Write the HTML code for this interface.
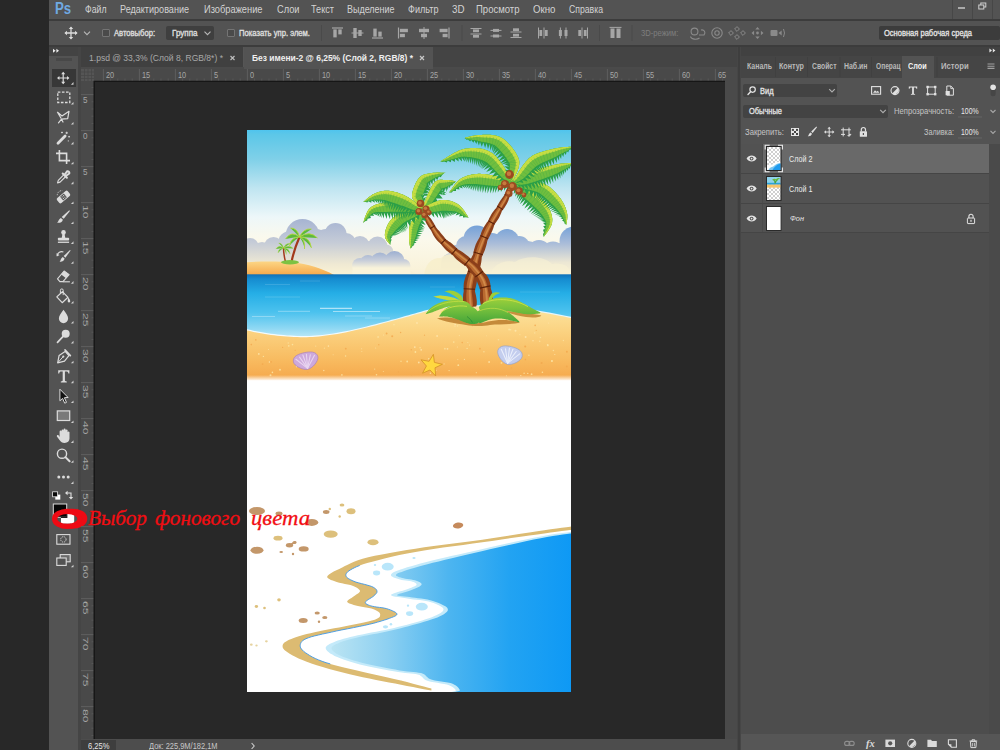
<!DOCTYPE html>
<html lang="ru"><head><meta charset="utf-8"><title>Photoshop</title>
<style>
html,body{margin:0;padding:0;background:#282828;}
body{width:1000px;height:750px;overflow:hidden;font-family:"Liberation Sans",sans-serif;}
#app{position:relative;width:1000px;height:750px;overflow:hidden;background:#282828;}
.b{position:absolute;}
.t{position:absolute;white-space:nowrap;transform-origin:0 50%;font-family:"Liberation Sans",sans-serif;}
svg{position:absolute;overflow:visible;}

</style></head>
<body>
<div id="app">
<!-- window background -->
<div class="b" style="left:49px;top:0;width:951px;height:750px;background:#535353"></div>
<!-- menu bar -->
<div class="b" style="left:49px;top:0;width:951px;height:19px;background:#535353"></div>
<div class="b" style="left:49px;top:19px;width:951px;height:2px;background:#3c3c3c"></div>
<!-- options bar -->
<div class="b" style="left:49px;top:21px;width:951px;height:24px;background:#535353"></div>
<div class="b" style="left:49px;top:45px;width:951px;height:2px;background:#3c3c3c"></div>
<!-- toolbar -->
<div class="b" style="left:49px;top:47px;width:30px;height:9px;background:#434343"></div>
<div class="b" style="left:49px;top:56px;width:29px;height:694px;background:#535353"></div>
<div class="b" style="left:56px;top:58px;width:16px;height:3px;background:#484848"></div>
<div class="b" style="left:78px;top:47px;width:3px;height:703px;background:#454545"></div>
<div class="b" style="left:52px;top:69px;width:24px;height:18px;background:#373737"></div>
<!-- doc tab bar -->
<div class="b" style="left:81px;top:47px;width:656px;height:22px;background:#444444"></div>
<div class="b" style="left:81px;top:47px;width:162px;height:20px;background:#404040"></div>
<div class="b" style="left:81px;top:67px;width:656px;height:2px;background:#4a4a4a"></div>
<div class="b" style="left:243px;top:47px;width:1.5px;height:20px;background:#565656"></div>
<div class="b" style="left:244px;top:47px;width:189px;height:22px;background:#535353"></div>
<!-- rulers -->
<div class="b" style="left:81px;top:69px;width:644px;height:12px;background:#494949"></div>
<div class="b" style="left:81px;top:69px;width:13px;height:670px;background:#494949"></div>
<!-- canvas -->
<div class="b" style="left:94px;top:81px;width:631px;height:658px;background:#282828"></div>
<!-- scroll track right -->
<div class="b" style="left:725px;top:69px;width:12px;height:681px;background:#4a4a4a"></div>
<!-- status bar -->
<div class="b" style="left:81px;top:739px;width:656px;height:11px;background:#4d4d4d"></div>
<div class="b" style="left:81px;top:740px;width:35px;height:10px;background:#3e3e3e"></div>
<!-- gutter -->
<div class="b" style="left:737px;top:47px;width:4px;height:703px;background:#464646"></div>
<div class="b" style="left:737.5px;top:47px;width:2px;height:703px;background:#3e3e3e"></div>
<!-- right panel -->
<div class="b" style="left:741px;top:47px;width:259px;height:9px;background:#414141"></div>
<div class="b" style="left:741px;top:56px;width:259px;height:22px;background:#454545"></div>
<div class="b" style="left:902px;top:56px;width:32px;height:22px;background:#535353"></div>
<div class="b" style="left:741px;top:78px;width:259px;height:66px;background:#535353"></div>
<div class="b" style="left:741px;top:144px;width:259px;height:590px;background:#4d4d4d"></div>
<div class="b" style="left:741px;top:734px;width:259px;height:16px;background:#565656"></div>
<!-- layers rows -->
<div class="b" style="left:741px;top:144px;width:248px;height:89px;background:#525252"></div>
<div class="b" style="left:763px;top:144px;width:226px;height:29px;background:#696969"></div>
<div class="b" style="left:741px;top:173px;width:248px;height:1px;background:#454545"></div>
<div class="b" style="left:741px;top:203px;width:248px;height:1px;background:#454545"></div>
<div class="b" style="left:741px;top:232px;width:248px;height:1px;background:#454545"></div>
<div class="b" style="left:989px;top:144px;width:11px;height:590px;background:#4a4a4a"></div>
<!-- dropdown boxes -->
<div class="b" style="left:166px;top:26px;width:48px;height:14px;background:#3f3f3f;border-radius:2px"></div>
<div class="b" style="left:879px;top:26px;width:121px;height:14px;background:#3c3c3c;border-radius:2px"></div>
<div class="b" style="left:743px;top:84px;width:94px;height:13px;background:#434343;border-radius:2px"></div>
<div class="b" style="left:743px;top:105px;width:145px;height:13px;background:#434343;border-radius:2px"></div>
<!-- checkboxes -->
<div class="b" style="left:102.3px;top:29px;width:6px;height:6px;border:1px solid #747474;border-radius:1px;box-sizing:content-box;background:#4a4a4a"></div>
<div class="b" style="left:227px;top:29px;width:6px;height:6px;border:1px solid #747474;border-radius:1px;box-sizing:content-box;background:#4a4a4a"></div>

<svg style="left:247px;top:130px;overflow:hidden" width="324" height="562" viewBox="247 130 324 562">
<defs>
<linearGradient id="sky" x1="0" y1="130" x2="0" y2="275" gradientUnits="userSpaceOnUse">
<stop offset="0" stop-color="#4fc4ee"/><stop offset="0.03" stop-color="#5cc7e8"/><stop offset="0.2" stop-color="#7fd0e8"/><stop offset="0.4" stop-color="#bfe5f1"/><stop offset="0.6" stop-color="#edf7f9"/><stop offset="0.75" stop-color="#fbf9ec"/><stop offset="1" stop-color="#f9f1d6"/></linearGradient>
<linearGradient id="cl1" x1="0" y1="219" x2="0" y2="272" gradientUnits="userSpaceOnUse">
<stop offset="0" stop-color="#a6b4d2"/><stop offset="0.45" stop-color="#c6ccd7"/><stop offset="0.85" stop-color="#efe9d3"/><stop offset="1" stop-color="#f8f0d4"/></linearGradient>
<linearGradient id="cl2" x1="0" y1="224" x2="0" y2="272" gradientUnits="userSpaceOnUse">
<stop offset="0" stop-color="#6f9fd8"/><stop offset="0.4" stop-color="#a9bcd9"/><stop offset="0.8" stop-color="#ece7d4"/><stop offset="1" stop-color="#f8f0d4"/></linearGradient>
<linearGradient id="cl3" x1="0" y1="250" x2="0" y2="268" gradientUnits="userSpaceOnUse">
<stop offset="0" stop-color="#97abd0"/><stop offset="0.6" stop-color="#c9cfda"/><stop offset="1" stop-color="#f9f3da"/></linearGradient>
<linearGradient id="sea" x1="0" y1="274" x2="0" y2="338" gradientUnits="userSpaceOnUse">
<stop offset="0" stop-color="#0f6fb8"/><stop offset="0.08" stop-color="#168cd0"/><stop offset="0.3" stop-color="#25aee6"/><stop offset="0.6" stop-color="#4cc2ee"/><stop offset="0.85" stop-color="#8fd8f3"/><stop offset="1" stop-color="#bfe9f8"/></linearGradient>
<linearGradient id="sand" x1="0" y1="305" x2="0" y2="378" gradientUnits="userSpaceOnUse">
<stop offset="0" stop-color="#fde6a2"/><stop offset="0.35" stop-color="#fbd382"/><stop offset="0.75" stop-color="#f8bb60"/><stop offset="1" stop-color="#f5a94d"/></linearGradient>
<linearGradient id="isl" x1="0" y1="261" x2="0" y2="275" gradientUnits="userSpaceOnUse">
<stop offset="0" stop-color="#fcd787"/><stop offset="1" stop-color="#f5a84a"/></linearGradient>
<linearGradient id="fade" x1="0" y1="375" x2="0" y2="381" gradientUnits="userSpaceOnUse">
<stop offset="0" stop-color="#fff" stop-opacity="0"/><stop offset="1" stop-color="#fff"/></linearGradient>
<linearGradient id="water" x1="326" y1="0" x2="571" y2="0" gradientUnits="userSpaceOnUse">
<stop offset="0" stop-color="#bfe6f3"/><stop offset="0.25" stop-color="#8dd0f1"/><stop offset="0.5" stop-color="#4db5f0"/><stop offset="0.75" stop-color="#22a3f2"/><stop offset="1" stop-color="#0e99f5"/></linearGradient>
<linearGradient id="trunk" x1="0" y1="0" x2="1" y2="0">
<stop offset="0" stop-color="#7a3514"/><stop offset="0.45" stop-color="#c77a3f"/><stop offset="1" stop-color="#8a3f18"/></linearGradient>
</defs>
<rect x="247" y="130" width="324" height="562" fill="#fff"/>
<rect x="247" y="130" width="324" height="146" fill="url(#sky)"/>
<g fill="url(#cl1)"><circle cx="250.0" cy="247.0" r="9.0"/><circle cx="262.0" cy="251.0" r="9.0"/><circle cx="273.5" cy="246.5" r="9.5"/><circle cx="284.0" cy="249.0" r="10.0"/><circle cx="302.5" cy="236.0" r="17.0"/><circle cx="290.0" cy="243.0" r="12.0"/><circle cx="316.0" cy="242.0" r="13.0"/><circle cx="326.0" cy="240.0" r="11.0"/><circle cx="335.5" cy="234.0" r="11.0"/><circle cx="346.0" cy="243.0" r="10.0"/><circle cx="360.0" cy="245.5" r="9.5"/><circle cx="369.0" cy="250.0" r="9.0"/><circle cx="377.5" cy="246.5" r="10.0"/><circle cx="386.0" cy="252.0" r="7.5"/><path d="M247,247 L286,240 L350,240 L386,247 L395,262 L420,276 L247,276Z"/></g>
<g fill="url(#cl3)"><circle cx="360.0" cy="266.0" r="8.0"/><circle cx="368.0" cy="263.0" r="8.0"/><circle cx="380.0" cy="262.0" r="9.5"/><circle cx="394.5" cy="261.0" r="10.0"/><circle cx="403.5" cy="266.0" r="7.0"/><path d="M353,267 L410,267 L411,276 L352,276Z"/></g>
<g fill="url(#cl2)"><circle cx="451.0" cy="263.0" r="10.0"/><circle cx="458.0" cy="254.0" r="9.5"/><circle cx="466.0" cy="246.0" r="10.0"/><circle cx="477.0" cy="239.0" r="13.5"/><circle cx="492.0" cy="245.0" r="12.0"/><circle cx="507.0" cy="241.0" r="12.0"/><circle cx="519.0" cy="247.0" r="11.0"/><circle cx="528.0" cy="251.0" r="10.0"/><circle cx="539.0" cy="252.0" r="12.0"/><circle cx="553.0" cy="254.0" r="12.5"/><circle cx="565.0" cy="250.0" r="9.0"/><circle cx="574.0" cy="241.0" r="14.5"/><path d="M441,263 L452,250 L571,244 L571,276 L441,276Z"/></g>
<path d="M424,276 C425,263 433,257 441,258 C447,253 457,253 463,259 C470,257 477,263 479,276Z" fill="#f7eecb" opacity="0.85"/>
<path d="M490,276 C492,264 505,259 515,262 C525,255 545,256 552,264 C562,262 571,266 571,276Z" fill="#f9f1d4" opacity="0.6"/>
<path d="M247,262.3 C262,261 280,261.3 292,262.3 C308,264 322,268.5 334,275 L247,275Z" fill="url(#isl)"/>
<path d="M291.5,262.0 Q294.0,249.5 299.5,237.0" stroke="#a3391c" stroke-width="2.2" fill="none" stroke-linecap="round"/><path d="M299.5,237.0 Q291.5,230.0 285.5,239.0 Q292.6,237.6 299.5,237.0" fill="#5dba3b"/><path d="M299.5,237.0 Q291.5,230.0 285.5,239.0" stroke="#b4d83e" stroke-width="0.9" fill="none"/><path d="M299.5,237.0 Q297.5,228.0 290.5,228.0 Q296.9,234.2 299.5,237.0" fill="#5dba3b"/><path d="M299.5,237.0 Q297.5,228.0 290.5,228.0" stroke="#b4d83e" stroke-width="0.9" fill="none"/><path d="M299.5,237.0 Q303.5,228.0 311.5,229.0 Q303.7,234.5 299.5,237.0" fill="#5dba3b"/><path d="M299.5,237.0 Q303.5,228.0 311.5,229.0" stroke="#b4d83e" stroke-width="0.9" fill="none"/><path d="M299.5,237.0 Q309.5,230.0 317.5,238.0 Q308.2,237.3 299.5,237.0" fill="#5dba3b"/><path d="M299.5,237.0 Q309.5,230.0 317.5,238.0" stroke="#b4d83e" stroke-width="0.9" fill="none"/><path d="M299.5,237.0 Q309.5,236.0 311.5,248.0 Q307.3,241.6 299.5,237.0" fill="#5dba3b"/><path d="M299.5,237.0 Q309.5,236.0 311.5,248.0" stroke="#b4d83e" stroke-width="0.9" fill="none"/><path d="M299.5,237.0 Q290.5,237.0 289.5,246.0 Q292.6,241.4 299.5,237.0" fill="#5dba3b"/><path d="M299.5,237.0 Q290.5,237.0 289.5,246.0" stroke="#b4d83e" stroke-width="0.9" fill="none"/><path d="M299.5,237.0 Q305.5,239.0 304.5,249.0 Q303.9,242.8 299.5,237.0" fill="#5dba3b"/><path d="M299.5,237.0 Q305.5,239.0 304.5,249.0" stroke="#b4d83e" stroke-width="0.9" fill="none"/>
<path d="M285.5,262.0 Q283.7,255.0 283.5,248.0" stroke="#a3391c" stroke-width="1.5" fill="none" stroke-linecap="round"/><path d="M283.5,248.0 Q279.1,244.2 275.8,249.1 Q279.7,248.3 283.5,248.0" fill="#5dba3b"/><path d="M283.5,248.0 Q279.1,244.2 275.8,249.1" stroke="#b4d83e" stroke-width="0.5" fill="none"/><path d="M283.5,248.0 Q282.4,243.1 278.6,243.1 Q282.1,246.5 283.5,248.0" fill="#5dba3b"/><path d="M283.5,248.0 Q282.4,243.1 278.6,243.1" stroke="#b4d83e" stroke-width="0.5" fill="none"/><path d="M283.5,248.0 Q285.7,243.1 290.1,243.6 Q285.8,246.6 283.5,248.0" fill="#5dba3b"/><path d="M283.5,248.0 Q285.7,243.1 290.1,243.6" stroke="#b4d83e" stroke-width="0.5" fill="none"/><path d="M283.5,248.0 Q289.0,244.2 293.4,248.6 Q288.3,248.2 283.5,248.0" fill="#5dba3b"/><path d="M283.5,248.0 Q289.0,244.2 293.4,248.6" stroke="#b4d83e" stroke-width="0.5" fill="none"/><path d="M283.5,248.0 Q289.0,247.4 290.1,254.1 Q287.8,250.6 283.5,248.0" fill="#5dba3b"/><path d="M283.5,248.0 Q289.0,247.4 290.1,254.1" stroke="#b4d83e" stroke-width="0.5" fill="none"/><path d="M283.5,248.0 Q278.6,248.0 278.0,252.9 Q279.7,250.4 283.5,248.0" fill="#5dba3b"/><path d="M283.5,248.0 Q278.6,248.0 278.0,252.9" stroke="#b4d83e" stroke-width="0.5" fill="none"/><path d="M283.5,248.0 Q286.8,249.1 286.2,254.6 Q285.9,251.2 283.5,248.0" fill="#5dba3b"/><path d="M283.5,248.0 Q286.8,249.1 286.2,254.6" stroke="#b4d83e" stroke-width="0.5" fill="none"/>
<ellipse cx="290" cy="262.3" rx="9" ry="2.2" fill="#7cc242"/>
<rect x="247" y="274.3" width="324" height="70" fill="url(#sea)"/>
<path d="M320,308.3 L352,308.3" stroke="#fff" stroke-opacity="0.80" stroke-width="0.9"/>
<path d="M333,311.5 L380,311.5" stroke="#fff" stroke-opacity="0.55" stroke-width="0.9"/>
<path d="M278,311.3 L310,311.3" stroke="#fff" stroke-opacity="0.40" stroke-width="0.9"/>
<path d="M252,316.5 L275,316.5" stroke="#fff" stroke-opacity="0.35" stroke-width="0.9"/>
<path d="M345,316.0 L372,316.0" stroke="#fff" stroke-opacity="0.30" stroke-width="0.9"/>
<path d="M365,318.0 L390,318.0" stroke="#fff" stroke-opacity="0.30" stroke-width="0.9"/>
<path d="M265,297.0 L300,297.0" stroke="#fff" stroke-opacity="0.18" stroke-width="0.9"/>
<path d="M300,281.0 L320,281.0" stroke="#fff" stroke-opacity="0.15" stroke-width="0.9"/>
<path d="M265,284.5 L290,284.5" stroke="#fff" stroke-opacity="0.15" stroke-width="0.9"/>
<path d="M430,287.0 L455,287.0" stroke="#fff" stroke-opacity="0.12" stroke-width="0.9"/>
<path d="M520,292.0 L560,292.0" stroke="#fff" stroke-opacity="0.12" stroke-width="0.9"/>
<path d="M247.0,330.5 L248.6,330.8 L250.8,331.3 L253.5,331.9 L256.4,332.5 L259.3,333.0 L262.2,333.5 L265.0,334.0 L268.0,334.5 L271.0,334.9 L274.1,335.3 L277.2,335.7 L280.4,336.0 L283.7,336.3 L287.1,336.6 L290.6,336.8 L294.0,337.0 L297.4,337.1 L300.6,337.2 L303.7,337.2 L306.6,337.2 L309.6,337.1 L312.5,336.9 L315.6,336.7 L318.9,336.4 L322.4,336.1 L326.0,335.6 L329.7,335.1 L333.5,334.6 L337.4,334.0 L341.3,333.3 L345.4,332.5 L349.6,331.6 L353.9,330.6 L358.2,329.6 L362.5,328.6 L366.7,327.6 L371.0,326.5 L375.4,325.4 L379.7,324.3 L383.9,323.1 L387.9,322.1 L391.7,321.0 L395.3,320.1 L398.8,319.1 L402.1,318.2 L405.3,317.3 L408.5,316.4 L411.7,315.5 L414.8,314.6 L417.9,313.7 L420.9,312.9 L423.9,312.0 L426.8,311.3 L429.7,310.6 L432.4,310.0 L435.1,309.5 L437.8,309.0 L440.7,308.5 L443.8,308.1 L447.4,307.8 L451.3,307.4 L455.4,307.1 L459.7,306.9 L464.2,306.7 L468.8,306.5 L473.5,306.5 L478.7,306.5 L484.1,306.5 L489.4,306.6 L494.5,306.8 L499.1,307.0 L503.2,307.2 L506.6,307.4 L509.8,307.7 L512.9,308.1 L516.0,308.5 L519.5,308.9 L523.4,309.5 L527.5,310.1 L531.7,310.7 L536.0,311.5 L540.4,312.2 L544.7,312.9 L549.3,313.8 L554.3,314.7 L559.4,315.7 L564.1,316.6 L568.1,317.4 L571.0,318.0 L571,381 L247,381Z" fill="#fff" transform="translate(0,-1.2)" opacity="0.85"/>
<path d="M247.0,330.5 L248.6,330.8 L250.8,331.3 L253.5,331.9 L256.4,332.5 L259.3,333.0 L262.2,333.5 L265.0,334.0 L268.0,334.5 L271.0,334.9 L274.1,335.3 L277.2,335.7 L280.4,336.0 L283.7,336.3 L287.1,336.6 L290.6,336.8 L294.0,337.0 L297.4,337.1 L300.6,337.2 L303.7,337.2 L306.6,337.2 L309.6,337.1 L312.5,336.9 L315.6,336.7 L318.9,336.4 L322.4,336.1 L326.0,335.6 L329.7,335.1 L333.5,334.6 L337.4,334.0 L341.3,333.3 L345.4,332.5 L349.6,331.6 L353.9,330.6 L358.2,329.6 L362.5,328.6 L366.7,327.6 L371.0,326.5 L375.4,325.4 L379.7,324.3 L383.9,323.1 L387.9,322.1 L391.7,321.0 L395.3,320.1 L398.8,319.1 L402.1,318.2 L405.3,317.3 L408.5,316.4 L411.7,315.5 L414.8,314.6 L417.9,313.7 L420.9,312.9 L423.9,312.0 L426.8,311.3 L429.7,310.6 L432.4,310.0 L435.1,309.5 L437.8,309.0 L440.7,308.5 L443.8,308.1 L447.4,307.8 L451.3,307.4 L455.4,307.1 L459.7,306.9 L464.2,306.7 L468.8,306.5 L473.5,306.5 L478.7,306.5 L484.1,306.5 L489.4,306.6 L494.5,306.8 L499.1,307.0 L503.2,307.2 L506.6,307.4 L509.8,307.7 L512.9,308.1 L516.0,308.5 L519.5,308.9 L523.4,309.5 L527.5,310.1 L531.7,310.7 L536.0,311.5 L540.4,312.2 L544.7,312.9 L549.3,313.8 L554.3,314.7 L559.4,315.7 L564.1,316.6 L568.1,317.4 L571.0,318.0 L571,381 L247,381Z" fill="url(#sand)"/>
<circle cx="457.6" cy="325.9" r="0.7" fill="#fde9a8" opacity="0.8"/>
<circle cx="268.5" cy="349.4" r="0.5" fill="#fde9a8" opacity="0.8"/>
<circle cx="383.4" cy="335.0" r="0.5" fill="#ffe9b0" opacity="0.8"/>
<circle cx="430.4" cy="373.2" r="0.8" fill="#fde9a8" opacity="0.8"/>
<circle cx="376.5" cy="374.7" r="0.8" fill="#fde9a8" opacity="0.8"/>
<circle cx="292.5" cy="344.6" r="0.8" fill="#fde9a8" opacity="0.8"/>
<circle cx="428.7" cy="358.8" r="0.8" fill="#fde9a8" opacity="0.8"/>
<circle cx="453.8" cy="342.1" r="0.8" fill="#fde9a8" opacity="0.8"/>
<circle cx="447.5" cy="348.8" r="0.9" fill="#ffe9b0" opacity="0.8"/>
<circle cx="398.5" cy="371.9" r="0.6" fill="#f3a84e" opacity="0.8"/>
<circle cx="503.4" cy="359.7" r="0.5" fill="#fce3a0" opacity="0.8"/>
<circle cx="345.8" cy="348.7" r="0.9" fill="#f3a84e" opacity="0.8"/>
<circle cx="341.9" cy="374.9" r="0.8" fill="#fde9a8" opacity="0.8"/>
<circle cx="547.7" cy="344.8" r="0.9" fill="#fde9a8" opacity="0.8"/>
<circle cx="432.8" cy="369.3" r="0.7" fill="#f3a84e" opacity="0.8"/>
<circle cx="361.7" cy="348.8" r="0.5" fill="#ffe9b0" opacity="0.8"/>
<circle cx="472.4" cy="325.5" r="0.8" fill="#f3a84e" opacity="0.8"/>
<circle cx="566.8" cy="366.4" r="0.9" fill="#f3a84e" opacity="0.8"/>
<circle cx="533.0" cy="340.7" r="0.7" fill="#ffe9b0" opacity="0.8"/>
<circle cx="444.9" cy="348.7" r="0.9" fill="#fce3a0" opacity="0.8"/>
<circle cx="374.7" cy="369.1" r="0.6" fill="#fde9a8" opacity="0.8"/>
<circle cx="378.1" cy="337.0" r="0.9" fill="#fce3a0" opacity="0.8"/>
<circle cx="525.6" cy="337.0" r="1.0" fill="#ffe9b0" opacity="0.8"/>
<circle cx="467.8" cy="342.5" r="0.6" fill="#fce3a0" opacity="0.8"/>
<circle cx="324.4" cy="348.2" r="0.6" fill="#fce3a0" opacity="0.8"/>
<circle cx="251.3" cy="344.6" r="0.8" fill="#f3a84e" opacity="0.8"/>
<circle cx="524.1" cy="373.3" r="0.7" fill="#fde9a8" opacity="0.8"/>
<circle cx="527.8" cy="373.4" r="0.7" fill="#ffe9b0" opacity="0.8"/>
<circle cx="375.7" cy="348.0" r="0.5" fill="#ffe9b0" opacity="0.8"/>
<circle cx="528.9" cy="355.2" r="0.8" fill="#fce3a0" opacity="0.8"/>
<circle cx="554.8" cy="354.5" r="0.6" fill="#ffe9b0" opacity="0.8"/>
<circle cx="520.8" cy="375.6" r="0.7" fill="#ffe9b0" opacity="0.8"/>
<circle cx="489.1" cy="362.0" r="0.9" fill="#ffe9b0" opacity="0.8"/>
<circle cx="553.4" cy="350.5" r="0.8" fill="#fce3a0" opacity="0.8"/>
<circle cx="541.6" cy="362.9" r="1.0" fill="#f3a84e" opacity="0.8"/>
<circle cx="525.4" cy="359.6" r="0.8" fill="#f3a84e" opacity="0.8"/>
<circle cx="539.7" cy="341.2" r="0.8" fill="#fce3a0" opacity="0.8"/>
<circle cx="498.5" cy="339.8" r="0.8" fill="#fce3a0" opacity="0.8"/>
<circle cx="501.5" cy="362.9" r="0.9" fill="#fce3a0" opacity="0.8"/>
<circle cx="511.0" cy="362.0" r="0.6" fill="#fce3a0" opacity="0.8"/>
<circle cx="407.2" cy="361.5" r="0.9" fill="#fde9a8" opacity="0.8"/>
<circle cx="400.6" cy="332.5" r="0.7" fill="#f3a84e" opacity="0.8"/>
<circle cx="548.9" cy="375.4" r="0.5" fill="#f3a84e" opacity="0.8"/>
<circle cx="282.6" cy="347.4" r="0.6" fill="#f3a84e" opacity="0.8"/>
<circle cx="449.1" cy="370.6" r="0.7" fill="#fde9a8" opacity="0.8"/>
<circle cx="458.3" cy="365.2" r="0.9" fill="#fde9a8" opacity="0.8"/>
<circle cx="288.2" cy="343.0" r="0.7" fill="#fce3a0" opacity="0.8"/>
<circle cx="306.9" cy="364.6" r="0.5" fill="#f3a84e" opacity="0.8"/>
<circle cx="551.8" cy="361.0" r="0.7" fill="#ffe9b0" opacity="0.8"/>
<circle cx="552.0" cy="361.1" r="1.0" fill="#fce3a0" opacity="0.8"/>
<circle cx="258.8" cy="353.9" r="0.9" fill="#ffe9b0" opacity="0.8"/>
<circle cx="296.6" cy="366.6" r="0.8" fill="#ffe9b0" opacity="0.8"/>
<circle cx="361.8" cy="351.6" r="0.5" fill="#fce3a0" opacity="0.8"/>
<circle cx="505.0" cy="361.2" r="0.8" fill="#fde9a8" opacity="0.8"/>
<circle cx="547.8" cy="345.4" r="0.9" fill="#fce3a0" opacity="0.8"/>
<circle cx="437.1" cy="336.0" r="0.9" fill="#ffe9b0" opacity="0.8"/>
<circle cx="269.4" cy="362.0" r="0.8" fill="#ffe9b0" opacity="0.8"/>
<circle cx="510.0" cy="349.9" r="0.8" fill="#fce3a0" opacity="0.8"/>
<circle cx="417.0" cy="323.0" r="0.9" fill="#ffe9b0" opacity="0.8"/>
<circle cx="444.1" cy="363.9" r="0.6" fill="#fce3a0" opacity="0.8"/>
<circle cx="401.0" cy="361.2" r="0.7" fill="#fde9a8" opacity="0.8"/>
<circle cx="415.4" cy="352.0" r="0.9" fill="#fde9a8" opacity="0.8"/>
<circle cx="535.2" cy="325.4" r="0.8" fill="#f3a84e" opacity="0.8"/>
<circle cx="411.3" cy="349.7" r="0.7" fill="#f3a84e" opacity="0.8"/>
<circle cx="420.1" cy="347.8" r="0.8" fill="#fce3a0" opacity="0.8"/>
<circle cx="529.6" cy="372.9" r="1.0" fill="#f3a84e" opacity="0.8"/>
<circle cx="534.8" cy="332.9" r="0.6" fill="#ffe9b0" opacity="0.8"/>
<circle cx="288.8" cy="345.9" r="0.8" fill="#fde9a8" opacity="0.8"/>
<circle cx="386.6" cy="333.5" r="0.9" fill="#f3a84e" opacity="0.8"/>
<circle cx="536.2" cy="330.3" r="0.6" fill="#f3a84e" opacity="0.8"/>
<circle cx="531.6" cy="374.2" r="0.9" fill="#fce3a0" opacity="0.8"/>
<circle cx="280.0" cy="369.8" r="1.0" fill="#fce3a0" opacity="0.8"/>
<circle cx="515.5" cy="330.7" r="1.0" fill="#ffe9b0" opacity="0.8"/>
<circle cx="378.8" cy="344.7" r="0.7" fill="#f3a84e" opacity="0.8"/>
<circle cx="480.4" cy="323.1" r="0.7" fill="#ffe9b0" opacity="0.8"/>
<circle cx="255.8" cy="339.9" r="0.8" fill="#f3a84e" opacity="0.8"/>
<circle cx="270.5" cy="375.2" r="1.0" fill="#fce3a0" opacity="0.8"/>
<circle cx="262.6" cy="364.1" r="0.9" fill="#f3a84e" opacity="0.8"/>
<circle cx="511.5" cy="367.9" r="0.7" fill="#f3a84e" opacity="0.8"/>
<circle cx="421.2" cy="349.8" r="0.9" fill="#ffe9b0" opacity="0.8"/>
<circle cx="469.5" cy="345.0" r="0.6" fill="#fde9a8" opacity="0.8"/>
<circle cx="333.1" cy="354.8" r="0.5" fill="#fce3a0" opacity="0.8"/>
<circle cx="525.2" cy="346.5" r="1.0" fill="#f3a84e" opacity="0.8"/>
<circle cx="383.3" cy="371.4" r="0.5" fill="#fce3a0" opacity="0.8"/>
<circle cx="476.3" cy="372.7" r="0.6" fill="#fce3a0" opacity="0.8"/>
<circle cx="307.8" cy="372.3" r="0.8" fill="#f3a84e" opacity="0.8"/>
<circle cx="315.7" cy="346.1" r="0.6" fill="#fce3a0" opacity="0.8"/>
<circle cx="506.4" cy="375.7" r="0.5" fill="#fde9a8" opacity="0.8"/>
<circle cx="483.9" cy="351.8" r="0.8" fill="#fce3a0" opacity="0.8"/>
<circle cx="328.4" cy="346.1" r="0.8" fill="#ffe9b0" opacity="0.8"/>
<circle cx="424.1" cy="370.0" r="0.8" fill="#f3a84e" opacity="0.8"/>
<circle cx="563.4" cy="340.5" r="0.7" fill="#fce3a0" opacity="0.8"/>
<circle cx="486.3" cy="335.8" r="0.5" fill="#fce3a0" opacity="0.8"/>
<circle cx="462.2" cy="342.6" r="0.8" fill="#f3a84e" opacity="0.8"/>
<circle cx="471.0" cy="324.4" r="0.6" fill="#fce3a0" opacity="0.8"/>
<circle cx="392.2" cy="336.2" r="1.0" fill="#f3a84e" opacity="0.8"/>
<circle cx="424.5" cy="335.2" r="0.6" fill="#f3a84e" opacity="0.8"/>
<circle cx="459.3" cy="335.4" r="0.5" fill="#fde9a8" opacity="0.8"/>
<circle cx="510.6" cy="329.8" r="0.7" fill="#fde9a8" opacity="0.8"/>
<circle cx="345.6" cy="356.0" r="0.8" fill="#fde9a8" opacity="0.8"/>
<circle cx="418.8" cy="362.5" r="0.9" fill="#ffe9b0" opacity="0.8"/>
<circle cx="479.9" cy="348.7" r="0.9" fill="#f3a84e" opacity="0.8"/>
<circle cx="455.2" cy="324.4" r="0.9" fill="#ffe9b0" opacity="0.8"/>
<circle cx="509.1" cy="329.5" r="0.9" fill="#fde9a8" opacity="0.8"/>
<circle cx="436.3" cy="370.2" r="0.5" fill="#fce3a0" opacity="0.8"/>
<circle cx="263.4" cy="356.4" r="0.7" fill="#fde9a8" opacity="0.8"/>
<circle cx="394.0" cy="324.7" r="0.8" fill="#fde9a8" opacity="0.8"/>
<circle cx="467.1" cy="348.4" r="0.7" fill="#fde9a8" opacity="0.8"/>
<circle cx="272.4" cy="372.4" r="0.8" fill="#fde9a8" opacity="0.8"/>
<circle cx="271.1" cy="361.8" r="0.9" fill="#f3a84e" opacity="0.8"/>
<circle cx="519.9" cy="334.7" r="0.6" fill="#fce3a0" opacity="0.8"/>
<circle cx="457.3" cy="346.9" r="0.5" fill="#ffe9b0" opacity="0.8"/>
<circle cx="540.4" cy="337.5" r="0.8" fill="#fde9a8" opacity="0.8"/>
<circle cx="455.0" cy="326.2" r="0.7" fill="#fce3a0" opacity="0.8"/>
<circle cx="457.8" cy="359.4" r="0.5" fill="#fce3a0" opacity="0.8"/>
<circle cx="464.4" cy="359.4" r="0.6" fill="#ffe9b0" opacity="0.8"/>
<circle cx="414.8" cy="347.1" r="0.9" fill="#ffe9b0" opacity="0.8"/>
<circle cx="566.9" cy="351.7" r="1.0" fill="#f3a84e" opacity="0.8"/>
<circle cx="548.7" cy="322.9" r="0.5" fill="#ffe9b0" opacity="0.8"/>
<circle cx="411.6" cy="375.7" r="0.7" fill="#f3a84e" opacity="0.8"/>
<circle cx="542.4" cy="372.2" r="0.8" fill="#fde9a8" opacity="0.8"/>
<circle cx="295.2" cy="350.3" r="0.6" fill="#f3a84e" opacity="0.8"/>
<circle cx="511.6" cy="349.5" r="0.9" fill="#fde9a8" opacity="0.8"/>
<circle cx="323.8" cy="370.5" r="0.7" fill="#ffe9b0" opacity="0.8"/>
<rect x="247" y="375" width="324" height="7" fill="url(#fade)"/>
<rect x="247" y="380.5" width="324" height="3" fill="#fff"/>
<g transform="translate(306.0,361.0) rotate(-12)"><path d="M0,8.5 C-5.0,8.5 -12.5,2.5 -12.5,-1.7 C-12.5,-7.7 -5.0,-8.5 0,-8.5 C5.0,-8.5 12.5,-7.7 12.5,-1.7 C12.5,2.5 5.0,8.5 0,8.5 Z" fill="#cda9dc" stroke="#a77fbd" stroke-width="0.6"/><path d="M0,7.5 L-9.5,-3.8" stroke="#e8d4f0" stroke-width="1.1" stroke-linecap="round"/><path d="M0,7.5 L-5.5,-5.1" stroke="#e8d4f0" stroke-width="1.1" stroke-linecap="round"/><path d="M0,7.5 L-1.8,-6.4" stroke="#e8d4f0" stroke-width="1.1" stroke-linecap="round"/><path d="M0,7.5 L1.8,-6.4" stroke="#e8d4f0" stroke-width="1.1" stroke-linecap="round"/><path d="M0,7.5 L5.5,-5.1" stroke="#e8d4f0" stroke-width="1.1" stroke-linecap="round"/><path d="M0,7.5 L9.5,-3.8" stroke="#e8d4f0" stroke-width="1.1" stroke-linecap="round"/></g>
<g transform="translate(509.5,355.5) rotate(14)"><path d="M0,9.0 C-5.0,9.0 -12.5,2.7 -12.5,-1.8 C-12.5,-8.1 -5.0,-9.0 0,-9.0 C5.0,-9.0 12.5,-8.1 12.5,-1.8 C12.5,2.7 5.0,9.0 0,9.0 Z" fill="#c3cdee" stroke="#8f9fd0" stroke-width="0.6"/><path d="M0,8.0 L-9.5,-4.1" stroke="#e9eefb" stroke-width="1.1" stroke-linecap="round"/><path d="M0,8.0 L-5.5,-5.5" stroke="#e9eefb" stroke-width="1.1" stroke-linecap="round"/><path d="M0,8.0 L-1.8,-6.9" stroke="#e9eefb" stroke-width="1.1" stroke-linecap="round"/><path d="M0,8.0 L1.8,-6.9" stroke="#e9eefb" stroke-width="1.1" stroke-linecap="round"/><path d="M0,8.0 L5.5,-5.5" stroke="#e9eefb" stroke-width="1.1" stroke-linecap="round"/><path d="M0,8.0 L9.5,-4.1" stroke="#e9eefb" stroke-width="1.1" stroke-linecap="round"/></g>
<path d="M433.4,354.3 L434.4,362.4 L442.4,364.3 L435.0,367.8 L435.7,376.0 L430.0,370.0 L422.5,373.2 L426.4,366.0 L421.0,359.8 L429.1,361.3Z" fill="#ffd83f" stroke="#d8962a" stroke-width="0.9" stroke-linejoin="round"/>
<path d="M437,318.6 C446,316 460,319 470,322.4 C474,323.6 482,323.6 488,321.6 C498,319 512,319.6 520,322.6 C515,324.6 500,324 490,325 C484,326.2 474,326.4 466,325 C455,323.4 444,321.6 437,318.6Z" fill="#c48a3a"/>
<path d="M505,311 C518,311.6 532,313.4 541.4,315.4 C540,317.4 533,318 526,317 C519,316 511,314.4 505,311Z" fill="#c8913e"/>
<path d="M509.9,183.1 L509.2,184.0 L508.4,185.3 L507.6,186.8 L506.9,188.5 L506.1,190.4 L505.4,192.3 L504.7,194.2 L503.7,195.9 L502.6,197.4 L501.5,199.0 L500.4,200.6 L499.3,202.3 L498.3,204.1 L497.3,206.0 L496.2,207.9 L494.8,209.5 L493.5,211.3 L492.2,213.0 L491.1,214.8 L490.1,216.7 L489.1,218.6 L488.3,220.7 L486.8,222.5 L485.5,224.4 L484.2,226.4 L483.1,228.5 L482.0,230.7 L481.1,233.0 L480.4,235.4 L479.3,237.7 L478.0,239.9 L476.8,242.2 L475.7,244.5 L474.9,246.9 L474.1,249.4 L473.6,251.9 L473.1,254.4 L471.9,256.7 L470.8,259.0 L469.9,261.4 L469.2,263.8 L468.6,266.2 L468.2,268.6 L467.9,271.1 L467.0,273.4 L465.9,275.8 L465.0,278.2 L464.3,280.7 L463.8,283.3 L463.6,286.0 L463.7,288.7 L463.7,291.5 L463.2,294.3 L463.0,297.2 L463.0,299.9 L463.2,302.3 L463.6,304.5 L464.1,306.2 L464.8,307.4 L476.2,306.6 L476.7,305.1 L476.8,303.2 L476.8,301.0 L476.5,298.7 L476.1,296.3 L475.6,293.9 L475.0,291.5 L475.1,289.3 L475.7,287.4 L476.1,285.4 L476.6,283.2 L476.9,281.0 L477.2,278.6 L477.4,276.2 L477.7,273.8 L478.7,271.5 L479.6,269.1 L480.3,266.8 L480.8,264.4 L481.3,262.0 L481.6,259.5 L481.8,257.1 L482.8,254.8 L483.8,252.6 L484.7,250.4 L485.5,248.1 L486.2,245.8 L486.8,243.5 L487.3,241.0 L488.2,238.8 L489.4,236.7 L490.5,234.6 L491.5,232.5 L492.4,230.4 L493.2,228.4 L493.9,226.3 L494.6,224.3 L495.9,222.6 L497.1,220.8 L498.3,219.0 L499.3,217.2 L500.2,215.3 L501.1,213.3 L501.8,211.3 L503.0,209.6 L504.3,207.9 L505.5,206.1 L506.6,204.3 L507.5,202.5 L508.4,200.5 L509.0,198.6 L509.8,196.6 L510.9,194.7 L511.8,192.7 L512.6,190.8 L513.2,189.0 L513.7,187.4 L514.0,186.0 L514.1,184.9Z" fill="#8b3f1a"/><path d="M511.0,183.6 L510.4,184.5 L509.7,185.8 L509.0,187.4 L508.3,189.1 L507.5,190.9 L506.7,192.9 L506.0,194.8 L505.1,196.6 L504.0,198.2 L503.0,199.9 L501.9,201.5 L500.9,203.3 L499.8,205.1 L498.7,206.9 L497.6,208.7 L496.4,210.5 L495.2,212.3 L494.0,214.1 L492.9,215.9 L491.8,217.7 L490.8,219.6 L489.9,221.6 L488.6,223.5 L487.4,225.4 L486.2,227.4 L485.2,229.5 L484.2,231.7 L483.2,233.9 L482.3,236.3 L481.3,238.6 L480.2,240.8 L479.1,243.1 L478.2,245.4 L477.3,247.8 L476.5,250.2 L475.9,252.6 L475.3,255.1 L474.3,257.4 L473.4,259.8 L472.6,262.1 L471.9,264.5 L471.3,266.9 L470.8,269.3 L470.4,271.8 L469.6,274.1 L468.7,276.5 L468.0,278.9 L467.4,281.3 L466.9,283.8 L466.6,286.3 L466.6,288.8 L466.6,291.5 L466.3,294.2 L466.3,297.0 L466.4,299.6 L466.6,302.0 L466.9,304.2 L467.2,305.9 L467.7,307.2 L472.8,306.8 L472.9,305.4 L472.9,303.6 L472.7,301.4 L472.5,299.1 L472.2,296.6 L471.9,294.0 L471.6,291.5 L471.7,289.1 L472.1,287.0 L472.4,284.7 L472.9,282.5 L473.3,280.2 L473.8,277.8 L474.2,275.4 L474.8,273.0 L475.6,270.6 L476.3,268.2 L476.9,265.9 L477.6,263.5 L478.1,261.1 L478.7,258.7 L479.2,256.3 L480.0,253.9 L480.9,251.6 L481.7,249.4 L482.5,247.1 L483.4,244.7 L484.2,242.4 L484.9,240.1 L485.9,237.8 L486.9,235.6 L488.0,233.4 L489.0,231.3 L489.9,229.2 L490.9,227.2 L491.8,225.2 L492.7,223.2 L493.9,221.4 L495.0,219.6 L496.1,217.8 L497.2,215.9 L498.2,214.1 L499.2,212.2 L500.2,210.3 L501.3,208.5 L502.5,206.8 L503.6,205.0 L504.7,203.2 L505.7,201.4 L506.6,199.6 L507.4,197.8 L508.3,195.9 L509.2,194.0 L510.1,192.0 L510.9,190.1 L511.5,188.4 L512.1,186.8 L512.6,185.4 L512.8,184.3Z" fill="#b9692f"/><path d="M511.8,183.9 L511.3,184.9 L510.8,186.2 L510.2,187.8 L509.4,189.6 L508.7,191.4 L507.8,193.4 L507.0,195.3 L506.1,197.1 L505.2,198.8 L504.2,200.5 L503.2,202.3 L502.1,204.0 L501.0,205.8 L499.9,207.6 L498.8,209.4 L497.6,211.2 L496.5,213.1 L495.4,214.9 L494.3,216.7 L493.2,218.6 L492.2,220.4 L491.1,222.3 L490.0,224.2 L488.9,226.2 L487.9,228.2 L486.9,230.3 L485.9,232.5 L484.9,234.7 L483.9,236.9 L482.9,239.2 L482.0,241.5 L481.0,243.8 L480.1,246.2 L479.3,248.5 L478.5,250.8 L477.7,253.2 L477.0,255.6 L476.2,258.0 L475.5,260.3 L474.8,262.7 L474.2,265.1 L473.5,267.5 L472.9,269.9 L472.3,272.3 L471.6,274.7 L471.0,277.1 L470.3,279.5 L469.8,281.8 L469.4,284.2 L469.0,286.6 L468.9,289.0 L468.8,291.5 L468.8,294.1 L468.9,296.8 L469.1,299.3 L469.3,301.7 L469.6,303.9 L469.8,305.7 L469.9,307.0 L471.6,306.9 L471.7,305.5 L471.5,303.7 L471.3,301.5 L471.1,299.2 L470.9,296.6 L470.7,294.1 L470.5,291.5 L470.6,289.1 L470.8,286.8 L471.2,284.5 L471.6,282.2 L472.1,279.9 L472.7,277.5 L473.2,275.1 L473.8,272.7 L474.5,270.3 L475.2,268.0 L475.8,265.6 L476.5,263.2 L477.1,260.8 L477.7,258.4 L478.3,256.0 L479.1,253.6 L479.9,251.3 L480.7,249.0 L481.6,246.7 L482.4,244.4 L483.3,242.1 L484.1,239.7 L485.1,237.4 L486.1,235.2 L487.1,233.0 L488.1,230.9 L489.1,228.8 L490.1,226.8 L491.1,224.8 L492.1,222.9 L493.2,221.0 L494.3,219.2 L495.4,217.3 L496.5,215.5 L497.5,213.7 L498.6,211.8 L499.6,210.0 L500.7,208.2 L501.9,206.4 L503.0,204.6 L504.1,202.8 L505.1,201.1 L506.1,199.3 L506.9,197.5 L507.8,195.6 L508.7,193.7 L509.5,191.8 L510.3,189.9 L511.0,188.1 L511.6,186.5 L512.1,185.2 L512.4,184.2Z" fill="#d08a4a"/><path d="M504.7,194.2 L509.8,196.6" stroke="#5a2008" stroke-width="1.1"/><path d="M497.3,206.0 L503.0,209.6" stroke="#5a2008" stroke-width="1.1"/><path d="M488.3,220.7 L494.6,224.3" stroke="#5a2008" stroke-width="1.1"/><path d="M480.4,235.4 L488.2,238.8" stroke="#5a2008" stroke-width="1.1"/><path d="M473.6,251.9 L482.8,254.8" stroke="#5a2008" stroke-width="1.1"/><path d="M467.9,271.1 L477.7,273.8" stroke="#5a2008" stroke-width="1.1"/><path d="M463.7,288.7 L475.1,289.3" stroke="#5a2008" stroke-width="1.1"/>
<path d="M421.3,211.9 L421.3,212.5 L421.4,213.2 L421.6,214.0 L422.0,214.8 L422.4,215.7 L423.0,216.7 L423.7,217.7 L424.3,219.0 L424.9,220.4 L425.5,221.8 L426.4,223.4 L427.4,225.1 L428.5,226.9 L429.9,228.8 L431.2,230.8 L432.3,233.0 L433.4,235.2 L434.7,237.3 L436.1,239.2 L437.6,241.0 L439.2,242.6 L440.9,243.9 L442.2,245.7 L443.5,247.3 L445.0,248.9 L446.5,250.4 L448.1,251.8 L449.8,253.0 L451.6,254.3 L453.3,255.8 L454.9,257.7 L456.6,259.4 L458.5,261.1 L460.4,262.6 L462.4,264.0 L464.4,265.3 L466.3,266.6 L467.6,268.4 L468.8,270.1 L470.0,271.7 L471.3,273.2 L472.6,274.6 L473.9,275.9 L475.3,277.0 L476.0,278.6 L476.5,280.2 L477.1,281.8 L477.6,283.3 L478.3,284.8 L478.9,286.3 L479.7,288.1 L480.2,290.4 L480.0,292.9 L479.9,295.4 L479.9,297.9 L480.0,300.2 L480.3,302.3 L480.7,304.2 L481.5,305.6 L492.5,304.4 L493.0,303.1 L493.1,301.4 L493.1,299.2 L492.9,296.8 L492.5,294.2 L491.8,291.4 L490.9,288.7 L490.5,285.9 L490.2,283.2 L489.5,280.6 L488.6,278.4 L487.4,276.3 L486.1,274.5 L484.5,272.9 L483.0,271.3 L482.0,269.4 L480.8,267.6 L479.4,266.0 L477.9,264.4 L476.2,262.9 L474.2,261.4 L471.9,260.1 L470.2,258.3 L468.4,256.5 L466.4,254.9 L464.4,253.4 L462.4,252.0 L460.4,250.8 L458.5,249.7 L456.8,248.3 L455.3,246.7 L453.7,245.2 L452.1,243.8 L450.6,242.6 L448.9,241.4 L447.3,240.3 L445.7,239.2 L444.5,237.6 L443.3,236.1 L442.0,234.5 L440.7,232.9 L439.3,231.1 L437.7,229.4 L436.2,227.6 L435.0,225.6 L434.0,223.6 L432.9,221.8 L431.8,220.1 L430.8,218.6 L429.8,217.4 L428.8,216.3 L428.1,215.3 L427.6,214.2 L427.2,213.2 L426.7,212.4 L426.2,211.6 L425.7,211.0 L425.2,210.5 L424.7,210.1Z" fill="#8b3f1a"/><path d="M422.2,211.4 L422.3,212.0 L422.5,212.7 L422.8,213.4 L423.2,214.2 L423.6,215.1 L424.2,216.0 L424.8,217.1 L425.4,218.3 L426.1,219.6 L426.8,221.0 L427.7,222.6 L428.7,224.3 L429.9,226.1 L431.1,228.0 L432.5,230.0 L433.6,232.1 L434.9,234.2 L436.2,236.2 L437.6,238.1 L439.0,239.8 L440.5,241.3 L442.1,242.8 L443.5,244.3 L444.9,245.9 L446.4,247.3 L447.9,248.7 L449.5,250.1 L451.1,251.4 L452.9,252.8 L454.6,254.3 L456.3,255.9 L458.1,257.6 L460.0,259.1 L461.9,260.7 L463.9,262.2 L465.9,263.6 L467.7,265.0 L469.3,266.7 L470.7,268.3 L472.0,269.9 L473.3,271.4 L474.6,272.9 L475.9,274.3 L477.2,275.6 L478.1,277.2 L478.9,278.8 L479.7,280.4 L480.4,282.1 L481.1,283.7 L481.7,285.5 L482.4,287.6 L482.9,290.0 L482.9,292.5 L483.0,295.1 L483.1,297.6 L483.3,300.0 L483.5,302.1 L483.8,303.9 L484.3,305.3 L489.2,304.8 L489.3,303.4 L489.3,301.7 L489.2,299.5 L489.0,297.1 L488.7,294.5 L488.3,291.9 L487.7,289.2 L487.2,286.6 L486.8,284.1 L486.1,281.9 L485.3,279.8 L484.3,278.0 L483.2,276.2 L482.0,274.6 L480.7,273.0 L479.6,271.3 L478.3,269.7 L477.0,268.1 L475.5,266.6 L474.0,265.0 L472.2,263.5 L470.3,262.1 L468.5,260.4 L466.6,258.8 L464.6,257.2 L462.7,255.7 L460.7,254.2 L458.8,252.8 L456.9,251.5 L455.2,250.1 L453.6,248.6 L452.0,247.2 L450.4,245.8 L448.9,244.5 L447.3,243.2 L445.8,241.9 L444.2,240.6 L442.9,239.1 L441.6,237.6 L440.3,235.9 L438.9,234.2 L437.5,232.4 L436.1,230.5 L434.7,228.5 L433.5,226.6 L432.3,224.6 L431.2,222.8 L430.2,221.1 L429.2,219.6 L428.3,218.3 L427.5,217.1 L426.8,216.0 L426.2,214.9 L425.7,214.0 L425.3,213.1 L424.8,212.3 L424.4,211.7 L424.1,211.1 L423.7,210.6Z" fill="#b9692f"/><path d="M422.8,211.1 L423.1,211.6 L423.4,212.2 L423.7,212.9 L424.1,213.7 L424.6,214.6 L425.1,215.5 L425.7,216.6 L426.3,217.8 L427.1,219.0 L427.9,220.4 L428.8,221.9 L429.8,223.6 L431.0,225.4 L432.2,227.4 L433.4,229.3 L434.7,231.4 L436.1,233.4 L437.4,235.3 L438.8,237.1 L440.2,238.8 L441.6,240.3 L443.1,241.8 L444.5,243.3 L446.0,244.7 L447.5,246.1 L449.0,247.4 L450.6,248.8 L452.2,250.2 L453.9,251.6 L455.6,253.0 L457.4,254.6 L459.2,256.1 L461.2,257.6 L463.1,259.1 L465.1,260.6 L467.0,262.2 L468.9,263.7 L470.6,265.3 L472.1,266.8 L473.6,268.4 L475.0,269.9 L476.3,271.5 L477.6,273.0 L478.8,274.5 L479.8,276.0 L480.8,277.7 L481.7,279.3 L482.6,281.1 L483.3,282.9 L484.0,284.9 L484.6,287.2 L485.0,289.6 L485.3,292.2 L485.5,294.8 L485.7,297.4 L485.9,299.8 L486.1,301.9 L486.2,303.7 L486.5,305.1 L488.1,304.9 L488.1,303.5 L488.0,301.8 L487.9,299.6 L487.7,297.2 L487.4,294.7 L487.1,292.0 L486.6,289.4 L486.2,286.8 L485.7,284.4 L485.0,282.3 L484.2,280.3 L483.3,278.5 L482.3,276.8 L481.1,275.2 L479.9,273.6 L478.8,272.0 L477.5,270.4 L476.2,268.9 L474.8,267.3 L473.2,265.8 L471.5,264.2 L469.7,262.7 L467.9,261.1 L466.0,259.5 L464.0,258.0 L462.1,256.5 L460.1,255.0 L458.2,253.5 L456.4,252.1 L454.7,250.7 L453.1,249.2 L451.5,247.8 L449.9,246.5 L448.3,245.1 L446.8,243.8 L445.3,242.5 L443.8,241.1 L442.4,239.6 L441.0,238.0 L439.7,236.4 L438.3,234.6 L436.9,232.8 L435.6,230.8 L434.2,228.9 L433.0,226.9 L431.8,224.9 L430.7,223.1 L429.6,221.4 L428.7,219.9 L427.8,218.6 L427.0,217.4 L426.3,216.2 L425.8,215.2 L425.3,214.2 L424.8,213.3 L424.4,212.6 L424.0,211.9 L423.7,211.3 L423.3,210.8Z" fill="#d08a4a"/><path d="M423.7,217.7 L428.1,215.3" stroke="#5a2008" stroke-width="1.1"/><path d="M429.9,228.8 L435.0,225.6" stroke="#5a2008" stroke-width="1.1"/><path d="M440.9,243.9 L445.7,239.2" stroke="#5a2008" stroke-width="1.1"/><path d="M451.6,254.3 L456.8,248.3" stroke="#5a2008" stroke-width="1.1"/><path d="M464.4,265.3 L470.2,258.3" stroke="#5a2008" stroke-width="1.1"/><path d="M475.3,277.0 L483.0,271.3" stroke="#5a2008" stroke-width="1.1"/><path d="M479.7,288.1 L490.5,285.9" stroke="#5a2008" stroke-width="1.1"/>
<defs><linearGradient id="lf" x1="0" y1="290" x2="0" y2="325" gradientUnits="userSpaceOnUse"><stop offset="0" stop-color="#b7d937"/><stop offset="0.5" stop-color="#7cc33d"/><stop offset="1" stop-color="#3fa23a"/></linearGradient></defs>
<path d="M444.5,291.1 L444.9,291.1 L445.5,291.0 L446.2,290.9 L447.0,290.8 L447.8,290.7 L448.6,290.6 L449.4,290.6 L450.1,290.6 L450.7,290.6 L451.4,290.7 L452.0,290.8 L452.7,290.8 L453.3,291.0 L453.9,291.1 L454.5,291.3 L455.1,291.4 L455.7,291.7 L456.2,291.9 L456.7,292.2 L457.3,292.4 L457.7,292.7 L458.2,293.1 L458.7,293.4 L459.1,293.7 L459.6,294.0 L460.0,294.4 L460.4,294.7 L460.8,295.1 L461.2,295.4 L461.5,295.8 L461.8,296.2 L462.1,296.7 L462.3,297.2 L462.6,297.7 L462.7,298.3 L462.9,298.9 L463.0,299.5 L463.1,299.9 L463.0,300.3 L462.9,300.6 L462.8,300.9 L462.6,301.1 L462.3,301.2 L461.9,301.3 L461.6,301.3 L461.2,301.2 L460.8,301.1 L460.3,300.9 L459.9,300.5 L459.4,300.1 L458.9,299.6 L458.3,299.1 L457.8,298.5 L457.2,298.0 L456.7,297.5 L456.1,297.1 L455.6,296.7 L455.0,296.4 L454.5,296.0 L453.9,295.6 L453.4,295.3 L452.8,295.0 L452.3,294.7 L451.8,294.4 L451.2,294.1 L450.7,293.8 L450.1,293.6 L449.6,293.3 L449.1,293.1 L448.5,292.8 L448.0,292.6 L447.5,292.4 L447.0,292.2 L446.5,291.9 L446.0,291.7 L445.5,291.5 L445.1,291.4 L444.8,291.2 L444.5,291.1Z" fill="#9ccf3a"/>
<path d="M500.5,292.9 L500.2,292.8 L499.8,292.8 L499.3,292.7 L498.7,292.5 L498.1,292.4 L497.5,292.4 L497.0,292.3 L496.4,292.3 L495.9,292.3 L495.4,292.3 L494.9,292.4 L494.5,292.5 L494.0,292.6 L493.5,292.7 L493.1,292.9 L492.7,293.1 L492.3,293.3 L492.0,293.5 L491.7,293.8 L491.4,294.1 L491.1,294.5 L490.8,294.9 L490.6,295.2 L490.3,295.7 L490.0,296.1 L489.7,296.7 L489.4,297.2 L489.1,297.8 L488.9,298.3 L488.7,298.8 L488.6,299.3 L488.6,299.7 L488.7,300.1 L488.9,300.5 L489.2,300.8 L489.5,301.2 L489.9,301.4 L490.2,301.5 L490.5,301.5 L490.8,301.4 L491.0,301.1 L491.3,300.6 L491.5,300.0 L491.8,299.4 L492.1,298.8 L492.4,298.2 L492.7,297.7 L493.1,297.3 L493.4,296.9 L493.8,296.5 L494.2,296.1 L494.6,295.8 L495.0,295.5 L495.5,295.1 L495.9,294.8 L496.5,294.5 L497.1,294.2 L497.7,294.0 L498.4,293.7 L499.1,293.4 L499.6,293.2 L500.1,293.0 L500.5,292.9Z" fill="#9ccf3a"/>
<path d="M433.3,296.7 L433.7,296.6 L434.3,296.5 L435.0,296.3 L435.8,296.1 L436.6,295.9 L437.5,295.8 L438.3,295.7 L439.1,295.6 L439.8,295.6 L440.6,295.6 L441.4,295.6 L442.2,295.7 L443.0,295.8 L443.8,295.8 L444.6,295.9 L445.3,296.0 L446.1,296.1 L446.8,296.2 L447.6,296.3 L448.3,296.4 L449.0,296.6 L449.8,296.7 L450.5,296.9 L451.2,297.0 L451.9,297.2 L452.6,297.4 L453.2,297.6 L453.9,297.8 L454.6,298.1 L455.3,298.3 L455.9,298.6 L456.6,298.9 L457.4,299.2 L458.1,299.6 L458.9,300.0 L459.7,300.4 L460.4,300.8 L461.1,301.2 L461.7,301.6 L462.2,302.0 L462.7,302.4 L463.1,302.9 L463.5,303.4 L463.9,303.9 L464.1,304.4 L464.2,304.7 L464.1,304.9 L463.8,305.0 L463.3,304.9 L462.7,304.7 L461.8,304.5 L460.9,304.1 L460.0,303.8 L459.1,303.4 L458.3,303.1 L457.6,302.9 L456.9,302.6 L456.3,302.4 L455.7,302.1 L455.1,301.9 L454.4,301.7 L453.8,301.5 L453.2,301.3 L452.6,301.1 L451.9,300.9 L451.3,300.8 L450.7,300.7 L450.1,300.6 L449.4,300.5 L448.8,300.3 L448.2,300.2 L447.5,300.1 L446.9,300.0 L446.3,299.9 L445.6,299.7 L445.0,299.6 L444.4,299.5 L443.7,299.4 L443.1,299.2 L442.5,299.1 L441.9,299.0 L441.3,298.8 L440.7,298.7 L440.1,298.6 L439.5,298.4 L438.9,298.3 L438.3,298.1 L437.6,297.9 L436.9,297.8 L436.2,297.5 L435.5,297.3 L434.8,297.1 L434.2,297.0 L433.7,296.8 L433.3,296.7Z" fill="#c3da3e"/>
<path d="M425.6,314.2 L425.9,313.8 L426.2,313.3 L426.6,312.8 L427.0,312.1 L427.5,311.5 L428.0,310.8 L428.5,310.1 L429.0,309.6 L429.6,309.0 L430.1,308.5 L430.7,308.0 L431.3,307.5 L431.9,307.0 L432.6,306.5 L433.3,306.0 L434.1,305.5 L435.0,305.0 L435.9,304.6 L436.9,304.1 L437.9,303.6 L439.0,303.1 L440.1,302.7 L441.2,302.3 L442.2,301.9 L443.3,301.6 L444.4,301.3 L445.5,301.0 L446.7,300.8 L447.8,300.6 L448.9,300.4 L450.0,300.3 L451.1,300.2 L452.2,300.1 L453.2,300.0 L454.3,300.0 L455.3,300.1 L456.4,300.1 L457.4,300.2 L458.4,300.2 L459.3,300.3 L460.3,300.4 L461.3,300.6 L462.3,300.7 L463.2,300.9 L464.1,301.1 L465.0,301.3 L465.8,301.6 L466.5,301.9 L467.2,302.3 L468.0,302.8 L468.6,303.3 L469.2,303.8 L469.7,304.3 L470.2,304.8 L470.4,305.3 L470.5,305.7 L470.5,306.2 L470.4,306.7 L470.2,307.2 L469.8,307.6 L469.4,308.0 L468.9,308.3 L468.3,308.5 L467.6,308.5 L466.8,308.4 L465.8,308.1 L464.8,307.8 L463.7,307.4 L462.5,307.1 L461.4,306.7 L460.4,306.5 L459.4,306.3 L458.4,306.2 L457.4,306.1 L456.4,306.0 L455.4,305.9 L454.4,305.9 L453.4,305.9 L452.5,306.0 L451.5,306.1 L450.6,306.2 L449.7,306.4 L448.8,306.6 L447.9,306.8 L447.0,307.0 L446.1,307.3 L445.2,307.5 L444.3,307.8 L443.4,308.1 L442.6,308.4 L441.7,308.7 L440.9,309.0 L440.0,309.3 L439.2,309.6 L438.3,310.0 L437.5,310.3 L436.6,310.6 L435.7,310.9 L434.9,311.3 L434.0,311.6 L433.2,311.9 L432.4,312.2 L431.6,312.5 L430.7,312.7 L429.9,313.0 L429.0,313.3 L428.2,313.5 L427.4,313.7 L426.7,313.9 L426.1,314.1 L425.6,314.2Z" fill="url(#lf)"/>
<path d="M478.8,307.0 L479.3,306.6 L479.9,306.0 L480.6,305.3 L481.4,304.6 L482.3,303.8 L483.2,303.0 L484.2,302.3 L485.1,301.8 L486.0,301.3 L486.9,300.8 L487.9,300.4 L488.9,300.0 L489.9,299.7 L490.9,299.4 L491.9,299.1 L492.9,298.8 L493.9,298.5 L494.9,298.3 L496.0,298.0 L497.0,297.8 L498.0,297.7 L499.1,297.6 L500.1,297.5 L501.2,297.4 L502.3,297.4 L503.3,297.4 L504.4,297.4 L505.5,297.5 L506.6,297.6 L507.7,297.7 L508.8,297.9 L509.9,298.0 L510.9,298.3 L512.0,298.5 L513.0,298.8 L514.1,299.2 L515.1,299.5 L516.2,299.9 L517.3,300.3 L518.3,300.7 L519.4,301.2 L520.5,301.7 L521.5,302.3 L522.6,302.9 L523.7,303.5 L524.7,304.1 L525.7,304.6 L526.8,305.2 L527.8,305.7 L528.7,306.3 L529.7,306.8 L530.7,307.4 L531.6,307.9 L532.6,308.4 L533.5,308.9 L534.4,309.4 L535.4,309.9 L536.5,310.4 L537.5,310.9 L538.5,311.4 L539.4,311.9 L540.0,312.3 L540.4,312.6 L540.3,312.9 L539.9,313.2 L539.2,313.4 L538.3,313.5 L537.2,313.7 L536.1,313.8 L535.0,313.9 L533.9,314.0 L533.0,314.0 L532.2,314.1 L531.3,314.2 L530.4,314.2 L529.6,314.3 L528.7,314.3 L527.7,314.3 L526.8,314.2 L525.8,314.1 L524.8,314.0 L523.8,313.9 L522.7,313.7 L521.6,313.5 L520.5,313.3 L519.4,313.1 L518.4,312.9 L517.3,312.7 L516.2,312.5 L515.2,312.3 L514.1,312.1 L513.0,312.0 L512.0,311.8 L510.9,311.6 L509.9,311.4 L508.9,311.3 L507.9,311.1 L506.9,311.0 L505.9,310.9 L505.0,310.7 L504.0,310.6 L503.1,310.5 L502.2,310.4 L501.3,310.3 L500.5,310.3 L499.7,310.2 L499.0,310.2 L498.2,310.2 L497.4,310.1 L496.6,310.2 L495.8,310.2 L494.9,310.2 L493.9,310.3 L492.9,310.4 L491.9,310.5 L491.0,310.7 L490.0,310.8 L489.0,311.0 L488.1,311.2 L487.2,311.4 L486.3,311.8 L485.4,312.3 L484.6,312.7 L483.7,313.1 L483.0,313.4 L482.3,313.5 L481.6,313.4 L481.1,313.0 L480.6,312.3 L480.2,311.4 L479.8,310.4 L479.5,309.3 L479.2,308.4 L479.0,307.6 L478.8,307.0Z" fill="url(#lf)"/>
<path d="M438.9,316.6 L439.2,316.2 L439.5,315.7 L439.9,315.0 L440.4,314.4 L440.9,313.6 L441.4,312.9 L442.0,312.2 L442.5,311.6 L443.1,311.0 L443.8,310.4 L444.4,309.8 L445.1,309.2 L445.8,308.6 L446.6,308.1 L447.3,307.6 L448.1,307.1 L448.9,306.7 L449.8,306.4 L450.7,306.0 L451.6,305.7 L452.5,305.4 L453.4,305.2 L454.3,305.0 L455.2,304.8 L456.1,304.6 L456.9,304.5 L457.8,304.4 L458.7,304.4 L459.6,304.3 L460.5,304.3 L461.4,304.4 L462.2,304.4 L463.1,304.5 L464.0,304.6 L465.0,304.8 L465.9,305.0 L466.8,305.2 L467.6,305.4 L468.5,305.6 L469.3,305.9 L470.0,306.1 L470.8,306.4 L471.5,306.6 L472.3,306.9 L472.9,307.2 L473.6,307.6 L474.2,308.0 L474.8,308.4 L475.4,308.8 L476.0,309.3 L476.5,309.9 L477.0,310.4 L477.5,311.0 L477.9,311.6 L478.2,312.3 L478.5,312.9 L478.8,313.6 L479.0,314.3 L479.2,315.1 L479.3,315.9 L479.4,316.6 L479.4,317.4 L479.4,318.1 L479.4,318.8 L479.3,319.4 L479.3,320.1 L479.2,320.7 L479.0,321.3 L478.8,321.9 L478.6,322.4 L478.2,322.9 L477.7,323.2 L477.1,323.5 L476.4,323.7 L475.6,323.8 L474.7,323.9 L473.9,324.0 L473.1,324.0 L472.3,324.0 L471.5,324.0 L470.8,323.9 L470.1,323.8 L469.4,323.7 L468.7,323.5 L468.0,323.3 L467.2,323.1 L466.4,322.9 L465.6,322.6 L464.7,322.3 L463.8,321.9 L462.9,321.6 L461.9,321.2 L461.0,320.8 L460.1,320.4 L459.2,320.1 L458.3,319.8 L457.4,319.4 L456.6,319.1 L455.7,318.9 L454.9,318.6 L454.0,318.3 L453.2,318.1 L452.3,317.8 L451.5,317.6 L450.6,317.4 L449.8,317.2 L448.9,317.0 L448.1,316.8 L447.2,316.6 L446.4,316.5 L445.6,316.4 L444.7,316.4 L443.7,316.3 L442.8,316.4 L441.8,316.4 L440.9,316.5 L440.1,316.5 L439.4,316.6 L438.9,316.6Z" fill="url(#lf)"/>
<path d="M477.4,322.0 L477.3,321.6 L477.2,321.0 L477.1,320.3 L476.9,319.5 L476.8,318.7 L476.7,317.9 L476.6,317.2 L476.6,316.5 L476.6,315.8 L476.6,315.1 L476.6,314.5 L476.6,313.8 L476.7,313.2 L476.9,312.6 L477.2,312.1 L477.7,311.5 L478.3,311.1 L479.0,310.6 L479.8,310.2 L480.7,309.8 L481.7,309.5 L482.7,309.1 L483.7,308.8 L484.7,308.5 L485.7,308.3 L486.7,308.0 L487.8,307.8 L488.9,307.6 L490.0,307.5 L491.0,307.3 L492.1,307.2 L493.0,307.2 L494.0,307.2 L494.9,307.2 L495.8,307.3 L496.7,307.3 L497.6,307.5 L498.5,307.6 L499.4,307.8 L500.3,308.1 L501.2,308.4 L502.0,308.7 L502.9,309.1 L503.8,309.5 L504.6,310.0 L505.5,310.4 L506.3,310.9 L507.1,311.4 L507.9,311.9 L508.7,312.4 L509.5,313.0 L510.2,313.6 L511.0,314.2 L511.8,314.8 L512.6,315.4 L513.4,316.1 L514.3,316.9 L515.3,317.8 L516.3,318.7 L517.3,319.6 L518.2,320.4 L518.9,321.1 L519.3,321.7 L519.4,322.1 L519.2,322.2 L518.8,322.2 L518.2,322.2 L517.5,322.0 L516.7,321.8 L515.9,321.6 L515.2,321.4 L514.7,321.3 L514.2,321.3 L513.8,321.2 L513.3,321.1 L512.9,320.9 L512.4,320.8 L511.8,320.7 L511.2,320.6 L510.6,320.4 L509.8,320.2 L509.0,320.0 L508.2,319.8 L507.3,319.6 L506.4,319.4 L505.6,319.2 L504.8,319.0 L504.0,318.9 L503.2,318.8 L502.5,318.7 L501.7,318.6 L501.0,318.5 L500.2,318.4 L499.4,318.4 L498.6,318.4 L497.7,318.4 L496.8,318.5 L495.9,318.5 L494.9,318.6 L494.0,318.7 L493.0,318.8 L492.1,319.0 L491.2,319.2 L490.3,319.4 L489.4,319.7 L488.5,320.0 L487.7,320.3 L486.8,320.7 L486.0,321.0 L485.3,321.3 L484.6,321.6 L483.9,321.8 L483.3,322.1 L482.8,322.3 L482.3,322.5 L481.8,322.7 L481.3,322.8 L480.9,322.9 L480.4,323.0 L480.0,323.0 L479.5,322.9 L479.1,322.8 L478.7,322.6 L478.3,322.4 L477.9,322.2 L477.6,322.1 L477.4,322.0Z" fill="url(#lf)"/>
<path d="M467,316.5 C469.6,318.4 471.4,320.4 472.4,322.6" stroke="#2e8b35" stroke-width="0.8" fill="none"/>
<path d="M441,312.6 C447,307.2 457,304.8 467,306.4" stroke="#cfe248" stroke-width="1" fill="none" opacity=".85"/>
<path d="M483,303.6 C493,298 512,297.6 528,306.6" stroke="#cfe248" stroke-width="1" fill="none" opacity=".85"/>
<path d="M480,310.6 C489,307 500,307.6 508,312.6" stroke="#cfe248" stroke-width="0.9" fill="none" opacity=".7"/>
<path d="M428,311.6 C436,304.4 450,300.2 464,301.6" stroke="#cfe248" stroke-width="0.9" fill="none" opacity=".7"/>
<path d="M422.0,208.0 L421.4,208.8 L420.6,209.7 L419.6,210.9 L418.5,212.2 L417.3,213.6 L416.0,215.1 L414.8,216.6 L413.7,218.1 L412.6,219.7 L411.7,221.1 L410.9,222.6 L410.3,223.9 L409.9,225.2 L409.6,226.6 L409.3,228.0 L409.1,229.3 L409.0,230.7 L409.0,232.0 L409.0,233.4 L409.0,234.7 L409.0,236.0 L409.0,237.2 L409.0,238.4 L409.1,239.6 L409.2,240.9 L409.3,242.1 L409.5,243.3 L409.7,244.5 L409.9,245.7 L410.1,246.8 L410.3,247.8 L410.5,248.6 L410.6,249.4 L410.7,250.0 L410.7,250.0 L410.6,249.4 L410.5,248.6 L411.7,247.5 L412.1,246.4 L414.5,244.8 L413.3,243.9 L416.5,242.3 L414.3,241.5 L418.2,240.0 L415.2,239.2 L419.8,238.1 L416.2,237.1 L421.2,235.8 L417.0,234.6 L422.4,233.5 L417.6,232.3 L423.4,231.6 L418.2,230.3 L424.1,230.2 L418.7,228.6 L424.5,229.4 L419.2,227.2 L424.6,229.1 L419.7,225.8 L424.8,227.8 L420.8,223.3 L425.6,224.9 L422.2,220.1 L426.5,221.3 L423.6,216.6 L426.8,217.1 L424.3,212.9 L425.6,212.3 L422.0,208.0Z" fill="#2b9f47"/><path d="M422.0,208.0 L421.4,208.8 L420.6,209.7 L419.6,210.9 L418.5,212.2 L417.3,213.6 L416.0,215.1 L414.8,216.6 L413.7,218.1 L412.6,219.7 L411.7,221.1 L410.9,222.6 L410.3,223.9 L409.9,225.2 L409.6,226.6 L409.3,228.0 L409.1,229.3 L409.0,230.7 L409.0,232.0 L409.0,233.4 L409.0,234.7 L409.0,236.0 L409.0,237.2 L409.0,238.4 L409.1,239.6 L409.2,240.9 L409.3,242.1 L409.5,243.3 L409.7,244.5 L409.9,245.7 L410.1,246.8 L410.3,247.8 L410.5,248.6 L410.6,249.4 L410.7,250.0 L410.7,250.0 L410.6,249.4 L410.5,248.6 L411.1,247.6 L411.9,246.4 L412.5,245.2 L413.0,244.0 L413.5,242.7 L413.9,241.5 L414.3,240.4 L414.7,239.3 L415.2,238.2 L415.6,237.1 L416.0,235.9 L416.3,234.6 L416.6,233.4 L416.9,232.3 L417.2,231.2 L417.5,230.2 L417.8,229.3 L418.0,228.4 L418.3,227.6 L418.5,226.9 L418.7,226.3 L419.0,225.4 L419.5,224.3 L420.2,222.9 L421.0,221.3 L421.8,219.7 L422.5,218.0 L423.2,216.2 L423.7,214.5 L424.0,212.7 L423.8,210.8 L422.0,208.0Z" fill="#6fbe3f"/><path d="M422.0,208.0 L421.4,208.8 L420.6,209.7 L419.6,210.9 L418.5,212.2 L417.3,213.6 L416.0,215.1 L414.8,216.6 L413.7,218.1 L412.6,219.7 L411.7,221.1 L410.9,222.6 L410.3,223.9 L409.9,225.2 L409.6,226.6 L409.3,228.0 L409.1,229.3 L409.0,230.7 L409.0,232.0 L409.0,233.4 L409.0,234.7 L409.0,236.0 L409.0,237.2 L409.0,238.4 L409.1,239.6 L409.2,240.9 L409.3,242.1 L409.5,243.3 L409.7,244.5 L409.9,245.7 L410.1,246.8 L410.3,247.8 L410.5,248.6 L410.6,249.4 L410.7,250.0 L410.7,250.0 L410.6,249.4 L410.5,248.6 L410.6,247.7 L410.7,246.6 L410.8,245.5 L410.8,244.3 L410.9,243.1 L410.9,241.9 L411.0,240.7 L411.0,239.5 L411.2,238.3 L411.3,237.2 L411.4,235.9 L411.5,234.7 L411.6,233.4 L411.8,232.1 L411.9,230.9 L412.1,229.6 L412.3,228.4 L412.5,227.2 L412.8,226.1 L413.2,225.0 L413.6,223.9 L414.2,222.6 L415.0,221.3 L416.0,219.8 L417.0,218.3 L418.0,216.7 L419.1,215.1 L420.1,213.6 L421.0,212.1 L421.8,210.8 L422.2,209.5 L422.0,208.0Z" fill="#c6dd42"/><path d="M421.3,210.4L424.1,212.7M419.5,213.0L423.3,216.4M417.2,216.0L421.9,219.9M415.0,219.1L420.4,223.0M413.2,222.0L419.3,225.6M412.1,224.5L418.8,227.0M411.3,227.0L418.3,228.5M410.9,229.5L417.8,230.2M410.7,232.1L417.2,232.3M410.5,234.7L416.6,234.6M410.4,237.2L415.8,237.1M410.3,239.5L414.9,239.3M410.3,242.0L414.1,241.5M410.4,244.4L413.1,244.0M410.5,246.7L412.0,246.4M410.5,248.6L410.5,248.6" stroke="#3aa545" stroke-width="0.5" opacity="0.55" fill="none"/>
<path d="M422.0,208.0 L420.6,208.3 L418.8,208.6 L416.7,209.0 L414.3,209.4 L411.7,209.9 L409.1,210.4 L406.5,211.0 L404.1,211.6 L401.9,212.3 L400.0,213.0 L398.4,213.8 L396.9,214.6 L395.6,215.5 L394.3,216.5 L393.2,217.5 L392.2,218.5 L391.2,219.6 L390.3,220.7 L389.5,221.8 L388.7,223.0 L388.0,224.2 L387.3,225.6 L386.7,227.0 L386.2,228.4 L385.7,229.8 L385.3,231.3 L385.1,232.7 L384.9,234.1 L384.9,235.5 L385.0,236.7 L385.3,237.9 L385.8,239.1 L386.5,240.3 L387.4,241.4 L388.3,242.6 L389.2,243.6 L390.1,244.6 L390.9,245.4 L391.5,246.1 L392.0,246.7 L392.0,246.7 L391.5,246.1 L390.9,245.4 L390.3,244.4 L390.5,242.4 L391.7,239.6 L390.3,239.2 L392.7,236.3 L390.5,236.7 L394.5,234.7 L391.6,235.6 L396.6,235.2 L392.8,234.7 L398.5,234.7 L394.0,233.2 L400.2,233.9 L395.4,231.5 L401.9,233.1 L396.8,230.0 L403.3,232.6 L398.1,228.9 L404.5,232.2 L399.5,227.7 L405.5,231.7 L400.7,226.6 L406.1,231.4 L401.8,225.6 L406.5,230.9 L403.0,224.5 L407.0,230.0 L404.4,223.2 L407.5,228.8 L406.9,221.6 L410.2,226.6 L411.0,219.5 L414.4,223.6 L415.7,217.1 L418.6,219.8 L419.8,214.1 L421.8,214.5 L422.0,208.0Z" fill="#2b9f47"/><path d="M422.0,208.0 L420.6,208.3 L418.8,208.6 L416.7,209.0 L414.3,209.4 L411.7,209.9 L409.1,210.4 L406.5,211.0 L404.1,211.6 L401.9,212.3 L400.0,213.0 L398.4,213.8 L396.9,214.6 L395.6,215.5 L394.3,216.5 L393.2,217.5 L392.2,218.5 L391.2,219.6 L390.3,220.7 L389.5,221.8 L388.7,223.0 L388.0,224.2 L387.3,225.6 L386.7,227.0 L386.2,228.4 L385.7,229.8 L385.3,231.3 L385.1,232.7 L384.9,234.1 L384.9,235.5 L385.0,236.7 L385.3,237.9 L385.8,239.1 L386.5,240.3 L387.4,241.4 L388.3,242.6 L389.2,243.6 L390.1,244.6 L390.9,245.4 L391.5,246.1 L392.0,246.7 L392.0,246.7 L391.5,246.1 L390.9,245.4 L390.2,244.4 L390.4,242.5 L390.3,240.9 L390.1,239.4 L390.0,238.0 L390.2,236.9 L390.5,236.1 L391.1,235.7 L391.6,235.3 L392.1,234.6 L392.7,233.9 L393.3,233.0 L394.0,232.2 L394.7,231.3 L395.4,230.5 L396.1,229.7 L396.7,229.0 L397.4,228.4 L398.0,227.8 L398.7,227.1 L399.4,226.5 L400.0,225.9 L400.6,225.4 L401.2,224.9 L401.8,224.3 L402.5,223.7 L403.3,223.0 L404.1,222.4 L405.1,221.7 L406.7,220.8 L408.6,219.9 L410.9,218.8 L413.2,217.7 L415.6,216.5 L417.8,215.2 L419.7,213.7 L421.3,211.8 L422.0,208.0Z" fill="#6fbe3f"/><path d="M422.0,208.0 L420.6,208.3 L418.8,208.6 L416.7,209.0 L414.3,209.4 L411.7,209.9 L409.1,210.4 L406.5,211.0 L404.1,211.6 L401.9,212.3 L400.0,213.0 L398.4,213.8 L396.9,214.6 L395.6,215.5 L394.3,216.5 L393.2,217.5 L392.2,218.5 L391.2,219.6 L390.3,220.7 L389.5,221.8 L388.7,223.0 L388.0,224.2 L387.3,225.6 L386.7,227.0 L386.2,228.4 L385.7,229.8 L385.3,231.3 L385.1,232.7 L384.9,234.1 L384.9,235.5 L385.0,236.7 L385.3,237.9 L385.8,239.1 L386.5,240.3 L387.4,241.4 L388.3,242.6 L389.2,243.6 L390.1,244.6 L390.9,245.4 L391.5,246.1 L392.0,246.7 L392.0,246.7 L391.5,246.1 L390.9,245.4 L390.1,244.5 L389.6,243.2 L389.0,242.0 L388.3,240.7 L387.8,239.5 L387.3,238.3 L387.1,237.3 L387.1,236.4 L387.2,235.4 L387.5,234.3 L387.8,233.1 L388.1,231.9 L388.6,230.7 L389.1,229.4 L389.7,228.2 L390.4,227.0 L391.0,225.9 L391.7,224.9 L392.5,223.9 L393.3,222.9 L394.1,222.0 L394.9,221.1 L395.8,220.2 L396.7,219.4 L397.8,218.6 L398.9,217.8 L400.1,217.0 L401.4,216.3 L403.0,215.6 L405.0,214.8 L407.3,214.1 L409.7,213.4 L412.2,212.6 L414.7,211.9 L417.1,211.1 L419.2,210.4 L420.9,209.5 L422.0,208.0Z" fill="#c6dd42"/><path d="M419.0,209.7L419.8,213.8M414.5,210.9L415.6,216.7M409.5,212.2L410.9,219.1M404.6,213.5L406.7,221.1M400.9,215.0L404.2,222.7M398.1,216.5L402.7,224.0M395.8,218.2L401.4,225.1M393.8,220.1L400.2,226.2M392.1,222.0L399.0,227.3M390.5,224.1L397.6,228.6M389.1,226.4L396.3,229.8M387.9,229.0L394.9,231.4M387.0,231.7L393.6,233.1M386.4,234.2L392.4,234.6M386.3,236.5L391.2,235.7M386.7,238.6L390.3,236.8M387.9,241.0L390.2,239.3M389.4,243.4L390.4,242.5M390.9,245.4L390.9,245.4" stroke="#3aa545" stroke-width="0.5" opacity="0.55" fill="none"/>
<path d="M422.0,208.0 L421.3,207.7 L420.4,207.2 L419.4,206.7 L418.2,206.1 L417.0,205.5 L415.6,204.8 L414.2,204.2 L412.8,203.6 L411.3,203.0 L409.9,202.5 L408.4,202.0 L407.0,201.7 L405.6,201.5 L404.1,201.3 L402.7,201.1 L401.2,201.0 L399.6,200.9 L398.1,200.9 L396.5,200.9 L395.0,201.0 L393.4,201.1 L391.8,201.3 L390.2,201.5 L388.7,201.7 L387.1,202.0 L385.5,202.2 L383.8,202.5 L382.1,202.9 L380.4,203.3 L378.7,203.7 L377.1,204.2 L375.5,204.7 L373.9,205.4 L372.5,206.2 L371.2,207.0 L370.0,208.0 L368.9,209.2 L368.0,210.6 L367.1,212.2 L366.2,214.0 L365.5,215.9 L364.8,217.7 L364.2,219.6 L363.7,221.4 L363.2,223.0 L362.7,224.5 L362.4,225.8 L362.0,226.7 L362.0,226.7 L362.4,225.8 L362.7,224.5 L363.2,223.0 L364.5,221.6 L367.2,220.6 L367.5,218.7 L370.9,217.9 L370.2,215.7 L374.2,215.8 L372.7,213.5 L376.7,215.3 L374.6,212.8 L378.0,216.3 L376.4,212.8 L379.6,217.2 L378.6,212.7 L381.6,217.9 L381.2,212.7 L384.0,218.5 L384.1,212.7 L386.9,218.9 L387.3,212.7 L390.0,219.3 L390.5,212.7 L392.8,219.5 L393.1,212.6 L394.9,219.7 L395.6,212.7 L397.0,219.9 L398.1,212.7 L399.1,219.9 L400.5,212.7 L401.0,219.8 L402.8,212.7 L402.8,219.6 L404.8,212.6 L403.9,219.0 L406.6,212.5 L405.5,218.3 L409.0,212.6 L408.1,217.8 L411.9,212.7 L411.3,217.0 L415.0,212.5 L414.8,215.7 L418.1,211.8 L418.8,212.9 L422.0,208.0Z" fill="#2b9f47"/><path d="M422.0,208.0 L421.3,207.7 L420.4,207.2 L419.4,206.7 L418.2,206.1 L417.0,205.5 L415.6,204.8 L414.2,204.2 L412.8,203.6 L411.3,203.0 L409.9,202.5 L408.4,202.0 L407.0,201.7 L405.6,201.5 L404.1,201.3 L402.7,201.1 L401.2,201.0 L399.6,200.9 L398.1,200.9 L396.5,200.9 L395.0,201.0 L393.4,201.1 L391.8,201.3 L390.2,201.5 L388.7,201.7 L387.1,202.0 L385.5,202.2 L383.8,202.5 L382.1,202.9 L380.4,203.3 L378.7,203.7 L377.1,204.2 L375.5,204.7 L373.9,205.4 L372.5,206.2 L371.2,207.0 L370.0,208.0 L368.9,209.2 L368.0,210.6 L367.1,212.2 L366.2,214.0 L365.5,215.9 L364.8,217.7 L364.2,219.6 L363.7,221.4 L363.2,223.0 L362.7,224.5 L362.4,225.8 L362.0,226.7 L362.0,226.7 L362.4,225.8 L362.7,224.5 L363.2,223.0 L364.4,221.6 L365.9,220.1 L367.3,218.6 L368.6,217.0 L369.9,215.6 L371.1,214.3 L372.3,213.3 L373.4,212.7 L374.2,212.4 L375.1,212.3 L376.1,212.2 L377.2,212.1 L378.3,212.1 L379.6,212.0 L381.0,212.0 L382.5,211.9 L384.0,211.9 L385.6,211.9 L387.2,211.9 L388.8,211.8 L390.3,211.8 L391.7,211.7 L393.0,211.7 L394.3,211.7 L395.5,211.7 L396.8,211.7 L398.1,211.7 L399.3,211.8 L400.5,211.8 L401.7,211.8 L402.9,211.8 L404.0,211.8 L405.0,211.7 L405.9,211.7 L406.8,211.7 L408.0,211.7 L409.3,211.8 L410.7,211.9 L412.2,212.0 L413.7,212.1 L415.2,212.0 L416.8,211.8 L418.3,211.4 L419.9,210.6 L422.0,208.0Z" fill="#6fbe3f"/><path d="M422.0,208.0 L421.3,207.7 L420.4,207.2 L419.4,206.7 L418.2,206.1 L417.0,205.5 L415.6,204.8 L414.2,204.2 L412.8,203.6 L411.3,203.0 L409.9,202.5 L408.4,202.0 L407.0,201.7 L405.6,201.5 L404.1,201.3 L402.7,201.1 L401.2,201.0 L399.6,200.9 L398.1,200.9 L396.5,200.9 L395.0,201.0 L393.4,201.1 L391.8,201.3 L390.2,201.5 L388.7,201.7 L387.1,202.0 L385.5,202.2 L383.8,202.5 L382.1,202.9 L380.4,203.3 L378.7,203.7 L377.1,204.2 L375.5,204.7 L373.9,205.4 L372.5,206.2 L371.2,207.0 L370.0,208.0 L368.9,209.2 L368.0,210.6 L367.1,212.2 L366.2,214.0 L365.5,215.9 L364.8,217.7 L364.2,219.6 L363.7,221.4 L363.2,223.0 L362.7,224.5 L362.4,225.8 L362.0,226.7 L362.0,226.7 L362.4,225.8 L362.7,224.5 L363.2,223.0 L363.9,221.5 L364.8,219.8 L365.7,218.0 L366.6,216.3 L367.5,214.6 L368.5,213.0 L369.5,211.6 L370.5,210.4 L371.5,209.6 L372.6,208.9 L373.8,208.3 L375.1,207.8 L376.5,207.3 L378.0,206.9 L379.5,206.6 L381.1,206.3 L382.8,206.0 L384.4,205.8 L386.1,205.6 L387.7,205.4 L389.3,205.2 L390.8,205.1 L392.2,204.9 L393.7,204.8 L395.2,204.8 L396.6,204.7 L398.1,204.7 L399.5,204.7 L400.9,204.8 L402.3,204.9 L403.7,205.0 L405.0,205.1 L406.3,205.2 L407.5,205.4 L408.8,205.7 L410.2,206.1 L411.6,206.5 L413.0,206.9 L414.4,207.4 L415.8,207.8 L417.2,208.2 L418.5,208.5 L419.7,208.7 L420.8,208.7 L422.0,208.0Z" fill="#c6dd42"/><path d="M420.0,208.1L418.2,211.6M417.6,207.4L415.1,212.2M414.9,206.4L412.1,212.3M412.1,205.3L409.2,212.1M409.2,204.4L406.7,212.0M406.6,203.8L404.9,212.1M403.9,203.5L402.8,212.1M401.0,203.3L400.5,212.1M398.1,203.2L398.1,212.1M395.1,203.3L395.6,212.1M392.1,203.5L393.0,212.1M389.0,203.8L390.4,212.1M385.8,204.3L387.2,212.2M382.5,204.8L384.0,212.2M379.2,205.4L381.1,212.2M376.1,206.3L378.4,212.3M373.3,207.4L376.2,212.4M370.9,208.9L374.4,212.6M368.9,211.2L372.5,213.4M367.0,214.3L370.0,215.6M365.3,217.9L367.4,218.6M363.8,221.4L364.5,221.6M362.7,224.5L362.7,224.5" stroke="#3aa545" stroke-width="0.5" opacity="0.55" fill="none"/>
<path d="M422.0,208.0 L421.3,207.4 L420.4,206.7 L419.4,205.8 L418.2,204.9 L417.0,203.8 L415.6,202.7 L414.2,201.6 L412.8,200.5 L411.3,199.4 L409.9,198.4 L408.4,197.5 L407.0,196.7 L405.6,196.0 L404.1,195.3 L402.6,194.6 L401.0,194.0 L399.4,193.4 L397.9,192.8 L396.3,192.3 L394.7,191.9 L393.1,191.5 L391.6,191.2 L390.1,191.0 L388.7,190.8 L387.3,190.7 L386.0,190.7 L384.7,190.8 L383.4,190.9 L382.1,191.1 L380.9,191.4 L379.6,191.7 L378.4,192.1 L377.2,192.5 L376.0,193.0 L374.9,193.5 L373.7,194.0 L372.5,194.6 L371.3,195.4 L370.1,196.3 L368.8,197.2 L367.6,198.2 L366.4,199.2 L365.3,200.2 L364.2,201.2 L363.2,202.0 L362.4,202.8 L361.6,203.5 L361.0,204.0 L361.0,204.0 L361.6,203.5 L362.4,202.8 L363.2,202.0 L364.8,201.8 L367.4,202.6 L368.3,201.3 L371.3,202.7 L371.5,200.6 L374.8,202.7 L374.4,200.0 L377.5,203.2 L376.7,200.0 L379.6,204.1 L378.9,200.1 L381.7,204.8 L381.1,200.2 L383.5,205.6 L383.0,200.5 L384.9,206.5 L384.7,200.9 L386.0,207.4 L386.3,201.3 L386.9,208.3 L387.8,201.9 L387.7,209.0 L389.5,202.5 L389.0,209.7 L391.7,203.2 L390.8,210.5 L394.1,204.0 L393.0,211.2 L396.7,204.9 L395.3,211.9 L399.4,205.8 L397.6,212.5 L401.8,206.5 L399.5,212.6 L404.1,207.2 L401.8,212.8 L406.9,208.3 L405.0,213.3 L410.2,209.4 L408.8,213.7 L413.6,210.4 L412.9,213.5 L417.1,210.6 L417.7,211.9 L422.0,208.0Z" fill="#2b9f47"/><path d="M422.0,208.0 L421.3,207.4 L420.4,206.7 L419.4,205.8 L418.2,204.9 L417.0,203.8 L415.6,202.7 L414.2,201.6 L412.8,200.5 L411.3,199.4 L409.9,198.4 L408.4,197.5 L407.0,196.7 L405.6,196.0 L404.1,195.3 L402.6,194.6 L401.0,194.0 L399.4,193.4 L397.9,192.8 L396.3,192.3 L394.7,191.9 L393.1,191.5 L391.6,191.2 L390.1,191.0 L388.7,190.8 L387.3,190.7 L386.0,190.7 L384.7,190.8 L383.4,190.9 L382.1,191.1 L380.9,191.4 L379.6,191.7 L378.4,192.1 L377.2,192.5 L376.0,193.0 L374.9,193.5 L373.7,194.0 L372.5,194.6 L371.3,195.4 L370.1,196.3 L368.8,197.2 L367.6,198.2 L366.4,199.2 L365.3,200.2 L364.2,201.2 L363.2,202.0 L362.4,202.8 L361.6,203.5 L361.0,204.0 L361.0,204.0 L361.6,203.5 L362.4,202.8 L363.2,202.0 L364.7,201.7 L366.5,201.5 L368.1,201.2 L369.7,200.7 L371.3,200.3 L372.7,199.9 L374.1,199.6 L375.3,199.5 L376.4,199.5 L377.5,199.5 L378.7,199.5 L379.8,199.5 L380.8,199.6 L381.9,199.7 L382.8,199.8 L383.7,199.9 L384.6,200.1 L385.4,200.3 L386.3,200.5 L387.1,200.7 L387.9,201.0 L388.7,201.2 L389.7,201.6 L390.8,201.9 L391.9,202.3 L393.2,202.7 L394.4,203.1 L395.7,203.6 L397.1,204.0 L398.4,204.5 L399.7,205.0 L401.0,205.4 L402.2,205.8 L403.3,206.1 L404.5,206.5 L405.9,207.1 L407.4,207.7 L409.0,208.3 L410.6,208.9 L412.3,209.5 L414.0,209.9 L415.7,210.2 L417.4,210.3 L419.2,210.0 L422.0,208.0Z" fill="#6fbe3f"/><path d="M422.0,208.0 L421.3,207.4 L420.4,206.7 L419.4,205.8 L418.2,204.9 L417.0,203.8 L415.6,202.7 L414.2,201.6 L412.8,200.5 L411.3,199.4 L409.9,198.4 L408.4,197.5 L407.0,196.7 L405.6,196.0 L404.1,195.3 L402.6,194.6 L401.0,194.0 L399.4,193.4 L397.9,192.8 L396.3,192.3 L394.7,191.9 L393.1,191.5 L391.6,191.2 L390.1,191.0 L388.7,190.8 L387.3,190.7 L386.0,190.7 L384.7,190.8 L383.4,190.9 L382.1,191.1 L380.9,191.4 L379.6,191.7 L378.4,192.1 L377.2,192.5 L376.0,193.0 L374.9,193.5 L373.7,194.0 L372.5,194.6 L371.3,195.4 L370.1,196.3 L368.8,197.2 L367.6,198.2 L366.4,199.2 L365.3,200.2 L364.2,201.2 L363.2,202.0 L362.4,202.8 L361.6,203.5 L361.0,204.0 L361.0,204.0 L361.6,203.5 L362.4,202.8 L363.2,202.0 L364.4,201.4 L365.7,200.7 L367.0,199.9 L368.3,199.1 L369.7,198.3 L371.0,197.5 L372.3,196.9 L373.5,196.3 L374.7,195.9 L375.8,195.6 L377.0,195.3 L378.1,195.0 L379.3,194.7 L380.4,194.5 L381.5,194.3 L382.7,194.2 L383.8,194.2 L384.9,194.1 L386.1,194.2 L387.2,194.2 L388.4,194.4 L389.6,194.6 L390.9,194.8 L392.3,195.2 L393.7,195.5 L395.2,196.0 L396.7,196.4 L398.1,197.0 L399.6,197.5 L401.1,198.1 L402.6,198.7 L404.0,199.3 L405.3,199.9 L406.6,200.5 L408.0,201.2 L409.4,202.1 L410.9,203.0 L412.4,203.9 L413.9,204.9 L415.3,205.8 L416.7,206.6 L418.1,207.4 L419.4,208.0 L420.6,208.3 L422.0,208.0Z" fill="#c6dd42"/><path d="M419.8,207.5L417.3,210.4M417.3,205.9L413.8,210.1M414.6,204.0L410.5,209.1M411.7,202.0L407.2,207.9M408.7,200.1L404.4,206.8M406.0,198.6L402.1,206.1M403.2,197.3L399.6,205.3M400.2,196.1L396.9,204.4M397.1,195.0L394.3,203.5M394.1,194.1L391.8,202.6M391.2,193.4L389.6,201.9M388.5,192.9L387.8,201.3M386.0,192.8L386.3,200.8M383.6,192.9L384.6,200.4M381.3,193.2L382.9,200.1M378.9,193.7L380.9,199.8M376.6,194.3L378.8,199.7M374.3,195.2L376.5,199.7M371.9,196.3L374.2,199.8M369.3,197.9L371.3,200.4M366.8,199.6L368.2,201.2M364.3,201.3L364.8,201.8M362.4,202.8L362.4,202.8" stroke="#3aa545" stroke-width="0.5" opacity="0.55" fill="none"/>
<path d="M422.0,208.0 L421.3,207.4 L420.4,206.6 L419.2,205.7 L417.9,204.6 L416.6,203.5 L415.3,202.3 L414.1,201.0 L413.1,199.6 L412.4,198.2 L412.0,196.7 L412.0,195.1 L412.2,193.2 L412.7,191.2 L413.3,189.1 L414.1,187.0 L415.0,184.8 L415.9,182.8 L416.9,181.0 L418.0,179.3 L419.0,178.0 L420.0,176.9 L421.2,176.0 L422.4,175.3 L423.6,174.8 L424.9,174.3 L426.3,174.0 L427.7,173.7 L429.1,173.5 L430.6,173.2 L432.0,173.0 L433.6,172.8 L435.3,172.7 L437.1,172.6 L439.0,172.6 L440.8,172.7 L442.6,172.8 L444.3,172.8 L445.8,172.9 L447.0,173.0 L448.0,173.0 L448.0,173.0 L447.0,173.0 L445.8,172.9 L444.3,173.1 L442.5,174.5 L440.7,177.2 L438.9,176.4 L437.2,180.0 L435.5,178.0 L434.5,182.4 L433.0,179.6 L432.4,184.8 L430.4,181.2 L430.2,187.0 L428.3,182.6 L429.2,188.8 L427.2,183.9 L429.9,189.9 L427.1,184.7 L431.7,189.9 L427.5,185.2 L433.0,189.7 L426.9,186.8 L432.6,191.4 L425.6,189.7 L431.7,193.9 L424.5,192.8 L430.9,196.0 L423.6,195.2 L430.3,196.2 L423.1,195.4 L428.7,192.2 L422.0,194.2 L426.5,190.9 L421.9,195.7 L425.8,193.1 L422.9,198.6 L426.0,197.0 L423.8,202.2 L425.5,202.6 L422.0,208.0Z" fill="#2b9f47"/><path d="M422.0,208.0 L421.3,207.4 L420.4,206.6 L419.2,205.7 L417.9,204.6 L416.6,203.5 L415.3,202.3 L414.1,201.0 L413.1,199.6 L412.4,198.2 L412.0,196.7 L412.0,195.1 L412.2,193.2 L412.7,191.2 L413.3,189.1 L414.1,187.0 L415.0,184.8 L415.9,182.8 L416.9,181.0 L418.0,179.3 L419.0,178.0 L420.0,176.9 L421.2,176.0 L422.4,175.3 L423.6,174.8 L424.9,174.3 L426.3,174.0 L427.7,173.7 L429.1,173.5 L430.6,173.2 L432.0,173.0 L433.6,172.8 L435.3,172.7 L437.1,172.6 L439.0,172.6 L440.8,172.7 L442.6,172.8 L444.3,172.8 L445.8,172.9 L447.0,173.0 L448.0,173.0 L448.0,173.0 L447.0,173.0 L445.8,172.9 L444.3,173.0 L442.5,174.4 L440.7,175.3 L438.9,176.1 L437.1,176.8 L435.5,177.6 L434.1,178.3 L432.9,179.1 L431.6,179.8 L430.3,180.6 L429.1,181.3 L428.1,182.0 L427.4,182.6 L426.9,183.2 L426.7,183.6 L426.6,184.0 L426.7,184.3 L426.8,184.6 L426.6,185.3 L426.1,186.4 L425.4,187.7 L424.8,189.3 L424.2,190.9 L423.6,192.5 L423.1,193.9 L422.7,195.1 L422.4,195.7 L422.2,195.5 L421.7,194.7 L421.3,194.6 L421.1,195.2 L421.4,196.3 L421.9,197.6 L422.5,199.1 L423.1,200.7 L423.6,202.6 L423.7,204.6 L422.0,208.0Z" fill="#6fbe3f"/><path d="M422.0,208.0 L421.3,207.4 L420.4,206.6 L419.2,205.7 L417.9,204.6 L416.6,203.5 L415.3,202.3 L414.1,201.0 L413.1,199.6 L412.4,198.2 L412.0,196.7 L412.0,195.1 L412.2,193.2 L412.7,191.2 L413.3,189.1 L414.1,187.0 L415.0,184.8 L415.9,182.8 L416.9,181.0 L418.0,179.3 L419.0,178.0 L420.0,176.9 L421.2,176.0 L422.4,175.3 L423.6,174.8 L424.9,174.3 L426.3,174.0 L427.7,173.7 L429.1,173.5 L430.6,173.2 L432.0,173.0 L433.6,172.8 L435.3,172.7 L437.1,172.6 L439.0,172.6 L440.8,172.7 L442.6,172.8 L444.3,172.8 L445.8,172.9 L447.0,173.0 L448.0,173.0 L448.0,173.0 L447.0,173.0 L445.8,172.9 L444.3,172.9 L442.6,173.3 L440.8,173.6 L438.9,173.8 L437.1,174.1 L435.3,174.4 L433.7,174.7 L432.3,175.1 L430.9,175.6 L429.5,176.0 L428.2,176.4 L426.9,176.8 L425.8,177.2 L424.8,177.7 L423.9,178.2 L423.1,178.8 L422.4,179.5 L421.7,180.3 L421.0,181.4 L420.1,182.9 L419.3,184.6 L418.4,186.4 L417.6,188.3 L416.9,190.3 L416.3,192.2 L415.9,193.9 L415.7,195.3 L415.6,196.3 L415.6,197.0 L415.9,197.9 L416.5,199.0 L417.4,200.2 L418.4,201.4 L419.5,202.7 L420.6,203.9 L421.5,205.2 L422.2,206.4 L422.0,208.0Z" fill="#c6dd42"/><path d="M421.0,205.7L423.7,202.4M418.9,203.5L422.6,198.9M416.5,201.0L421.6,196.1M414.8,198.6L421.5,194.5M414.1,196.4L422.5,195.4M414.4,193.6L423.0,195.1M415.5,189.8L423.9,192.6M417.0,185.8L425.1,189.4M418.9,182.1L426.4,186.5M420.6,179.4L427.0,184.8M422.3,177.7L426.8,184.3M424.3,176.5L427.0,183.4M426.7,175.7L428.2,182.2M429.4,175.0L430.3,180.8M432.2,174.3L432.9,179.3M435.3,173.7L435.5,177.7M438.9,173.4L438.9,176.2M442.6,173.1L442.5,174.4M445.8,172.9L445.8,172.9" stroke="#3aa545" stroke-width="0.5" opacity="0.55" fill="none"/>
<path d="M422.0,208.0 L422.6,206.6 L423.4,204.8 L424.3,202.6 L425.3,200.1 L426.5,197.5 L427.6,194.8 L428.9,192.1 L430.1,189.5 L431.3,187.1 L432.5,185.1 L433.6,183.4 L434.7,182.2 L435.8,181.3 L436.8,180.7 L437.9,180.2 L439.0,180.0 L440.1,179.8 L441.1,179.8 L442.2,179.8 L443.2,179.9 L444.3,180.0 L445.3,180.0 L446.3,180.0 L447.4,180.0 L448.5,180.1 L449.6,180.2 L450.8,180.4 L451.9,180.6 L453.0,180.8 L454.0,181.0 L454.9,181.3 L455.7,181.4 L456.4,181.6 L457.0,181.7 L457.0,181.7 L456.4,181.6 L455.7,181.4 L454.5,182.9 L453.5,183.3 L451.9,186.0 L451.1,184.7 L449.4,188.2 L448.9,185.8 L447.5,190.3 L447.1,187.0 L446.5,192.1 L445.3,188.1 L443.6,193.8 L442.6,188.9 L441.4,194.9 L441.1,189.5 L441.3,195.9 L440.9,190.0 L443.3,196.2 L441.7,190.1 L445.9,195.2 L442.2,189.8 L447.1,193.8 L441.3,190.6 L445.8,195.0 L439.0,193.9 L442.7,198.5 L435.9,198.4 L438.9,202.8 L432.4,203.1 L434.2,206.7 L428.4,206.9 L428.3,209.1 L422.0,208.0Z" fill="#2b9f47"/><path d="M422.0,208.0 L422.6,206.6 L423.4,204.8 L424.3,202.6 L425.3,200.1 L426.5,197.5 L427.6,194.8 L428.9,192.1 L430.1,189.5 L431.3,187.1 L432.5,185.1 L433.6,183.4 L434.7,182.2 L435.8,181.3 L436.8,180.7 L437.9,180.2 L439.0,180.0 L440.1,179.8 L441.1,179.8 L442.2,179.8 L443.2,179.9 L444.3,180.0 L445.3,180.0 L446.3,180.0 L447.4,180.0 L448.5,180.1 L449.6,180.2 L450.8,180.4 L451.9,180.6 L453.0,180.8 L454.0,181.0 L454.9,181.3 L455.7,181.4 L456.4,181.6 L457.0,181.7 L457.0,181.7 L456.4,181.6 L455.7,181.4 L454.7,182.2 L453.5,183.1 L452.3,183.8 L451.2,184.3 L450.0,184.9 L448.9,185.4 L448.0,185.9 L447.1,186.4 L446.4,186.9 L445.3,187.4 L443.9,187.8 L442.7,188.2 L441.7,188.5 L441.1,188.7 L440.7,189.0 L440.7,189.2 L441.0,189.3 L441.3,189.3 L441.5,189.2 L441.6,189.2 L441.3,189.4 L440.6,190.2 L439.6,191.6 L438.2,193.6 L436.8,195.8 L435.2,198.1 L433.5,200.5 L431.8,202.9 L430.0,205.0 L428.0,206.8 L425.9,208.1 L422.0,208.0Z" fill="#6fbe3f"/><path d="M422.0,208.0 L422.6,206.6 L423.4,204.8 L424.3,202.6 L425.3,200.1 L426.5,197.5 L427.6,194.8 L428.9,192.1 L430.1,189.5 L431.3,187.1 L432.5,185.1 L433.6,183.4 L434.7,182.2 L435.8,181.3 L436.8,180.7 L437.9,180.2 L439.0,180.0 L440.1,179.8 L441.1,179.8 L442.2,179.8 L443.2,179.9 L444.3,180.0 L445.3,180.0 L446.3,180.0 L447.4,180.0 L448.5,180.1 L449.6,180.2 L450.8,180.4 L451.9,180.6 L453.0,180.8 L454.0,181.0 L454.9,181.3 L455.7,181.4 L456.4,181.6 L457.0,181.7 L457.0,181.7 L456.4,181.6 L455.7,181.4 L454.8,181.6 L453.8,181.8 L452.7,181.8 L451.6,181.9 L450.5,182.0 L449.4,182.0 L448.3,182.1 L447.3,182.2 L446.4,182.4 L445.3,182.6 L444.2,182.7 L443.0,182.8 L442.0,182.9 L441.1,182.9 L440.3,183.1 L439.6,183.2 L439.0,183.4 L438.4,183.7 L437.8,184.1 L437.1,184.7 L436.3,185.5 L435.4,186.9 L434.2,188.7 L433.0,190.9 L431.6,193.4 L430.3,196.0 L428.9,198.6 L427.6,201.1 L426.3,203.4 L425.0,205.5 L423.8,207.1 L422.0,208.0Z" fill="#c6dd42"/><path d="M424.4,205.2L428.2,206.8M426.7,200.7L432.0,202.9M429.2,195.5L435.5,198.2M431.8,190.4L438.5,193.7M434.2,186.2L440.9,190.3M436.2,183.7L441.8,189.4M437.8,182.5L441.4,189.6M439.4,181.9L440.8,189.5M441.1,181.7L441.1,189.0M443.1,181.7L442.7,188.4M445.3,181.6L445.3,187.7M447.4,181.3L447.1,186.6M449.5,181.3L448.9,185.5M451.7,181.4L451.1,184.5M453.9,181.5L453.5,183.2M455.7,181.4L455.7,181.4" stroke="#3aa545" stroke-width="0.5" opacity="0.55" fill="none"/>
<path d="M422.0,208.0 L422.9,207.6 L423.9,207.1 L425.2,206.5 L426.6,205.8 L428.2,205.0 L429.8,204.2 L431.5,203.4 L433.3,202.6 L435.0,201.9 L436.7,201.3 L438.4,200.7 L440.0,200.3 L441.5,200.0 L442.9,199.9 L444.3,199.9 L445.7,200.0 L447.1,200.2 L448.4,200.4 L449.7,200.7 L451.1,201.1 L452.4,201.5 L453.6,202.0 L454.8,202.5 L456.0,203.2 L457.2,203.8 L458.3,204.5 L459.3,205.3 L460.4,206.2 L461.4,207.2 L462.4,208.4 L463.4,209.7 L464.4,211.0 L465.3,212.4 L466.1,213.7 L466.9,215.0 L467.7,216.3 L468.4,217.4 L469.0,218.5 L469.5,219.3 L470.0,220.0 L470.0,220.0 L469.5,219.3 L469.0,218.5 L468.2,217.6 L466.2,217.2 L463.0,217.4 L463.0,215.7 L459.1,216.4 L460.0,214.0 L455.6,215.4 L457.3,212.6 L452.7,215.1 L455.0,211.9 L451.0,215.9 L453.3,211.9 L449.4,216.7 L451.4,211.8 L447.8,217.3 L449.5,211.7 L446.4,217.9 L447.8,211.7 L445.3,218.4 L446.2,211.7 L444.4,218.8 L444.7,211.7 L443.9,218.9 L443.4,211.7 L443.9,218.8 L442.5,211.6 L443.6,218.4 L440.4,211.8 L441.4,218.2 L437.4,212.2 L438.2,218.0 L433.8,212.7 L434.3,217.6 L430.1,212.8 L430.1,216.4 L426.4,212.1 L425.5,213.4 L422.0,208.0Z" fill="#2b9f47"/><path d="M422.0,208.0 L422.9,207.6 L423.9,207.1 L425.2,206.5 L426.6,205.8 L428.2,205.0 L429.8,204.2 L431.5,203.4 L433.3,202.6 L435.0,201.9 L436.7,201.3 L438.4,200.7 L440.0,200.3 L441.5,200.0 L442.9,199.9 L444.3,199.9 L445.7,200.0 L447.1,200.2 L448.4,200.4 L449.7,200.7 L451.1,201.1 L452.4,201.5 L453.6,202.0 L454.8,202.5 L456.0,203.2 L457.2,203.8 L458.3,204.5 L459.3,205.3 L460.4,206.2 L461.4,207.2 L462.4,208.4 L463.4,209.7 L464.4,211.0 L465.3,212.4 L466.1,213.7 L466.9,215.0 L467.7,216.3 L468.4,217.4 L469.0,218.5 L469.5,219.3 L470.0,220.0 L470.0,220.0 L469.5,219.3 L469.0,218.5 L468.3,217.5 L466.3,217.1 L464.7,216.4 L463.2,215.5 L461.8,214.7 L460.3,213.8 L459.0,213.0 L457.7,212.3 L456.5,211.7 L455.4,211.4 L454.6,211.3 L453.7,211.3 L452.8,211.2 L451.8,211.1 L450.8,211.0 L449.9,210.9 L448.9,210.9 L448.0,210.8 L447.2,210.8 L446.4,210.8 L445.6,210.8 L444.8,210.8 L444.1,210.8 L443.4,210.8 L442.9,210.7 L442.3,210.7 L441.4,210.8 L440.1,210.9 L438.7,211.2 L437.0,211.5 L435.3,211.7 L433.5,212.0 L431.7,212.2 L429.8,212.2 L428.0,212.1 L426.2,211.7 L424.4,210.9 L422.0,208.0Z" fill="#6fbe3f"/><path d="M422.0,208.0 L422.9,207.6 L423.9,207.1 L425.2,206.5 L426.6,205.8 L428.2,205.0 L429.8,204.2 L431.5,203.4 L433.3,202.6 L435.0,201.9 L436.7,201.3 L438.4,200.7 L440.0,200.3 L441.5,200.0 L442.9,199.9 L444.3,199.9 L445.7,200.0 L447.1,200.2 L448.4,200.4 L449.7,200.7 L451.1,201.1 L452.4,201.5 L453.6,202.0 L454.8,202.5 L456.0,203.2 L457.2,203.8 L458.3,204.5 L459.3,205.3 L460.4,206.2 L461.4,207.2 L462.4,208.4 L463.4,209.7 L464.4,211.0 L465.3,212.4 L466.1,213.7 L466.9,215.0 L467.7,216.3 L468.4,217.4 L469.0,218.5 L469.5,219.3 L470.0,220.0 L470.0,220.0 L469.5,219.3 L469.0,218.5 L468.3,217.5 L467.2,216.6 L466.2,215.5 L465.1,214.4 L464.0,213.2 L463.0,212.0 L461.9,210.8 L460.8,209.8 L459.7,208.8 L458.7,208.0 L457.7,207.4 L456.7,206.9 L455.6,206.4 L454.5,205.9 L453.4,205.5 L452.3,205.1 L451.2,204.8 L450.0,204.5 L448.9,204.2 L447.7,204.0 L446.5,203.9 L445.4,203.8 L444.2,203.7 L443.1,203.7 L442.0,203.8 L440.8,204.0 L439.5,204.3 L437.9,204.7 L436.3,205.2 L434.6,205.7 L432.8,206.3 L431.1,206.9 L429.4,207.5 L427.7,208.0 L426.2,208.5 L424.7,208.7 L423.4,208.8 L422.0,208.0Z" fill="#c6dd42"/><path d="M424.4,208.1L426.3,211.9M427.3,207.1L429.9,212.4M430.6,205.9L433.6,212.2M434.1,204.5L437.2,211.7M437.5,203.3L440.2,211.3M440.5,202.5L442.4,211.1M443.0,202.2L443.4,211.1M445.5,202.3L444.8,211.1M448.0,202.6L446.3,211.1M450.4,203.1L448.0,211.1M452.8,203.9L449.7,211.2M455.1,204.8L451.6,211.3M457.3,205.9L453.6,211.5M459.3,207.3L455.3,211.6M461.4,209.2L457.5,212.4M463.5,211.6L460.2,213.9M465.5,214.1L463.1,215.6M467.4,216.5L466.3,217.1M469.0,218.5L469.0,218.5" stroke="#3aa545" stroke-width="0.5" opacity="0.55" fill="none"/>
<circle cx="420.5" cy="203.5" r="3.8" fill="#9c4a20"/>
<circle cx="419.9" cy="202.8" r="1.9" fill="#c77a3f"/>
<circle cx="426.0" cy="209.0" r="3.6" fill="#9c4a20"/>
<circle cx="425.4" cy="208.3" r="1.8" fill="#c77a3f"/>
<circle cx="419.0" cy="211.5" r="3.6" fill="#9c4a20"/>
<circle cx="418.4" cy="210.8" r="1.8" fill="#c77a3f"/>
<circle cx="424.5" cy="215.0" r="3.2" fill="#9c4a20"/>
<circle cx="423.9" cy="214.3" r="1.6" fill="#c77a3f"/>
<circle cx="429.0" cy="212.5" r="2.6" fill="#9c4a20"/>
<circle cx="428.4" cy="211.8" r="1.3" fill="#c77a3f"/>
<path d="M513.0,181.0 L513.7,181.3 L514.5,181.6 L515.4,181.9 L516.5,182.3 L517.7,182.6 L518.9,183.1 L520.2,183.6 L521.6,184.1 L522.9,184.7 L524.3,185.3 L525.7,186.0 L527.0,186.7 L528.4,187.6 L529.6,188.5 L531.0,189.4 L532.4,190.5 L533.8,191.7 L535.3,192.9 L536.8,194.2 L538.3,195.5 L539.8,196.8 L541.2,198.2 L542.6,199.6 L543.8,201.0 L545.0,202.3 L546.1,203.7 L547.0,205.0 L547.8,206.3 L548.6,207.6 L549.3,208.9 L549.9,210.3 L550.5,211.6 L551.0,212.9 L551.4,214.3 L551.8,215.6 L552.0,217.0 L552.2,218.3 L552.3,219.7 L552.2,221.0 L552.1,222.3 L551.9,223.7 L551.4,225.1 L550.8,226.6 L549.9,228.1 L549.0,229.6 L548.0,231.1 L546.9,232.7 L545.8,234.1 L544.8,235.5 L543.7,236.8 L542.8,238.0 L541.9,239.1 L541.2,240.0 L540.7,240.8 L540.7,240.8 L541.2,240.0 L541.9,239.1 L542.8,238.0 L543.7,236.8 L543.0,234.1 L544.0,232.8 L543.0,229.8 L545.0,229.1 L543.2,225.9 L545.7,225.7 L542.9,222.7 L545.9,223.0 L541.8,221.1 L545.3,221.4 L540.4,220.3 L544.5,219.8 L539.1,219.5 L543.6,218.3 L537.7,218.7 L542.5,216.8 L536.4,218.0 L541.3,215.3 L535.0,217.1 L540.0,213.7 L533.6,216.0 L538.5,212.0 L532.1,214.9 L537.0,210.4 L530.8,214.0 L535.2,208.6 L529.0,212.5 L533.0,206.5 L526.8,210.6 L530.4,204.2 L524.4,208.5 L527.8,201.9 L522.1,206.3 L525.3,199.6 L519.9,204.2 L523.1,197.6 L518.6,202.4 L521.6,196.0 L517.8,200.9 L519.9,194.4 L516.6,199.1 L518.1,192.7 L515.2,196.8 L516.1,190.8 L513.7,194.2 L514.3,188.7 L512.4,190.9 L512.9,186.1 L511.7,186.3 L513.0,181.0Z" fill="#2b9f47"/><path d="M513.0,181.0 L513.7,181.3 L514.5,181.6 L515.4,181.9 L516.5,182.3 L517.7,182.6 L518.9,183.1 L520.2,183.6 L521.6,184.1 L522.9,184.7 L524.3,185.3 L525.7,186.0 L527.0,186.7 L528.4,187.6 L529.6,188.5 L531.0,189.4 L532.4,190.5 L533.8,191.7 L535.3,192.9 L536.8,194.2 L538.3,195.5 L539.8,196.8 L541.2,198.2 L542.6,199.6 L543.8,201.0 L545.0,202.3 L546.1,203.7 L547.0,205.0 L547.8,206.3 L548.6,207.6 L549.3,208.9 L549.9,210.3 L550.5,211.6 L551.0,212.9 L551.4,214.3 L551.8,215.6 L552.0,217.0 L552.2,218.3 L552.3,219.7 L552.2,221.0 L552.1,222.3 L551.9,223.7 L551.4,225.1 L550.8,226.6 L549.9,228.1 L549.0,229.6 L548.0,231.1 L546.9,232.7 L545.8,234.1 L544.8,235.5 L543.7,236.8 L542.8,238.0 L541.9,239.1 L541.2,240.0 L540.7,240.8 L540.7,240.8 L541.2,240.0 L541.9,239.1 L542.8,238.0 L543.7,236.8 L543.8,234.7 L544.2,232.9 L544.7,231.0 L545.2,229.2 L545.7,227.5 L546.0,225.9 L546.3,224.4 L546.3,223.1 L546.1,222.2 L545.8,221.4 L545.5,220.6 L545.1,219.8 L544.7,219.0 L544.2,218.2 L543.8,217.4 L543.2,216.6 L542.7,215.8 L542.1,215.0 L541.4,214.1 L540.7,213.3 L540.0,212.4 L539.3,211.5 L538.5,210.7 L537.8,209.9 L536.9,209.0 L535.9,208.0 L534.8,207.0 L533.6,205.9 L532.4,204.7 L531.1,203.5 L529.7,202.3 L528.4,201.2 L527.1,200.0 L525.9,198.9 L524.7,197.8 L523.6,196.9 L522.8,196.0 L522.0,195.3 L521.2,194.5 L520.3,193.7 L519.3,192.9 L518.3,192.0 L517.3,191.1 L516.3,190.2 L515.4,189.2 L514.5,188.2 L513.7,187.0 L513.0,185.7 L512.6,184.2 L513.0,181.0Z" fill="#6fbe3f"/><path d="M513.0,181.0 L513.7,181.3 L514.5,181.6 L515.4,181.9 L516.5,182.3 L517.7,182.6 L518.9,183.1 L520.2,183.6 L521.6,184.1 L522.9,184.7 L524.3,185.3 L525.7,186.0 L527.0,186.7 L528.4,187.6 L529.6,188.5 L531.0,189.4 L532.4,190.5 L533.8,191.7 L535.3,192.9 L536.8,194.2 L538.3,195.5 L539.8,196.8 L541.2,198.2 L542.6,199.6 L543.8,201.0 L545.0,202.3 L546.1,203.7 L547.0,205.0 L547.8,206.3 L548.6,207.6 L549.3,208.9 L549.9,210.3 L550.5,211.6 L551.0,212.9 L551.4,214.3 L551.8,215.6 L552.0,217.0 L552.2,218.3 L552.3,219.7 L552.2,221.0 L552.1,222.3 L551.9,223.7 L551.4,225.1 L550.8,226.6 L549.9,228.1 L549.0,229.6 L548.0,231.1 L546.9,232.7 L545.8,234.1 L544.8,235.5 L543.7,236.8 L542.8,238.0 L541.9,239.1 L541.2,240.0 L540.7,240.8 L540.7,240.8 L541.2,240.0 L541.9,239.1 L542.8,238.0 L543.7,236.8 L544.4,235.2 L545.3,233.7 L546.2,232.1 L547.0,230.5 L547.9,228.9 L548.6,227.3 L549.2,225.8 L549.6,224.4 L549.8,223.2 L549.9,222.0 L549.9,220.9 L549.8,219.7 L549.6,218.6 L549.3,217.4 L549.0,216.3 L548.6,215.1 L548.1,213.9 L547.5,212.8 L547.0,211.6 L546.3,210.5 L545.6,209.3 L544.8,208.1 L544.0,207.0 L543.2,205.9 L542.2,204.7 L541.1,203.4 L539.8,202.2 L538.5,200.9 L537.2,199.6 L535.8,198.3 L534.3,197.0 L532.9,195.8 L531.5,194.6 L530.1,193.5 L528.8,192.4 L527.5,191.4 L526.4,190.5 L525.3,189.7 L524.1,189.0 L522.9,188.2 L521.7,187.5 L520.4,186.9 L519.2,186.2 L518.0,185.6 L516.9,184.9 L515.8,184.3 L514.8,183.7 L514.0,183.0 L513.3,182.3 L513.0,181.0Z" fill="#c6dd42"/><path d="M514.2,182.4L513.0,185.9M516.1,183.5L514.4,188.4M518.4,184.6L516.3,190.4M520.9,185.8L518.2,192.3M523.5,187.1L520.1,194.0M526.0,188.5L521.9,195.6M528.4,190.2L523.4,197.1M531.0,192.3L525.7,199.2M533.9,194.6L528.2,201.4M536.8,197.2L530.8,203.8M539.6,199.8L533.4,206.1M542.2,202.4L535.7,208.3M544.3,205.0L537.5,210.1M546.0,207.4L539.0,211.7M547.5,209.9L540.5,213.4M548.7,212.3L541.8,215.1M549.7,214.8L543.0,216.7M550.4,217.2L544.0,218.2M550.8,219.7L544.9,219.8M550.8,222.1L545.6,221.4M550.3,224.7L546.1,223.1M549.1,227.6L545.9,225.8M547.4,230.7L545.1,229.2M545.5,233.9L544.1,232.8M543.7,236.8L543.7,236.8M541.9,239.1L541.9,239.1" stroke="#3aa545" stroke-width="0.5" opacity="0.55" fill="none"/>
<path d="M513.0,181.0 L514.3,181.1 L515.8,181.1 L517.7,181.1 L519.8,181.1 L522.1,181.1 L524.6,181.1 L527.1,181.2 L529.6,181.2 L532.1,181.4 L534.6,181.6 L537.0,181.9 L539.1,182.3 L541.1,182.7 L542.8,183.3 L544.5,184.0 L546.0,184.8 L547.5,185.7 L548.9,186.6 L550.2,187.6 L551.5,188.7 L552.7,189.8 L553.9,190.9 L555.0,192.1 L556.1,193.3 L557.1,194.4 L558.1,195.6 L559.0,196.7 L559.9,197.8 L560.8,199.0 L561.6,200.2 L562.3,201.4 L563.0,202.6 L563.7,203.8 L564.3,205.1 L564.8,206.3 L565.4,207.6 L565.8,208.8 L566.2,210.0 L566.6,211.2 L566.9,212.4 L567.1,213.6 L567.3,214.8 L567.3,216.1 L567.3,217.4 L567.2,218.7 L567.1,219.9 L566.9,221.2 L566.7,222.4 L566.5,223.6 L566.3,224.7 L566.1,225.7 L565.9,226.6 L565.8,227.4 L565.7,228.0 L565.7,228.0 L565.8,227.4 L565.9,226.6 L566.1,225.7 L566.3,224.7 L564.3,223.2 L564.5,222.1 L562.1,220.5 L563.4,219.5 L560.3,218.1 L562.4,217.2 L558.6,216.2 L561.3,215.3 L556.9,215.2 L560.1,214.0 L555.1,214.4 L558.8,212.3 L553.4,213.2 L557.4,210.7 L551.6,212.0 L555.9,209.0 L549.9,210.9 L554.4,207.4 L548.3,209.8 L552.8,205.9 L546.7,208.9 L551.3,204.5 L545.2,208.0 L549.4,202.8 L543.1,206.5 L547.5,200.9 L541.3,204.9 L545.6,199.2 L539.7,203.6 L543.8,197.6 L538.4,202.5 L542.1,196.1 L537.4,201.5 L540.4,194.9 L536.7,200.7 L538.9,193.8 L536.2,199.8 L537.0,192.8 L534.5,198.6 L533.6,191.7 L531.1,197.1 L529.2,190.5 L526.7,195.3 L524.4,189.3 L522.1,193.3 L519.8,187.9 L517.7,190.6 L515.8,185.9 L514.1,186.5 L513.0,181.0Z" fill="#2b9f47"/><path d="M513.0,181.0 L514.3,181.1 L515.8,181.1 L517.7,181.1 L519.8,181.1 L522.1,181.1 L524.6,181.1 L527.1,181.2 L529.6,181.2 L532.1,181.4 L534.6,181.6 L537.0,181.9 L539.1,182.3 L541.1,182.7 L542.8,183.3 L544.5,184.0 L546.0,184.8 L547.5,185.7 L548.9,186.6 L550.2,187.6 L551.5,188.7 L552.7,189.8 L553.9,190.9 L555.0,192.1 L556.1,193.3 L557.1,194.4 L558.1,195.6 L559.0,196.7 L559.9,197.8 L560.8,199.0 L561.6,200.2 L562.3,201.4 L563.0,202.6 L563.7,203.8 L564.3,205.1 L564.8,206.3 L565.4,207.6 L565.8,208.8 L566.2,210.0 L566.6,211.2 L566.9,212.4 L567.1,213.6 L567.3,214.8 L567.3,216.1 L567.3,217.4 L567.2,218.7 L567.1,219.9 L566.9,221.2 L566.7,222.4 L566.5,223.6 L566.3,224.7 L566.1,225.7 L565.9,226.6 L565.8,227.4 L565.7,228.0 L565.7,228.0 L565.8,227.4 L565.9,226.6 L566.1,225.7 L566.3,224.7 L565.2,223.4 L564.6,222.1 L564.2,220.8 L563.7,219.5 L563.3,218.3 L562.8,217.2 L562.3,216.1 L561.8,215.2 L561.3,214.5 L560.7,213.8 L560.1,213.0 L559.4,212.2 L558.7,211.3 L558.0,210.4 L557.3,209.6 L556.6,208.7 L555.8,207.9 L555.1,207.0 L554.3,206.2 L553.5,205.4 L552.7,204.7 L551.9,203.9 L551.1,203.2 L550.1,202.3 L549.1,201.3 L548.1,200.3 L547.2,199.4 L546.2,198.5 L545.3,197.7 L544.4,196.9 L543.5,196.1 L542.6,195.4 L541.7,194.7 L540.9,194.1 L540.0,193.5 L539.2,193.0 L538.3,192.5 L537.2,192.0 L535.6,191.4 L533.7,190.9 L531.5,190.3 L529.2,189.8 L526.8,189.2 L524.4,188.7 L522.1,188.0 L519.8,187.3 L517.7,186.5 L515.8,185.5 L514.2,184.1 L513.0,181.0Z" fill="#6fbe3f"/><path d="M513.0,181.0 L514.3,181.1 L515.8,181.1 L517.7,181.1 L519.8,181.1 L522.1,181.1 L524.6,181.1 L527.1,181.2 L529.6,181.2 L532.1,181.4 L534.6,181.6 L537.0,181.9 L539.1,182.3 L541.1,182.7 L542.8,183.3 L544.5,184.0 L546.0,184.8 L547.5,185.7 L548.9,186.6 L550.2,187.6 L551.5,188.7 L552.7,189.8 L553.9,190.9 L555.0,192.1 L556.1,193.3 L557.1,194.4 L558.1,195.6 L559.0,196.7 L559.9,197.8 L560.8,199.0 L561.6,200.2 L562.3,201.4 L563.0,202.6 L563.7,203.8 L564.3,205.1 L564.8,206.3 L565.4,207.6 L565.8,208.8 L566.2,210.0 L566.6,211.2 L566.9,212.4 L567.1,213.6 L567.3,214.8 L567.3,216.1 L567.3,217.4 L567.2,218.7 L567.1,219.9 L566.9,221.2 L566.7,222.4 L566.5,223.6 L566.3,224.7 L566.1,225.7 L565.9,226.6 L565.8,227.4 L565.7,228.0 L565.7,228.0 L565.8,227.4 L565.9,226.6 L566.1,225.7 L566.3,224.7 L566.0,223.5 L566.0,222.3 L565.9,221.1 L565.9,219.8 L565.8,218.5 L565.7,217.3 L565.6,216.1 L565.3,215.0 L565.1,213.9 L564.7,212.9 L564.3,211.9 L563.8,210.8 L563.3,209.7 L562.8,208.6 L562.2,207.5 L561.6,206.3 L560.9,205.2 L560.2,204.2 L559.5,203.1 L558.7,202.0 L557.9,201.0 L557.1,200.0 L556.2,199.0 L555.3,197.9 L554.3,196.8 L553.3,195.7 L552.3,194.7 L551.2,193.6 L550.1,192.5 L549.0,191.5 L547.9,190.6 L546.7,189.7 L545.5,188.8 L544.2,188.0 L542.9,187.3 L541.6,186.7 L540.1,186.1 L538.5,185.7 L536.5,185.2 L534.3,184.9 L531.9,184.5 L529.5,184.2 L527.0,184.0 L524.5,183.8 L522.1,183.5 L519.8,183.3 L517.7,183.0 L515.8,182.6 L514.2,182.1 L513.0,181.0Z" fill="#c6dd42"/><path d="M515.8,182.0L515.8,185.6M519.8,182.4L519.8,187.5M524.5,182.7L524.4,188.9M529.5,183.0L529.2,190.1M534.4,183.6L533.6,191.2M538.7,184.3L537.1,192.3M542.1,185.3L539.1,193.3M544.9,186.7L540.7,194.4M547.6,188.5L542.4,195.7M550.0,190.4L544.1,197.1M552.3,192.5L546.0,198.8M554.4,194.7L547.9,200.6M556.4,197.0L549.9,202.5M558.2,199.1L551.7,204.1M559.9,201.3L553.3,205.6M561.4,203.5L554.8,207.2M562.7,205.8L556.3,208.8M563.8,208.2L557.8,210.5M564.8,210.5L559.2,212.2M565.6,212.7L560.5,213.9M566.1,214.9L561.6,215.3M566.3,217.3L562.7,217.2M566.4,219.9L563.6,219.5M566.3,222.4L564.6,222.1M566.3,224.7L566.3,224.7M565.9,226.6L565.9,226.6" stroke="#3aa545" stroke-width="0.5" opacity="0.55" fill="none"/>
<path d="M513.0,181.0 L513.8,180.6 L514.7,180.1 L515.8,179.5 L517.1,178.9 L518.4,178.2 L519.8,177.5 L521.3,176.7 L522.9,175.9 L524.5,175.1 L526.1,174.2 L527.8,173.4 L529.5,172.7 L531.1,171.9 L532.7,171.2 L534.2,170.6 L535.7,170.0 L537.2,169.5 L538.6,169.0 L540.1,168.5 L541.7,168.0 L543.2,167.6 L544.7,167.2 L546.2,166.8 L547.8,166.4 L549.3,166.0 L550.8,165.7 L552.2,165.3 L553.7,165.0 L555.1,164.7 L556.4,164.5 L557.7,164.2 L559.0,164.0 L560.2,163.8 L561.5,163.6 L562.7,163.5 L563.9,163.4 L565.1,163.3 L566.2,163.2 L567.4,163.2 L568.5,163.1 L569.5,163.1 L570.5,163.1 L571.4,163.1 L572.3,163.1 L573.1,163.1 L573.8,163.0 L574.5,163.0 L575.0,163.0 L575.0,163.0 L574.5,163.0 L573.8,163.0 L573.1,163.1 L572.3,163.9 L571.5,166.2 L570.5,165.9 L569.6,168.9 L568.6,167.4 L567.7,171.1 L566.5,168.8 L565.7,173.1 L564.5,170.0 L563.9,175.0 L562.4,171.2 L562.2,176.8 L560.5,172.4 L560.4,178.4 L558.2,173.7 L558.2,180.1 L555.7,174.9 L555.8,181.6 L553.1,176.0 L553.3,183.1 L550.4,177.1 L550.8,184.4 L547.7,178.2 L548.3,185.6 L545.0,179.2 L545.8,186.6 L542.3,180.2 L543.4,187.4 L539.8,181.0 L541.2,188.0 L537.2,181.8 L538.6,188.6 L534.2,182.8 L535.4,189.3 L530.8,183.7 L531.9,189.7 L527.3,184.6 L528.2,189.9 L523.8,185.1 L524.4,189.6 L520.4,185.3 L520.5,188.5 L517.1,184.6 L516.4,185.7 L513.0,181.0Z" fill="#2b9f47"/><path d="M513.0,181.0 L513.8,180.6 L514.7,180.1 L515.8,179.5 L517.1,178.9 L518.4,178.2 L519.8,177.5 L521.3,176.7 L522.9,175.9 L524.5,175.1 L526.1,174.2 L527.8,173.4 L529.5,172.7 L531.1,171.9 L532.7,171.2 L534.2,170.6 L535.7,170.0 L537.2,169.5 L538.6,169.0 L540.1,168.5 L541.7,168.0 L543.2,167.6 L544.7,167.2 L546.2,166.8 L547.8,166.4 L549.3,166.0 L550.8,165.7 L552.2,165.3 L553.7,165.0 L555.1,164.7 L556.4,164.5 L557.7,164.2 L559.0,164.0 L560.2,163.8 L561.5,163.6 L562.7,163.5 L563.9,163.4 L565.1,163.3 L566.2,163.2 L567.4,163.2 L568.5,163.1 L569.5,163.1 L570.5,163.1 L571.4,163.1 L572.3,163.1 L573.1,163.1 L573.8,163.0 L574.5,163.0 L575.0,163.0 L575.0,163.0 L574.5,163.0 L573.8,163.0 L573.1,163.1 L572.3,163.8 L571.4,164.9 L570.5,165.7 L569.6,166.4 L568.6,167.1 L567.6,167.7 L566.5,168.3 L565.5,168.9 L564.4,169.5 L563.4,170.1 L562.3,170.6 L561.3,171.2 L560.3,171.8 L559.2,172.3 L558.1,172.9 L556.8,173.5 L555.6,174.1 L554.3,174.6 L552.9,175.2 L551.6,175.7 L550.2,176.3 L548.8,176.8 L547.5,177.3 L546.1,177.8 L544.7,178.3 L543.4,178.8 L542.0,179.3 L540.7,179.7 L539.5,180.1 L538.2,180.5 L536.8,181.0 L535.4,181.4 L533.8,181.9 L532.1,182.5 L530.4,183.0 L528.7,183.4 L527.0,183.9 L525.2,184.2 L523.5,184.5 L521.8,184.7 L520.1,184.8 L518.5,184.6 L516.9,184.3 L515.3,183.5 L513.0,181.0Z" fill="#6fbe3f"/><path d="M513.0,181.0 L513.8,180.6 L514.7,180.1 L515.8,179.5 L517.1,178.9 L518.4,178.2 L519.8,177.5 L521.3,176.7 L522.9,175.9 L524.5,175.1 L526.1,174.2 L527.8,173.4 L529.5,172.7 L531.1,171.9 L532.7,171.2 L534.2,170.6 L535.7,170.0 L537.2,169.5 L538.6,169.0 L540.1,168.5 L541.7,168.0 L543.2,167.6 L544.7,167.2 L546.2,166.8 L547.8,166.4 L549.3,166.0 L550.8,165.7 L552.2,165.3 L553.7,165.0 L555.1,164.7 L556.4,164.5 L557.7,164.2 L559.0,164.0 L560.2,163.8 L561.5,163.6 L562.7,163.5 L563.9,163.4 L565.1,163.3 L566.2,163.2 L567.4,163.2 L568.5,163.1 L569.5,163.1 L570.5,163.1 L571.4,163.1 L572.3,163.1 L573.1,163.1 L573.8,163.0 L574.5,163.0 L575.0,163.0 L575.0,163.0 L574.5,163.0 L573.8,163.0 L573.1,163.1 L572.3,163.3 L571.4,163.7 L570.5,164.0 L569.5,164.3 L568.5,164.5 L567.4,164.8 L566.3,165.0 L565.2,165.3 L564.1,165.5 L562.9,165.8 L561.8,166.1 L560.6,166.4 L559.5,166.7 L558.3,167.1 L557.0,167.4 L555.7,167.8 L554.3,168.2 L552.9,168.6 L551.5,169.0 L550.1,169.4 L548.6,169.8 L547.2,170.3 L545.7,170.7 L544.2,171.2 L542.7,171.6 L541.3,172.1 L539.8,172.6 L538.4,173.1 L537.0,173.5 L535.6,174.1 L534.1,174.6 L532.6,175.3 L531.0,175.9 L529.3,176.6 L527.6,177.3 L526.0,178.0 L524.3,178.7 L522.7,179.3 L521.1,179.9 L519.6,180.5 L518.1,181.0 L516.8,181.3 L515.5,181.6 L514.3,181.6 L513.0,181.0Z" fill="#c6dd42"/><path d="M515.2,181.0L517.0,184.4M517.7,180.1L520.2,185.0M520.6,178.9L523.6,184.8M523.8,177.6L527.1,184.1M527.0,176.1L530.6,183.2M530.4,174.6L533.9,182.3M533.6,173.3L537.0,181.3M536.5,172.1L539.6,180.4M539.3,171.1L542.1,179.6M542.3,170.2L544.8,178.7M545.3,169.3L547.6,177.7M548.3,168.5L550.3,176.6M551.2,167.7L553.0,175.5M554.1,166.9L555.6,174.4M556.8,166.3L558.1,173.2M559.3,165.6L560.4,172.0M561.6,165.1L562.4,170.9M564.0,164.7L564.4,169.7M566.3,164.3L566.5,168.5M568.5,164.0L568.6,167.2M570.5,163.6L570.5,165.8M572.3,163.2L572.3,163.9M573.8,163.0L573.8,163.0" stroke="#3aa545" stroke-width="0.5" opacity="0.55" fill="none"/>
<path d="M513.0,181.0 L513.6,180.2 L514.3,179.1 L515.0,177.8 L515.9,176.4 L516.8,174.9 L517.8,173.3 L518.8,171.6 L519.9,169.8 L521.1,168.0 L522.3,166.3 L523.5,164.6 L524.8,162.9 L526.1,161.3 L527.4,159.9 L528.7,158.6 L530.0,157.5 L531.4,156.5 L532.8,155.6 L534.3,154.8 L535.8,154.1 L537.4,153.4 L539.0,152.8 L540.7,152.2 L542.3,151.7 L544.0,151.2 L545.6,150.7 L547.3,150.3 L548.9,149.9 L550.5,149.5 L552.1,149.2 L553.6,148.8 L555.0,148.5 L556.4,148.2 L557.9,147.9 L559.3,147.7 L560.8,147.5 L562.3,147.3 L563.7,147.1 L565.2,147.0 L566.6,146.9 L567.9,146.9 L569.2,146.8 L570.4,146.7 L571.5,146.7 L572.6,146.7 L573.5,146.6 L574.3,146.6 L575.0,146.5 L575.0,146.5 L574.3,146.6 L573.5,146.6 L572.6,146.7 L571.6,147.5 L570.5,149.9 L569.3,149.6 L568.2,152.6 L566.8,151.2 L565.8,155.0 L564.2,152.7 L563.3,157.1 L561.7,154.1 L561.1,159.1 L559.2,155.4 L559.1,161.0 L556.9,156.8 L556.9,162.9 L554.2,158.3 L554.0,164.8 L551.2,159.7 L551.3,166.5 L548.3,161.0 L548.7,168.1 L545.5,162.3 L546.4,169.5 L543.0,163.5 L544.5,170.7 L540.7,164.7 L543.0,171.6 L538.7,165.8 L541.9,172.3 L537.2,166.7 L541.4,172.5 L535.7,167.9 L539.9,173.3 L533.5,169.8 L537.6,175.0 L530.9,172.3 L534.8,177.2 L528.1,175.1 L531.5,179.5 L525.2,177.8 L527.8,181.6 L522.0,180.1 L523.6,183.1 L518.6,181.8 L518.4,183.3 L513.0,181.0Z" fill="#2b9f47"/><path d="M513.0,181.0 L513.6,180.2 L514.3,179.1 L515.0,177.8 L515.9,176.4 L516.8,174.9 L517.8,173.3 L518.8,171.6 L519.9,169.8 L521.1,168.0 L522.3,166.3 L523.5,164.6 L524.8,162.9 L526.1,161.3 L527.4,159.9 L528.7,158.6 L530.0,157.5 L531.4,156.5 L532.8,155.6 L534.3,154.8 L535.8,154.1 L537.4,153.4 L539.0,152.8 L540.7,152.2 L542.3,151.7 L544.0,151.2 L545.6,150.7 L547.3,150.3 L548.9,149.9 L550.5,149.5 L552.1,149.2 L553.6,148.8 L555.0,148.5 L556.4,148.2 L557.9,147.9 L559.3,147.7 L560.8,147.5 L562.3,147.3 L563.7,147.1 L565.2,147.0 L566.6,146.9 L567.9,146.9 L569.2,146.8 L570.4,146.7 L571.5,146.7 L572.6,146.7 L573.5,146.6 L574.3,146.6 L575.0,146.5 L575.0,146.5 L574.3,146.6 L573.5,146.6 L572.6,146.7 L571.6,147.5 L570.5,148.5 L569.3,149.4 L568.1,150.2 L566.8,150.9 L565.5,151.6 L564.2,152.2 L562.9,152.9 L561.6,153.5 L560.3,154.2 L559.1,154.8 L557.9,155.5 L556.8,156.2 L555.4,156.9 L554.0,157.6 L552.5,158.2 L551.0,158.9 L549.6,159.5 L548.1,160.2 L546.7,160.8 L545.3,161.4 L543.9,162.0 L542.6,162.6 L541.4,163.2 L540.3,163.8 L539.2,164.4 L538.3,165.0 L537.4,165.5 L536.7,166.0 L535.9,166.5 L535.0,167.2 L534.0,168.2 L532.8,169.3 L531.6,170.5 L530.3,171.8 L528.9,173.2 L527.5,174.7 L526.0,176.1 L524.6,177.4 L523.1,178.7 L521.5,179.8 L519.9,180.8 L518.2,181.6 L516.3,182.0 L513.0,181.0Z" fill="#6fbe3f"/><path d="M513.0,181.0 L513.6,180.2 L514.3,179.1 L515.0,177.8 L515.9,176.4 L516.8,174.9 L517.8,173.3 L518.8,171.6 L519.9,169.8 L521.1,168.0 L522.3,166.3 L523.5,164.6 L524.8,162.9 L526.1,161.3 L527.4,159.9 L528.7,158.6 L530.0,157.5 L531.4,156.5 L532.8,155.6 L534.3,154.8 L535.8,154.1 L537.4,153.4 L539.0,152.8 L540.7,152.2 L542.3,151.7 L544.0,151.2 L545.6,150.7 L547.3,150.3 L548.9,149.9 L550.5,149.5 L552.1,149.2 L553.6,148.8 L555.0,148.5 L556.4,148.2 L557.9,147.9 L559.3,147.7 L560.8,147.5 L562.3,147.3 L563.7,147.1 L565.2,147.0 L566.6,146.9 L567.9,146.9 L569.2,146.8 L570.4,146.7 L571.5,146.7 L572.6,146.7 L573.5,146.6 L574.3,146.6 L575.0,146.5 L575.0,146.5 L574.3,146.6 L573.5,146.6 L572.6,146.7 L571.5,147.0 L570.4,147.4 L569.2,147.7 L568.0,148.0 L566.7,148.3 L565.3,148.6 L563.9,148.9 L562.5,149.3 L561.1,149.6 L559.7,150.0 L558.3,150.3 L557.0,150.7 L555.6,151.2 L554.2,151.7 L552.7,152.1 L551.2,152.6 L549.7,153.1 L548.1,153.5 L546.5,154.0 L544.9,154.5 L543.4,155.1 L541.8,155.6 L540.3,156.2 L538.8,156.8 L537.4,157.5 L536.0,158.2 L534.7,158.9 L533.5,159.7 L532.3,160.5 L531.2,161.4 L530.1,162.5 L528.8,163.7 L527.6,165.1 L526.3,166.6 L525.1,168.2 L523.8,169.9 L522.6,171.5 L521.4,173.1 L520.2,174.7 L519.0,176.2 L517.9,177.6 L516.7,178.9 L515.7,180.0 L514.5,180.8 L513.0,181.0Z" fill="#c6dd42"/><path d="M515.1,179.6L518.4,181.7M517.1,177.2L521.7,180.0M519.2,174.1L524.8,177.6M521.5,170.8L527.7,174.8M524.0,167.5L530.5,172.0M526.5,164.2L533.1,169.5M529.0,161.4L535.3,167.5M531.4,159.3L536.9,166.3M533.9,157.6L538.4,165.3M536.7,156.1L540.4,164.2M539.8,154.8L542.8,163.0M542.9,153.7L545.4,161.7M546.2,152.7L548.2,160.5M549.4,151.8L551.1,159.2M552.5,151.0L554.1,157.8M555.4,150.1L556.8,156.4M558.1,149.4L559.1,155.1M561.0,148.7L561.6,153.7M563.8,148.2L564.2,152.4M566.6,147.8L566.8,151.0M569.2,147.3L569.3,149.5M571.5,146.9L571.6,147.5M573.5,146.6L573.5,146.6" stroke="#3aa545" stroke-width="0.5" opacity="0.55" fill="none"/>
<path d="M513.0,181.0 L512.3,180.8 L511.4,180.5 L510.4,180.1 L509.2,179.7 L508.0,179.3 L506.6,178.9 L505.2,178.4 L503.8,177.9 L502.3,177.5 L500.8,177.0 L499.3,176.6 L497.8,176.3 L496.4,175.9 L495.0,175.7 L493.6,175.4 L492.1,175.1 L490.6,174.9 L489.1,174.7 L487.6,174.4 L486.0,174.2 L484.5,174.1 L483.0,173.9 L481.5,173.9 L480.0,173.8 L478.5,173.8 L477.1,173.9 L475.7,174.0 L474.3,174.2 L473.0,174.4 L471.7,174.6 L470.4,174.9 L469.1,175.2 L467.8,175.5 L466.6,175.9 L465.3,176.4 L464.1,176.9 L462.9,177.5 L461.8,178.1 L460.7,178.8 L459.5,179.6 L458.5,180.4 L457.4,181.5 L456.3,182.7 L455.1,184.0 L454.1,185.4 L453.0,186.9 L452.0,188.4 L451.0,189.8 L450.0,191.3 L449.2,192.6 L448.4,193.9 L447.6,195.0 L447.0,196.0 L446.5,196.7 L446.5,196.7 L447.0,196.0 L447.6,195.0 L448.4,193.9 L449.2,192.6 L451.9,192.5 L452.9,191.1 L456.0,191.1 L456.0,189.0 L459.6,189.5 L458.9,187.0 L462.8,188.4 L461.6,185.7 L465.2,188.3 L463.6,185.1 L467.1,188.7 L465.7,184.8 L469.0,189.2 L467.7,184.7 L470.7,189.8 L469.6,184.7 L472.3,190.4 L471.6,184.8 L474.0,190.9 L473.7,184.9 L475.8,191.4 L475.8,185.0 L477.6,191.8 L477.8,185.1 L478.9,192.2 L479.8,185.4 L480.6,192.6 L482.1,185.6 L482.7,193.0 L484.7,185.9 L485.0,193.3 L487.4,186.3 L487.6,193.5 L490.1,186.5 L490.3,193.5 L492.9,186.7 L492.8,193.4 L495.4,186.7 L495.0,193.0 L498.0,186.8 L497.8,192.5 L501.0,186.8 L500.9,191.9 L504.0,186.7 L504.1,190.8 L507.0,186.2 L507.3,189.1 L509.9,185.0 L510.6,185.9 L513.0,181.0Z" fill="#2b9f47"/><path d="M513.0,181.0 L512.3,180.8 L511.4,180.5 L510.4,180.1 L509.2,179.7 L508.0,179.3 L506.6,178.9 L505.2,178.4 L503.8,177.9 L502.3,177.5 L500.8,177.0 L499.3,176.6 L497.8,176.3 L496.4,175.9 L495.0,175.7 L493.6,175.4 L492.1,175.1 L490.6,174.9 L489.1,174.7 L487.6,174.4 L486.0,174.2 L484.5,174.1 L483.0,173.9 L481.5,173.9 L480.0,173.8 L478.5,173.8 L477.1,173.9 L475.7,174.0 L474.3,174.2 L473.0,174.4 L471.7,174.6 L470.4,174.9 L469.1,175.2 L467.8,175.5 L466.6,175.9 L465.3,176.4 L464.1,176.9 L462.9,177.5 L461.8,178.1 L460.7,178.8 L459.5,179.6 L458.5,180.4 L457.4,181.5 L456.3,182.7 L455.1,184.0 L454.1,185.4 L453.0,186.9 L452.0,188.4 L451.0,189.8 L450.0,191.3 L449.2,192.6 L448.4,193.9 L447.6,195.0 L447.0,196.0 L446.5,196.7 L446.5,196.7 L447.0,196.0 L447.6,195.0 L448.4,193.9 L449.2,192.6 L451.1,192.0 L452.7,191.0 L454.2,189.9 L455.7,188.8 L457.2,187.8 L458.6,186.8 L460.0,186.0 L461.2,185.3 L462.3,184.9 L463.3,184.7 L464.3,184.5 L465.4,184.3 L466.4,184.2 L467.4,184.1 L468.4,184.0 L469.4,184.0 L470.4,184.0 L471.4,184.0 L472.4,184.0 L473.5,184.0 L474.6,184.1 L475.7,184.1 L476.8,184.1 L477.8,184.2 L478.8,184.3 L479.8,184.4 L481.0,184.6 L482.2,184.7 L483.5,184.8 L484.8,185.0 L486.1,185.2 L487.5,185.3 L488.9,185.5 L490.3,185.6 L491.7,185.7 L493.1,185.8 L494.3,185.9 L495.6,185.9 L496.9,186.0 L498.3,186.0 L499.7,186.1 L501.2,186.1 L502.7,186.1 L504.3,186.0 L505.7,185.9 L507.2,185.6 L508.6,185.3 L510.0,184.7 L511.3,183.7 L513.0,181.0Z" fill="#6fbe3f"/><path d="M513.0,181.0 L512.3,180.8 L511.4,180.5 L510.4,180.1 L509.2,179.7 L508.0,179.3 L506.6,178.9 L505.2,178.4 L503.8,177.9 L502.3,177.5 L500.8,177.0 L499.3,176.6 L497.8,176.3 L496.4,175.9 L495.0,175.7 L493.6,175.4 L492.1,175.1 L490.6,174.9 L489.1,174.7 L487.6,174.4 L486.0,174.2 L484.5,174.1 L483.0,173.9 L481.5,173.9 L480.0,173.8 L478.5,173.8 L477.1,173.9 L475.7,174.0 L474.3,174.2 L473.0,174.4 L471.7,174.6 L470.4,174.9 L469.1,175.2 L467.8,175.5 L466.6,175.9 L465.3,176.4 L464.1,176.9 L462.9,177.5 L461.8,178.1 L460.7,178.8 L459.5,179.6 L458.5,180.4 L457.4,181.5 L456.3,182.7 L455.1,184.0 L454.1,185.4 L453.0,186.9 L452.0,188.4 L451.0,189.8 L450.0,191.3 L449.2,192.6 L448.4,193.9 L447.6,195.0 L447.0,196.0 L446.5,196.7 L446.5,196.7 L447.0,196.0 L447.6,195.0 L448.4,193.9 L449.2,192.6 L450.4,191.5 L451.6,190.2 L452.8,188.9 L454.0,187.5 L455.2,186.2 L456.4,185.0 L457.6,183.8 L458.7,182.8 L459.8,182.0 L460.9,181.4 L461.9,180.8 L463.0,180.3 L464.2,179.8 L465.3,179.4 L466.4,179.1 L467.6,178.8 L468.7,178.5 L469.9,178.3 L471.1,178.1 L472.3,177.9 L473.6,177.8 L474.8,177.7 L476.1,177.6 L477.3,177.5 L478.6,177.5 L479.9,177.5 L481.3,177.6 L482.7,177.7 L484.1,177.9 L485.6,178.0 L487.1,178.2 L488.5,178.4 L490.0,178.6 L491.5,178.8 L492.9,179.0 L494.3,179.2 L495.7,179.4 L497.0,179.6 L498.5,179.9 L499.9,180.2 L501.4,180.5 L502.9,180.8 L504.4,181.1 L505.8,181.4 L507.2,181.6 L508.5,181.8 L509.8,181.9 L510.9,181.9 L511.9,181.8 L513.0,181.0Z" fill="#c6dd42"/><path d="M511.1,181.4L509.9,184.8M508.8,181.0L507.1,185.8M506.1,180.4L504.2,186.3M503.3,179.6L501.1,186.4M500.3,178.9L498.2,186.3M497.4,178.3L495.5,186.2M494.6,177.8L493.0,186.2M491.7,177.4L490.2,186.0M488.8,176.9L487.5,185.7M485.8,176.5L484.7,185.4M482.8,176.2L482.2,185.0M479.9,176.0L479.8,184.8M477.2,176.1L477.8,184.6M474.6,176.3L475.8,184.4M472.1,176.6L473.6,184.3M469.6,177.0L471.5,184.3M467.2,177.6L469.5,184.3M464.8,178.4L467.5,184.3M462.5,179.4L465.5,184.5M460.3,180.7L463.4,184.9M458.2,182.3L461.4,185.4M455.9,184.6L458.8,186.9M453.6,187.3L455.8,188.9M451.3,190.1L452.8,191.0M449.2,192.6L449.2,192.6M447.6,195.0L447.6,195.0" stroke="#3aa545" stroke-width="0.5" opacity="0.55" fill="none"/>
<path d="M513.0,181.0 L512.4,180.2 L511.7,179.2 L511.0,178.0 L510.1,176.6 L509.2,175.2 L508.3,173.6 L507.2,171.9 L506.2,170.2 L505.0,168.4 L503.9,166.7 L502.7,164.9 L501.4,163.1 L500.2,161.4 L498.9,159.8 L497.6,158.2 L496.3,156.8 L495.0,155.4 L493.7,154.3 L492.4,153.3 L491.1,152.5 L489.8,151.7 L488.5,151.1 L487.1,150.5 L485.7,149.9 L484.3,149.5 L482.8,149.1 L481.4,148.8 L479.9,148.5 L478.4,148.3 L476.9,148.2 L475.4,148.1 L473.9,148.0 L472.4,148.1 L470.9,148.1 L469.4,148.2 L467.9,148.4 L466.4,148.6 L465.0,148.8 L463.5,149.1 L462.0,149.5 L460.5,150.0 L458.9,150.6 L457.3,151.4 L455.6,152.2 L454.0,153.0 L452.3,154.0 L450.7,154.9 L449.0,155.9 L447.4,156.9 L445.9,157.9 L444.4,158.9 L443.0,159.8 L441.6,160.7 L440.4,161.6 L439.2,162.3 L438.2,163.0 L437.3,163.5 L436.5,164.0 L436.5,164.0 L437.3,163.5 L438.2,163.0 L439.2,162.3 L440.4,161.6 L442.6,162.1 L444.1,161.4 L446.8,162.5 L447.7,160.7 L450.8,162.2 L451.4,159.7 L454.8,161.9 L455.0,158.8 L458.6,161.5 L458.5,157.9 L462.0,161.4 L461.7,157.4 L464.8,161.7 L464.4,157.2 L466.6,162.4 L466.5,157.5 L468.6,163.1 L469.0,157.7 L470.8,163.8 L471.5,158.1 L472.8,164.6 L473.8,158.5 L474.7,165.3 L476.0,159.0 L476.3,166.1 L478.2,159.6 L477.8,166.8 L480.1,160.3 L479.0,167.5 L481.9,161.0 L480.1,168.0 L483.6,161.7 L481.0,168.5 L485.1,162.5 L481.5,168.7 L486.2,163.2 L482.1,168.9 L488.0,164.6 L483.9,170.0 L490.3,166.7 L486.2,171.9 L492.9,169.3 L489.1,174.2 L495.6,172.1 L492.2,176.8 L498.5,175.0 L495.6,179.2 L501.5,177.8 L499.2,181.3 L504.6,180.1 L503.2,182.8 L507.9,181.7 L508.1,183.1 L513.0,181.0Z" fill="#2b9f47"/><path d="M513.0,181.0 L512.4,180.2 L511.7,179.2 L511.0,178.0 L510.1,176.6 L509.2,175.2 L508.3,173.6 L507.2,171.9 L506.2,170.2 L505.0,168.4 L503.9,166.7 L502.7,164.9 L501.4,163.1 L500.2,161.4 L498.9,159.8 L497.6,158.2 L496.3,156.8 L495.0,155.4 L493.7,154.3 L492.4,153.3 L491.1,152.5 L489.8,151.7 L488.5,151.1 L487.1,150.5 L485.7,149.9 L484.3,149.5 L482.8,149.1 L481.4,148.8 L479.9,148.5 L478.4,148.3 L476.9,148.2 L475.4,148.1 L473.9,148.0 L472.4,148.1 L470.9,148.1 L469.4,148.2 L467.9,148.4 L466.4,148.6 L465.0,148.8 L463.5,149.1 L462.0,149.5 L460.5,150.0 L458.9,150.6 L457.3,151.4 L455.6,152.2 L454.0,153.0 L452.3,154.0 L450.7,154.9 L449.0,155.9 L447.4,156.9 L445.9,157.9 L444.4,158.9 L443.0,159.8 L441.6,160.7 L440.4,161.6 L439.2,162.3 L438.2,163.0 L437.3,163.5 L436.5,164.0 L436.5,164.0 L437.3,163.5 L438.2,163.0 L439.2,162.3 L440.4,161.6 L442.2,161.5 L444.0,161.3 L445.8,160.9 L447.6,160.5 L449.4,160.0 L451.2,159.4 L453.0,158.9 L454.8,158.4 L456.6,157.9 L458.3,157.5 L459.9,157.1 L461.5,156.8 L462.9,156.7 L464.2,156.6 L465.3,156.7 L466.4,156.8 L467.7,156.9 L468.9,157.0 L470.2,157.1 L471.4,157.3 L472.6,157.5 L473.8,157.7 L475.0,157.9 L476.1,158.2 L477.2,158.4 L478.3,158.7 L479.3,159.1 L480.3,159.4 L481.3,159.7 L482.2,160.1 L483.1,160.5 L483.9,160.9 L484.8,161.3 L485.6,161.7 L486.2,162.1 L486.8,162.5 L487.7,163.1 L488.6,163.9 L489.8,164.9 L491.0,166.1 L492.2,167.4 L493.5,168.8 L494.9,170.2 L496.3,171.7 L497.7,173.2 L499.1,174.7 L500.6,176.1 L502.0,177.4 L503.5,178.7 L505.0,179.8 L506.5,180.7 L508.2,181.5 L510.0,181.9 L513.0,181.0Z" fill="#6fbe3f"/><path d="M513.0,181.0 L512.4,180.2 L511.7,179.2 L511.0,178.0 L510.1,176.6 L509.2,175.2 L508.3,173.6 L507.2,171.9 L506.2,170.2 L505.0,168.4 L503.9,166.7 L502.7,164.9 L501.4,163.1 L500.2,161.4 L498.9,159.8 L497.6,158.2 L496.3,156.8 L495.0,155.4 L493.7,154.3 L492.4,153.3 L491.1,152.5 L489.8,151.7 L488.5,151.1 L487.1,150.5 L485.7,149.9 L484.3,149.5 L482.8,149.1 L481.4,148.8 L479.9,148.5 L478.4,148.3 L476.9,148.2 L475.4,148.1 L473.9,148.0 L472.4,148.1 L470.9,148.1 L469.4,148.2 L467.9,148.4 L466.4,148.6 L465.0,148.8 L463.5,149.1 L462.0,149.5 L460.5,150.0 L458.9,150.6 L457.3,151.4 L455.6,152.2 L454.0,153.0 L452.3,154.0 L450.7,154.9 L449.0,155.9 L447.4,156.9 L445.9,157.9 L444.4,158.9 L443.0,159.8 L441.6,160.7 L440.4,161.6 L439.2,162.3 L438.2,163.0 L437.3,163.5 L436.5,164.0 L436.5,164.0 L437.3,163.5 L438.2,163.0 L439.2,162.3 L440.4,161.6 L441.8,161.0 L443.3,160.3 L444.9,159.6 L446.5,158.8 L448.1,158.0 L449.8,157.1 L451.5,156.3 L453.2,155.5 L454.9,154.7 L456.6,154.0 L458.2,153.4 L459.8,152.8 L461.3,152.4 L462.8,152.0 L464.1,151.8 L465.5,151.6 L466.9,151.5 L468.3,151.4 L469.7,151.3 L471.1,151.3 L472.5,151.4 L473.9,151.4 L475.3,151.5 L476.6,151.7 L478.0,151.9 L479.3,152.1 L480.7,152.4 L482.0,152.7 L483.2,153.1 L484.5,153.5 L485.7,154.0 L486.9,154.5 L488.1,155.1 L489.2,155.7 L490.2,156.4 L491.3,157.2 L492.4,158.1 L493.6,159.3 L494.8,160.6 L496.1,162.0 L497.4,163.5 L498.7,165.1 L499.9,166.7 L501.2,168.4 L502.5,170.1 L503.7,171.8 L504.9,173.4 L506.1,174.9 L507.2,176.4 L508.3,177.7 L509.4,178.9 L510.5,180.0 L511.6,180.8 L513.0,181.0Z" fill="#c6dd42"/><path d="M511.0,179.6L508.0,181.5M509.1,177.3L504.8,179.9M507.0,174.4L501.8,177.6M504.7,171.1L498.9,174.8M502.3,167.7L496.0,171.9M499.8,164.3L493.3,169.0M497.2,161.1L490.7,166.3M494.7,158.3L488.4,164.2M492.3,156.0L486.6,162.8M490.0,154.4L485.4,162.0M487.5,153.1L483.8,161.2M485.0,152.1L482.1,160.4M482.3,151.3L480.2,159.7M479.6,150.7L478.2,159.1M476.7,150.3L476.1,158.5M473.9,150.1L473.8,158.0M471.0,150.0L471.4,157.6M468.1,150.2L469.0,157.3M465.3,150.5L466.4,157.0M462.5,151.0L464.2,156.8M459.4,152.0L461.6,157.0M456.2,153.3L458.4,157.6M452.8,154.9L454.9,158.5M449.5,156.7L451.3,159.5M446.2,158.4L447.6,160.5M443.2,160.1L444.0,161.3M440.4,161.6L440.4,161.6M438.2,163.0L438.2,163.0" stroke="#3aa545" stroke-width="0.5" opacity="0.55" fill="none"/>
<path d="M513.0,181.0 L513.3,180.1 L513.8,179.0 L514.4,177.8 L515.0,176.3 L515.8,174.8 L516.5,173.2 L517.2,171.4 L517.9,169.7 L518.5,167.9 L518.9,166.0 L519.2,164.2 L519.3,162.5 L519.2,160.8 L518.8,159.2 L518.2,157.5 L517.3,155.7 L516.4,153.9 L515.3,152.0 L514.0,150.2 L512.7,148.3 L511.2,146.5 L509.7,144.8 L508.2,143.2 L506.6,141.6 L505.1,140.2 L503.5,139.0 L502.0,138.0 L500.5,137.2 L498.9,136.5 L497.2,135.9 L495.5,135.5 L493.7,135.2 L491.9,135.0 L490.1,134.8 L488.3,134.8 L486.5,134.8 L484.8,134.8 L483.1,134.8 L481.4,134.9 L479.8,135.0 L478.2,135.0 L476.7,135.2 L475.1,135.4 L473.5,135.7 L471.9,136.0 L470.3,136.4 L468.8,136.8 L467.3,137.2 L465.9,137.6 L464.6,138.0 L463.4,138.4 L462.4,138.7 L461.5,139.0 L460.7,139.2 L460.7,139.2 L461.5,139.0 L462.4,138.7 L463.4,138.4 L464.6,138.0 L466.6,139.8 L468.0,139.4 L470.1,141.5 L471.2,140.0 L473.4,142.8 L474.4,140.5 L476.4,144.0 L477.3,141.1 L478.9,145.4 L480.0,141.9 L481.8,146.7 L483.3,142.6 L485.1,148.0 L486.6,143.3 L488.0,149.2 L489.6,144.1 L490.4,150.4 L492.3,145.0 L492.1,151.6 L494.3,146.0 L492.8,152.6 L495.7,146.9 L492.6,153.2 L496.8,148.1 L493.3,154.4 L498.8,150.1 L494.8,156.3 L501.0,152.6 L496.6,158.6 L503.3,155.5 L498.5,161.1 L505.4,158.3 L500.0,163.2 L507.0,160.8 L501.1,164.5 L508.0,162.5 L501.6,163.7 L508.5,162.6 L502.4,162.4 L509.0,164.0 L503.4,163.6 L509.1,166.6 L504.1,166.2 L509.0,169.9 L504.7,169.7 L508.9,173.4 L505.8,173.7 L509.4,177.1 L508.3,178.1 L513.0,181.0Z" fill="#2b9f47"/><path d="M513.0,181.0 L513.3,180.1 L513.8,179.0 L514.4,177.8 L515.0,176.3 L515.8,174.8 L516.5,173.2 L517.2,171.4 L517.9,169.7 L518.5,167.9 L518.9,166.0 L519.2,164.2 L519.3,162.5 L519.2,160.8 L518.8,159.2 L518.2,157.5 L517.3,155.7 L516.4,153.9 L515.3,152.0 L514.0,150.2 L512.7,148.3 L511.2,146.5 L509.7,144.8 L508.2,143.2 L506.6,141.6 L505.1,140.2 L503.5,139.0 L502.0,138.0 L500.5,137.2 L498.9,136.5 L497.2,135.9 L495.5,135.5 L493.7,135.2 L491.9,135.0 L490.1,134.8 L488.3,134.8 L486.5,134.8 L484.8,134.8 L483.1,134.8 L481.4,134.9 L479.8,135.0 L478.2,135.0 L476.7,135.2 L475.1,135.4 L473.5,135.7 L471.9,136.0 L470.3,136.4 L468.8,136.8 L467.3,137.2 L465.9,137.6 L464.6,138.0 L463.4,138.4 L462.4,138.7 L461.5,139.0 L460.7,139.2 L460.7,139.2 L461.5,139.0 L462.4,138.7 L463.4,138.4 L464.6,138.0 L466.3,138.9 L467.9,139.2 L469.5,139.5 L471.1,139.7 L472.8,139.9 L474.3,140.1 L475.8,140.3 L477.3,140.6 L478.6,140.9 L480.0,141.3 L481.6,141.7 L483.3,142.0 L485.0,142.3 L486.6,142.6 L488.2,143.0 L489.7,143.3 L491.1,143.8 L492.4,144.2 L493.5,144.7 L494.6,145.1 L495.4,145.7 L496.1,146.2 L496.6,146.7 L497.4,147.4 L498.3,148.3 L499.4,149.4 L500.5,150.7 L501.7,152.0 L502.9,153.4 L504.1,154.9 L505.1,156.4 L506.2,157.8 L507.0,159.2 L507.8,160.4 L508.4,161.5 L508.9,162.2 L509.2,162.4 L509.4,162.6 L509.6,163.2 L509.8,164.2 L509.9,165.4 L509.8,166.9 L509.7,168.5 L509.6,170.1 L509.5,171.9 L509.4,173.7 L509.5,175.4 L509.8,177.2 L510.4,179.0 L513.0,181.0Z" fill="#6fbe3f"/><path d="M513.0,181.0 L513.3,180.1 L513.8,179.0 L514.4,177.8 L515.0,176.3 L515.8,174.8 L516.5,173.2 L517.2,171.4 L517.9,169.7 L518.5,167.9 L518.9,166.0 L519.2,164.2 L519.3,162.5 L519.2,160.8 L518.8,159.2 L518.2,157.5 L517.3,155.7 L516.4,153.9 L515.3,152.0 L514.0,150.2 L512.7,148.3 L511.2,146.5 L509.7,144.8 L508.2,143.2 L506.6,141.6 L505.1,140.2 L503.5,139.0 L502.0,138.0 L500.5,137.2 L498.9,136.5 L497.2,135.9 L495.5,135.5 L493.7,135.2 L491.9,135.0 L490.1,134.8 L488.3,134.8 L486.5,134.8 L484.8,134.8 L483.1,134.8 L481.4,134.9 L479.8,135.0 L478.2,135.0 L476.7,135.2 L475.1,135.4 L473.5,135.7 L471.9,136.0 L470.3,136.4 L468.8,136.8 L467.3,137.2 L465.9,137.6 L464.6,138.0 L463.4,138.4 L462.4,138.7 L461.5,139.0 L460.7,139.2 L460.7,139.2 L461.5,139.0 L462.4,138.7 L463.4,138.4 L464.6,138.0 L466.1,138.1 L467.5,137.9 L469.0,137.7 L470.6,137.6 L472.2,137.4 L473.8,137.2 L475.3,137.1 L476.9,137.1 L478.4,137.1 L479.9,137.2 L481.5,137.3 L483.1,137.4 L484.8,137.4 L486.6,137.5 L488.3,137.7 L490.0,137.8 L491.6,138.0 L493.3,138.3 L494.8,138.7 L496.3,139.2 L497.7,139.7 L498.9,140.3 L500.1,141.0 L501.4,142.0 L502.7,143.1 L504.1,144.4 L505.5,145.8 L506.9,147.3 L508.3,149.0 L509.6,150.6 L510.9,152.4 L512.1,154.1 L513.1,155.7 L514.0,157.4 L514.7,158.9 L515.3,160.3 L515.7,161.4 L515.8,162.5 L515.9,163.9 L515.7,165.4 L515.5,167.0 L515.1,168.7 L514.6,170.4 L514.1,172.1 L513.6,173.8 L513.1,175.4 L512.7,177.0 L512.4,178.4 L512.3,179.7 L513.0,181.0Z" fill="#c6dd42"/><path d="M512.9,178.6L509.6,177.2M513.9,175.8L509.2,173.6M515.1,172.5L509.4,170.1M516.2,169.1L509.6,166.8M517.0,165.6L509.5,164.1M517.2,162.5L509.1,162.6M516.7,159.8L508.6,162.3M515.3,156.7L507.5,160.6M513.3,153.3L505.9,158.0M510.9,149.7L503.8,155.1M508.0,146.3L501.5,152.2M505.1,143.3L499.2,149.7M502.2,140.8L497.2,147.7M499.5,139.1L495.9,146.5M496.6,137.9L494.5,145.5M493.4,137.1L492.3,144.5M490.0,136.6L489.7,143.6M486.6,136.4L486.6,142.9M483.1,136.4L483.3,142.2M479.8,136.3L480.0,141.5M476.8,136.3L477.3,140.8M473.6,136.6L474.4,140.2M470.5,137.1L471.2,139.8M467.4,137.6L467.9,139.3M464.6,138.0L464.6,138.0M462.4,138.7L462.4,138.7" stroke="#3aa545" stroke-width="0.5" opacity="0.55" fill="none"/>
<circle cx="509.5" cy="174.5" r="4.4" fill="#9c4a20"/>
<circle cx="508.9" cy="173.8" r="2.2" fill="#c77a3f"/>
<circle cx="505.0" cy="184.0" r="4.0" fill="#9c4a20"/>
<circle cx="504.4" cy="183.3" r="2.0" fill="#c77a3f"/>
<circle cx="512.5" cy="186.5" r="4.4" fill="#9c4a20"/>
<circle cx="511.9" cy="185.8" r="2.2" fill="#c77a3f"/>
<circle cx="519.0" cy="191.0" r="3.8" fill="#9c4a20"/>
<circle cx="518.4" cy="190.3" r="1.9" fill="#c77a3f"/>
<circle cx="509.0" cy="193.5" r="3.6" fill="#9c4a20"/>
<circle cx="508.4" cy="192.8" r="1.8" fill="#c77a3f"/>
<circle cx="500.5" cy="187.5" r="2.8" fill="#9c4a20"/>
<circle cx="499.9" cy="186.8" r="1.4" fill="#c77a3f"/>
<circle cx="524.0" cy="195.0" r="2.4" fill="#9c4a20"/>
<circle cx="523.4" cy="194.3" r="1.2" fill="#c77a3f"/>
<ellipse cx="257.0" cy="511.0" rx="8.0" ry="4.0" fill="#c3976a"/>
<ellipse cx="279.0" cy="513.4" rx="3.5" ry="2.0" fill="#c3976a"/>
<ellipse cx="311.8" cy="522.4" rx="6.5" ry="3.5" fill="#c3976a"/>
<ellipse cx="326.2" cy="512.0" rx="3.3" ry="1.9" fill="#c3976a"/>
<ellipse cx="342.0" cy="505.0" rx="2.4" ry="1.5" fill="#ddc07c"/>
<ellipse cx="351.0" cy="511.2" rx="4.5" ry="3.0" fill="#ddc07c"/>
<ellipse cx="339.7" cy="516.5" rx="1.2" ry="1.2" fill="#ddc07c"/>
<ellipse cx="329.8" cy="509.0" rx="1.2" ry="1.2" fill="#ddc07c"/>
<ellipse cx="330.7" cy="534.1" rx="7.0" ry="3.7" fill="#ddc07c"/>
<ellipse cx="373.0" cy="542.2" rx="5.5" ry="3.0" fill="#ddc07c"/>
<ellipse cx="278.0" cy="538.2" rx="4.5" ry="2.4" fill="#ddc07c"/>
<ellipse cx="289.5" cy="545.3" rx="3.6" ry="2.2" fill="#c3976a"/>
<ellipse cx="294.5" cy="542.5" rx="2.0" ry="1.5" fill="#c3976a"/>
<ellipse cx="303.7" cy="548.9" rx="5.0" ry="2.7" fill="#c3976a"/>
<ellipse cx="257.0" cy="550.3" rx="6.5" ry="3.5" fill="#c3976a"/>
<ellipse cx="281.2" cy="552.0" rx="1.8" ry="1.0" fill="#c3976a"/>
<ellipse cx="293.0" cy="554.0" rx="1.2" ry="1.2" fill="#c3976a"/>
<ellipse cx="279.0" cy="599.8" rx="1.8" ry="1.6" fill="#ddc07c"/>
<ellipse cx="256.4" cy="606.5" rx="1.7" ry="1.4" fill="#ddc07c"/>
<ellipse cx="264.5" cy="608.0" rx="1.3" ry="1.2" fill="#ddc07c"/>
<ellipse cx="317.2" cy="613.0" rx="2.6" ry="1.6" fill="#c3976a"/>
<ellipse cx="324.8" cy="617.5" rx="2.6" ry="1.6" fill="#c3976a"/>
<ellipse cx="303.2" cy="620.5" rx="4.5" ry="2.5" fill="#c3976a"/>
<ellipse cx="319.0" cy="621.8" rx="1.2" ry="1.2" fill="#c3976a"/>
<ellipse cx="251.3" cy="644.7" rx="1.4" ry="1.1" fill="#e6d39f"/>
<ellipse cx="256.5" cy="645.5" rx="1.2" ry="1.0" fill="#e6d39f"/>
<ellipse cx="266.4" cy="641.3" rx="1.4" ry="1.1" fill="#e6d39f"/>
<ellipse cx="458.1" cy="525.5" rx="5.2" ry="3.0" fill="#c58a5c" transform="rotate(-8 458.1 525.5)"/>
<path d="M288,546 L295.5,542" stroke="#c3976a" stroke-width="1.6" stroke-linecap="round"/>
<path d="M573.0,526.3 L570.1,526.7 L566.3,527.2 L561.8,527.8 L556.6,528.5 L550.7,529.3 L544.3,530.2 L537.3,531.2 L529.4,532.4 L520.6,533.8 L511.3,535.2 L501.7,536.7 L491.9,538.2 L482.3,539.7 L472.9,541.0 L463.2,542.3 L453.3,543.5 L443.4,544.8 L433.7,546.0 L424.3,547.3 L415.4,548.7 L406.8,550.1 L398.2,551.5 L389.9,552.9 L382.0,554.4 L374.8,555.8 L368.2,557.3 L362.6,558.7 L357.9,560.2 L354.0,561.7 L350.7,563.2 L347.7,564.7 L344.9,566.1 L342.2,567.5 L339.3,568.9 L336.4,570.3 L333.7,571.6 L331.3,573.0 L329.3,574.2 L327.9,575.4 L327.2,576.5 L327.3,577.4 L328.0,578.3 L329.3,579.1 L330.9,579.9 L332.7,580.6 L334.7,581.3 L336.7,582.0 L339.2,582.7 L342.0,583.3 L344.9,583.9 L347.8,584.5 L350.4,585.1 L352.5,585.8 L354.3,586.5 L355.9,587.3 L357.3,588.1 L358.5,588.9 L359.3,589.7 L359.9,590.5 L360.0,591.3 L359.6,592.1 L358.7,593.0 L357.6,593.8 L356.3,594.6 L355.0,595.5 L353.9,596.3 L352.8,597.1 L351.5,598.0 L350.1,598.8 L348.9,599.6 L347.8,600.4 L347.2,601.2 L347.2,601.9 L347.8,602.5 L348.8,603.2 L350.2,603.7 L351.9,604.3 L353.8,604.9 L355.8,605.4 L357.9,606.0 L360.4,606.5 L363.1,607.0 L366.0,607.5 L368.9,608.0 L371.4,608.6 L373.6,609.2 L375.3,609.9 L376.7,610.7 L378.0,611.5 L379.0,612.3 L379.7,613.1 L380.1,614.0 L380.2,614.8 L380.1,615.6 L379.9,616.4 L379.3,617.2 L378.3,618.0 L376.9,618.8 L374.8,619.7 L371.9,620.6 L368.2,621.5 L363.8,622.5 L359.0,623.4 L353.9,624.4 L348.8,625.4 L344.0,626.4 L339.2,627.4 L334.2,628.3 L329.1,629.3 L324.0,630.3 L319.2,631.2 L314.6,632.2 L310.5,633.2 L306.7,634.1 L303.0,635.1 L299.7,636.0 L296.5,637.0 L293.7,637.9 L291.3,638.9 L289.1,639.8 L287.3,640.8 L285.7,641.7 L284.4,642.6 L283.5,643.6 L282.9,644.6 L282.6,645.6 L282.6,646.7 L282.8,647.7 L283.4,648.8 L284.4,649.9 L285.7,651.1 L287.5,652.3 L289.7,653.7 L292.2,655.2 L295.2,656.8 L298.6,658.4 L302.4,660.1 L306.7,661.8 L311.4,663.5 L316.7,665.2 L322.7,667.0 L329.2,668.9 L335.9,670.7 L342.8,672.5 L349.7,674.2 L356.2,675.8 L362.8,677.2 L369.4,678.6 L376.1,679.9 L382.6,681.2 L389.0,682.4 L395.1,683.6 L401.0,684.7 L407.0,685.9 L413.0,687.1 L418.8,688.2 L423.9,689.2 L428.2,690.0 L431.4,690.6 L431.4,688.5 L428.2,687.7 L423.9,686.5 L418.8,685.2 L413.0,683.7 L407.0,682.1 L401.0,680.6 L395.1,679.2 L388.8,677.7 L382.2,676.2 L375.4,674.7 L368.6,673.2 L362.1,671.8 L356.0,670.3 L350.4,669.0 L345.0,667.7 L339.9,666.4 L335.0,665.2 L330.3,663.9 L326.1,662.7 L322.1,661.3 L318.5,659.9 L315.3,658.5 L312.3,657.0 L309.7,655.5 L307.4,654.0 L305.4,652.7 L303.7,651.4 L302.4,650.1 L301.4,649.0 L300.7,647.9 L300.3,646.8 L300.2,645.7 L300.3,644.6 L300.6,643.6 L301.0,642.6 L301.7,641.6 L302.8,640.6 L304.1,639.7 L306.0,638.7 L308.3,637.8 L311.2,636.8 L314.6,635.9 L318.4,635.0 L322.6,634.0 L327.0,633.1 L331.6,632.1 L336.4,631.0 L341.8,629.9 L347.6,628.8 L353.6,627.6 L359.4,626.4 L364.8,625.3 L369.6,624.2 L373.8,623.2 L377.6,622.1 L381.1,621.1 L384.3,620.1 L387.1,619.2 L389.5,618.3 L391.6,617.5 L393.4,616.8 L394.8,616.2 L395.9,615.6 L396.6,615.0 L396.9,614.4 L396.9,613.8 L396.4,613.1 L395.4,612.3 L393.9,611.5 L392.2,610.7 L390.3,609.9 L388.3,609.2 L386.4,608.6 L384.2,608.1 L381.9,607.7 L379.4,607.4 L376.9,607.1 L374.6,606.7 L372.6,606.3 L370.9,605.9 L369.4,605.4 L368.0,604.9 L366.8,604.3 L366.0,603.8 L365.4,603.1 L365.3,602.4 L365.7,601.6 L366.8,600.6 L368.2,599.6 L369.9,598.6 L371.6,597.5 L373.0,596.6 L374.0,595.7 L374.9,594.9 L375.6,594.2 L376.2,593.5 L376.7,592.8 L377.0,592.1 L377.0,591.5 L376.9,590.8 L376.6,590.1 L376.1,589.3 L375.4,588.6 L374.4,587.9 L373.2,587.2 L371.7,586.5 L369.7,585.8 L367.1,585.1 L364.3,584.3 L361.3,583.6 L358.5,582.8 L355.9,582.1 L353.9,581.3 L352.1,580.5 L350.4,579.7 L348.9,578.9 L347.7,578.1 L346.8,577.3 L346.2,576.4 L345.9,575.5 L345.9,574.6 L346.2,573.7 L346.8,572.8 L347.7,571.8 L349.0,570.8 L350.6,569.8 L352.5,568.7 L354.5,567.7 L356.8,566.6 L359.7,565.5 L363.1,564.3 L367.2,563.1 L372.2,561.7 L378.0,560.2 L384.5,558.5 L391.7,556.8 L399.3,555.1 L407.2,553.5 L415.5,551.9 L424.1,550.4 L433.4,549.0 L443.1,547.6 L453.1,546.3 L463.1,544.9 L472.9,543.6 L482.3,542.3 L491.9,540.9 L501.7,539.5 L511.3,538.1 L520.6,536.8 L529.4,535.5 L537.3,534.4 L544.3,533.4 L550.7,532.5 L556.6,531.7 L561.8,531.1 L566.3,530.5 L570.1,530.0 L573.0,529.6Z" fill="#dcbb72"/>
<path d="M330.3,663.9 L326.1,662.7 L322.1,661.3 L318.5,659.9 L315.3,658.5 L312.3,657.0 L309.7,655.5 L307.4,654.0 L305.4,652.7 L303.7,651.4 L302.4,650.1 L301.4,649.0 L300.7,647.9 L300.3,646.8 L300.2,645.7 L300.3,644.6 L300.6,643.6 L301.0,642.6 L301.7,641.6 L302.8,640.6 L304.1,639.7 L306.0,638.7 L308.3,637.8 L311.2,636.8 L314.6,635.9 L318.4,635.0 L322.6,634.0 L327.0,633.1 L331.6,632.1 L336.4,631.0 L341.8,629.9 L347.6,628.8 L353.6,627.6 L359.4,626.4 L364.8,625.3 L369.6,624.2 L373.8,623.2 L377.6,622.1 L381.1,621.1 L384.3,620.1 L387.1,619.2 L389.5,618.3 L391.6,617.5 L393.4,616.8 L394.8,616.2 L395.9,615.6 L396.6,615.0 L396.9,614.4 L396.9,613.8 L396.4,613.1 L395.4,612.3 L393.9,611.5 L392.2,610.7 L390.3,609.9 L388.3,609.2 L386.4,608.6 L384.2,608.1 L381.9,607.7 L379.4,607.4 L376.9,607.1 L374.6,606.7 L372.6,606.3 L370.9,605.9 L369.4,605.4 L368.0,604.9 L366.8,604.3 L366.0,603.8 L365.4,603.1 L365.3,602.4 L365.7,601.6 L366.8,600.6 L368.2,599.6 L369.9,598.6 L371.6,597.5 L373.0,596.6 L374.0,595.7 L374.9,594.9 L375.6,594.2 L376.2,593.5 L376.7,592.8 L377.0,592.1 L377.0,591.5 L376.9,590.8 L376.6,590.1 L376.1,589.3 L375.4,588.6 L374.4,587.9 L373.2,587.2 L371.7,586.5 L369.7,585.8 L367.1,585.1 L364.3,584.3 L361.3,583.6 L358.5,582.8 L355.9,582.1 L353.9,581.3 L352.1,580.5 L350.4,579.7 L348.9,578.9 L347.7,578.1 L346.8,577.3 L346.2,576.4 L345.9,575.5 L345.9,574.6 L346.2,573.7 L346.8,572.8 L347.7,571.8 L349.0,570.8 L350.6,569.8 L352.5,568.7 L354.5,567.7 L356.8,566.6 L359.7,565.5" fill="none" stroke="#3f97e6" stroke-width="0.9"/>
<path d="M573.0,531.6 L570.3,532.0 L566.9,532.4 L562.8,532.9 L558.1,533.5 L552.8,534.3 L547.0,535.2 L540.7,536.4 L533.7,537.8 L525.7,539.4 L517.1,541.3 L508.0,543.3 L498.9,545.3 L490.0,547.3 L481.7,549.2 L473.9,551.0 L466.1,552.7 L458.5,554.4 L451.1,556.1 L444.0,557.8 L437.3,559.3 L431.2,560.8 L425.5,562.3 L420.3,563.6 L415.6,564.9 L411.2,566.2 L407.2,567.3 L403.7,568.4 L400.6,569.5 L397.9,570.4 L395.8,571.3 L394.0,572.1 L392.7,572.8 L391.8,573.5 L391.2,574.2 L390.9,574.8 L391.0,575.5 L391.5,576.2 L392.4,576.8 L393.7,577.4 L395.2,578.0 L396.8,578.6 L398.4,579.1 L400.0,579.6 L401.7,579.9 L403.6,580.2 L405.7,580.5 L407.7,580.8 L409.5,581.0 L411.2,581.3 L412.5,581.7 L413.6,582.1 L414.6,582.5 L415.5,582.9 L416.1,583.4 L416.5,583.9 L416.6,584.4 L416.5,584.9 L416.0,585.4 L415.2,585.9 L414.1,586.5 L412.8,587.1 L411.3,587.7 L409.7,588.3 L407.9,589.0 L405.7,589.8 L402.7,590.7 L399.5,591.6 L396.4,592.5 L393.6,593.4 L391.7,594.2 L390.9,595.0 L391.4,595.6 L393.0,596.2 L395.3,596.7 L398.2,597.1 L401.3,597.6 L404.5,598.1 L407.5,598.5 L410.3,599.0 L413.3,599.4 L416.5,599.7 L419.7,600.1 L422.9,600.5 L425.8,601.0 L428.6,601.6 L431.1,602.3 L433.6,603.1 L436.0,604.0 L438.2,605.0 L440.2,605.9 L441.7,606.9 L442.8,607.8 L443.4,608.7 L443.5,609.6 L443.2,610.5 L442.6,611.4 L441.6,612.3 L440.3,613.2 L438.7,614.1 L436.8,615.1 L434.5,616.1 L431.8,617.2 L428.9,618.2 L425.6,619.3 L422.2,620.4 L418.7,621.5 L415.1,622.5 L411.2,623.6 L407.1,624.7 L402.9,625.7 L398.6,626.8 L394.1,627.9 L389.7,628.9 L385.3,629.9 L380.8,630.8 L376.1,631.7 L371.3,632.6 L366.6,633.5 L362.1,634.4 L357.8,635.3 L353.9,636.2 L350.3,637.0 L346.8,637.9 L343.6,638.8 L340.6,639.7 L337.8,640.6 L335.3,641.5 L333.2,642.4 L331.2,643.2 L329.5,644.1 L328.1,644.9 L326.9,645.8 L326.1,646.7 L325.7,647.6 L325.8,648.7 L326.3,649.8 L327.2,650.9 L328.5,652.1 L330.2,653.4 L332.3,654.6 L334.6,655.9 L337.2,657.1 L340.2,658.3 L343.5,659.6 L347.3,660.8 L351.3,662.1 L355.5,663.3 L359.8,664.4 L364.2,665.5 L368.7,666.6 L373.6,667.6 L378.7,668.6 L383.9,669.6 L389.0,670.4 L393.7,671.2 L398.0,672.0 L401.7,672.6 L405.1,673.0 L408.1,673.3 L410.8,673.6 L413.3,673.8 L415.6,674.1 L417.7,674.5 L419.6,675.1 L420.9,675.9 L421.9,676.7 L422.7,677.6 L423.5,678.5 L424.6,679.4 L426.0,680.3 L428.1,681.0 L430.8,681.7 L434.0,682.2 L437.4,682.8 L440.8,683.4 L444.0,683.9 L446.9,684.6 L449.0,685.2 L450.7,685.9 L452.1,686.7 L453.3,687.5 L454.1,688.3 L454.9,689.1 L455.5,689.8 L456.0,690.4 L454.9,691.1 L452.6,691.7 L449.9,692.3 L448.0,692.8 L447.8,693.3 L450.4,693.7 L456.9,694.0 L468.9,694.2 L485.7,694.3 L505.3,694.3 L525.8,694.2 L545.3,694.1 L561.6,694.0 L573.0,694.0Z" fill="#c4eafa"/>
<path d="M573.0,533.2 L570.3,533.6 L566.9,534.0 L562.8,534.6 L558.1,535.2 L552.8,536.0 L547.0,537.0 L540.7,538.2 L533.7,539.6 L525.7,541.3 L517.0,543.2 L507.9,545.2 L498.8,547.3 L489.9,549.3 L481.7,551.2 L474.0,553.0 L466.4,554.7 L459.0,556.5 L451.9,558.2 L445.1,559.8 L438.7,561.4 L432.8,562.8 L427.4,564.2 L422.5,565.6 L418.0,566.8 L413.9,568.0 L410.2,569.1 L406.9,570.1 L404.1,571.0 L401.7,571.9 L399.8,572.5 L398.3,573.1 L397.3,573.6 L396.6,574.1 L396.2,574.5 L396.0,575.0 L396.0,575.4 L396.4,575.9 L397.2,576.3 L398.2,576.8 L399.3,577.2 L400.7,577.6 L402.1,578.0 L403.5,578.3 L405.2,578.7 L407.1,579.0 L409.2,579.3 L411.2,579.6 L413.2,579.9 L414.9,580.3 L416.3,580.7 L417.6,581.2 L418.8,581.8 L419.9,582.3 L420.8,582.9 L421.4,583.6 L421.6,584.2 L421.4,584.9 L420.8,585.6 L419.6,586.4 L418.1,587.2 L416.4,588.0 L414.6,588.8 L412.7,589.6 L410.9,590.3 L408.9,591.1 L406.5,591.8 L403.9,592.5 L401.4,593.2 L399.2,593.8 L397.7,594.4 L397.0,595.0 L397.3,595.4 L398.4,595.8 L400.0,596.0 L402.1,596.3 L404.5,596.5 L407.1,596.8 L409.6,597.1 L412.1,597.5 L414.9,597.8 L418.0,598.2 L421.1,598.6 L424.3,599.0 L427.4,599.5 L430.2,600.2 L432.9,601.0 L435.8,602.0 L438.7,603.1 L441.4,604.2 L443.8,605.4 L445.8,606.6 L447.2,607.8 L447.8,608.9 L447.9,609.9 L447.5,611.0 L446.7,612.1 L445.4,613.1 L443.9,614.2 L442.0,615.3 L439.9,616.3 L437.4,617.4 L434.4,618.5 L431.2,619.6 L427.7,620.7 L424.0,621.8 L420.3,622.9 L416.5,624.0 L412.6,625.1 L408.5,626.2 L404.3,627.3 L399.9,628.4 L395.5,629.4 L391.1,630.5 L386.7,631.5 L382.1,632.5 L377.4,633.4 L372.5,634.3 L367.8,635.2 L363.3,636.1 L359.1,637.0 L355.4,637.9 L352.1,638.7 L349.1,639.5 L346.4,640.3 L343.9,641.1 L341.7,641.8 L339.7,642.6 L337.9,643.4 L336.2,644.1 L334.8,644.8 L333.5,645.5 L332.6,646.3 L331.9,647.0 L331.5,647.8 L331.5,648.7 L331.8,649.6 L332.5,650.6 L333.5,651.6 L334.8,652.6 L336.4,653.7 L338.4,654.8 L340.6,655.8 L343.3,656.9 L346.4,658.1 L349.9,659.2 L353.6,660.4 L357.6,661.5 L361.7,662.7 L365.9,663.7 L370.3,664.8 L375.1,665.8 L380.2,666.8 L385.3,667.8 L390.4,668.7 L395.2,669.6 L399.6,670.4 L403.4,671.0 L407.0,671.4 L410.3,671.8 L413.3,672.1 L416.1,672.3 L418.7,672.7 L421.0,673.1 L423.0,673.8 L424.5,674.5 L425.6,675.4 L426.5,676.4 L427.4,677.3 L428.4,678.2 L429.9,679.1 L432.0,679.8 L434.7,680.4 L437.8,681.0 L441.1,681.5 L444.5,682.0 L447.7,682.5 L450.5,683.1 L452.6,683.8 L454.4,684.7 L455.9,685.6 L457.1,686.6 L458.1,687.6 L458.9,688.5 L459.5,689.4 L460.1,690.2 L459.1,690.9 L456.8,691.6 L454.2,692.2 L452.3,692.8 L452.1,693.3 L454.6,693.7 L460.9,694.0 L472.5,694.2 L488.7,694.3 L507.7,694.3 L527.4,694.2 L546.2,694.1 L562.0,694.0 L573.0,694.0Z" fill="url(#water)"/>
<ellipse cx="387.7" cy="566.7" rx="6.0" ry="3.9" fill="#b9e6fa"/>
<ellipse cx="376.6" cy="573.0" rx="3.6" ry="2.4" fill="#b9e6fa"/>
<ellipse cx="375.0" cy="565.0" rx="1.2" ry="1.1" fill="#b9e6fa"/>
<ellipse cx="414.0" cy="558.0" rx="1.6" ry="1.0" fill="#b9e6fa"/>
<ellipse cx="421.8" cy="606.7" rx="6.0" ry="3.9" fill="#b9e6fa"/>
<ellipse cx="409.6" cy="613.6" rx="3.6" ry="2.4" fill="#b9e6fa"/>
<ellipse cx="408.0" cy="605.7" rx="1.2" ry="1.1" fill="#b9e6fa"/>
<ellipse cx="385.5" cy="626.8" rx="2.6" ry="1.6" fill="#b9e6fa"/>
<ellipse cx="390.9" cy="624.2" rx="1.3" ry="1.2" fill="#b9e6fa"/>
</svg>
<svg style="left:0;top:0" width="1000" height="750" viewBox="0 0 1000 750">
<g transform="translate(63.2,78.0)" ><g transform="scale(0.86)"><path d="M0,-6 V6 M-6,0 H6" stroke="#dcdcdc" stroke-width="1.4"/><path d="M0,-7.2 l2.4,2.8 h-4.8z M0,7.2 l2.4,-2.8 h-4.8z M-7.2,0 l2.8,2.4 v-4.8z M7.2,0 l-2.8,2.4 v-4.8z" fill="#dcdcdc"/></g></g>
<g transform="translate(63.8,97.3)" ><rect x="-6" y="-5.2" width="12" height="10.4" fill="none" stroke="#dcdcdc" stroke-width="1.3" stroke-dasharray="2.6 1.5"/></g>
<g transform="translate(63.5,116.8)" ><path d="M-6,-4.5 L-1.5,-0.8 L5.5,-5.5 L4.2,1.8 L-2,2.4 L-5,6 M-2,2.4 L-0.5,5.2 M-6,-4.5 L-2.6,1.2" fill="none" stroke="#dcdcdc" stroke-width="1.2" stroke-linecap="round" stroke-linejoin="round"/></g>
<g transform="translate(63.5,137.7)" ><path d="M-5.5,5.5 L1.6,-1.6" stroke="#dcdcdc" stroke-width="2.8" stroke-linecap="round"/><path d="M3.2,-6 v2.4 M2,-4.8 h2.4 M5.6,-1.8 v1.6 M4.8,-1 h1.6 M-1.5,-6 v1.6 M-2.3,-5.2 h1.6 M4.8,2.6 v1.2" stroke="#dcdcdc" stroke-width="0.9"/></g>
<g transform="translate(63.0,157.0)" ><path d="M-3.6,-7 V3.6 H7 M-7,-3.6 H3.6 V7" fill="none" stroke="#dcdcdc" stroke-width="1.6"/></g>
<g transform="translate(63.5,176.9)" ><path d="M-6,6 L-5.2,3.4 L0.4,-2.2 L2.2,-0.4 L-3.4,5.2 Z" fill="none" stroke="#dcdcdc" stroke-width="1.1" stroke-linejoin="round"/><path d="M-0.8,-3.4 L3.4,0.8 M1.2,-2.4 L3.6,-5.6 A1.8,1.8 0 0 1 5.8,-3.4 L2.6,-1.2" stroke="#dcdcdc" stroke-width="2" stroke-linecap="round" fill="none"/></g>
<g transform="translate(63.5,197.0)" ><g transform="rotate(-40)"><rect x="-7" y="-3.2" width="14" height="6.4" rx="1.6" fill="#dcdcdc"/><rect x="-2.4" y="-2.4" width="4.8" height="4.8" fill="#535353"/><circle cx="-1" cy="-1" r=".6" fill="#dcdcdc"/><circle cx="1" cy="-1" r=".6" fill="#dcdcdc"/><circle cx="-1" cy="1" r=".6" fill="#dcdcdc"/><circle cx="1" cy="1" r=".6" fill="#dcdcdc"/></g><path d="M-6.2,-1.8 A4.6,4.6 0 0 1 -1.2,-6.4" fill="none" stroke="#dcdcdc" stroke-width=".8" stroke-dasharray="1.4 1"/></g>
<g transform="translate(63.5,216.7)" ><path d="M5.8,-6.4 L6.4,-5.8 L0.2,2 L-1.8,0.2 Z" fill="#dcdcdc"/><path d="M-2.6,1.2 L-0.6,3 C-1.4,5.6 -4,6.6 -6.4,6 C-5,4.8 -4.8,2.2 -2.6,1.2Z" fill="#dcdcdc"/></g>
<g transform="translate(63.5,236.6)" ><circle cx="0" cy="-4.2" r="2.3" fill="#dcdcdc"/><path d="M-1.1,-2.6 h2.2 l.7,4 h-3.6z" fill="#dcdcdc"/><rect x="-5.6" y="1.2" width="11.2" height="2.8" rx=".8" fill="#dcdcdc"/><rect x="-5.6" y="5" width="11.2" height="1.3" fill="#dcdcdc"/></g>
<g transform="translate(64.0,256.5)" ><path d="M6,-6.6 L6.6,-6 L1.4,1.2 L-0.4,-0.4 Z" fill="#dcdcdc"/><path d="M-1.2,0.4 L0.6,2 C0,4.4 -2.2,5.6 -4.4,5.2 C-3.2,4 -3.2,1.4 -1.2,0.4Z" fill="#dcdcdc"/><path d="M-6.8,-0.8 A4.4,4.4 0 0 1 -0.6,-4.4" fill="none" stroke="#dcdcdc" stroke-width="1.1"/><path d="M-7.6,-3.2 l.4,3.2 l2.8,-1.6z" fill="#dcdcdc"/></g>
<g transform="translate(63.5,276.6)" ><path d="M-6,2.2 L0.6,-5.6 L5.6,-2 L-0.6,5 L-3.6,5 Z" fill="none" stroke="#dcdcdc" stroke-width="1.1" stroke-linejoin="round"/><path d="M-2.4,-2 L0.6,-5.6 L5.6,-2 L2.6,1.6Z" fill="#dcdcdc"/><path d="M-0.6,5.2 H6.4" stroke="#dcdcdc" stroke-width="1.1"/></g>
<g transform="translate(63.2,296.7)" ><path d="M-6.4,0.2 L-0.8,-5 L4.8,0.6 L-1,6 Z" fill="none" stroke="#dcdcdc" stroke-width="1.2" stroke-linejoin="round"/><path d="M-2.8,-2.8 V-6.4 a1.4,1.4 0 0 1 2.8,0 V-1.6" fill="none" stroke="#dcdcdc" stroke-width="1"/><path d="M4.8,0.8 C6.4,2.2 7.2,3.6 7,5 a1.3,1.3 0 0 1 -2.4,0 C4.4,3.6 4.8,2.4 4.8,0.8Z" fill="#dcdcdc"/></g>
<g transform="translate(63.5,316.4)" ><path d="M0,-6.6 C2.6,-2.8 4.6,-0.4 4.6,2.2 A4.6,4.6 0 0 1 -4.6,2.2 C-4.6,-0.4 -2.6,-2.8 0,-6.6Z" fill="#dcdcdc"/></g>
<g transform="translate(63.5,336.3)" ><circle cx="2.2" cy="-2.6" r="4" fill="#dcdcdc"/><path d="M-0.6,0.4 L-6,6" stroke="#dcdcdc" stroke-width="1.7" stroke-linecap="round"/></g>
<g transform="translate(63.5,356.4)" ><path d="M-5.8,6.4 L-4.4,-1 L1.6,-5 L5.4,-0.8 L1,4.8 Z" fill="none" stroke="#dcdcdc" stroke-width="1.2" stroke-linejoin="round"/><path d="M-5.8,6.4 L-0.6,0.6" stroke="#dcdcdc" stroke-width="1"/><circle cx="-0.2" cy="0.2" r="1.1" fill="#dcdcdc"/><path d="M1.6,-6.4 L6.8,-0.8" stroke="#dcdcdc" stroke-width="1.8" stroke-linecap="round"/></g>
<g transform="translate(63.8,376.3)" ><path d="M-5.6,-6 H5.6 V-2.8 H4.6 C4.4,-4.2 3.8,-4.8 2.4,-4.8 H1.1 V4 C1.1,4.8 1.6,5.1 3,5.1 V6.2 H-3 V5.1 C-1.6,5.1 -1.1,4.8 -1.1,4 V-4.8 H-2.4 C-3.8,-4.8 -4.4,-4.2 -4.6,-2.8 H-5.6 Z" fill="#dcdcdc"/></g>
<g transform="translate(63.5,396.2)" ><path d="M-3.6,-7 L-3.6,4.6 L-0.9,2.2 L1.2,7 L3,6.2 L0.9,1.5 L4.6,1.3 Z" fill="#111" stroke="#dcdcdc" stroke-width="1" stroke-linejoin="round"/></g>
<g transform="translate(63.5,415.7)" ><rect x="-6.2" y="-4.8" width="12.4" height="9.6" fill="#7a7a7a" stroke="#dcdcdc" stroke-width="1.2"/></g>
<g transform="translate(63.5,436.0)" ><path d="M-1.9,-1 V-5.6 a1,1 0 0 1 2,0 V-1.4 V-6.6 a1,1 0 0 1 2,0 V-1.2 V-5.6 a1,1 0 0 1 2,0 V-0.4 V-3.8 a1,1 0 0 1 1.9,0 V2.6 C6,5.4 4,7 1.2,7 C-1.4,7 -2.6,6 -4,4 L-6.6,0.4 C-7,-0.6 -5.8,-1.6 -4.8,-0.6 L-3.9,1 V-4.6 a1,1 0 0 1 2,0Z" fill="#dcdcdc"/></g>
<g transform="translate(63.0,454.7)" ><circle cx="-1" cy="-1" r="4.6" fill="none" stroke="#dcdcdc" stroke-width="1.4"/><path d="M2.4,2.4 L6.6,6.6" stroke="#dcdcdc" stroke-width="2" stroke-linecap="round"/></g>
<g transform="translate(63.5,477.0)" ><circle cx="-4.7" cy="0" r="1.5" fill="#dcdcdc"/><circle cx="0" cy="0" r="1.5" fill="#dcdcdc"/><circle cx="4.7" cy="0" r="1.5" fill="#dcdcdc"/></g>
<path d="M73.5,84.7 l0,-2.6 l-2.6,2.6z" fill="#cfcfcf"/>
<path d="M73.5,104.6 l0,-2.6 l-2.6,2.6z" fill="#cfcfcf"/>
<path d="M73.5,124.5 l0,-2.6 l-2.6,2.6z" fill="#cfcfcf"/>
<path d="M73.5,144.4 l0,-2.6 l-2.6,2.6z" fill="#cfcfcf"/>
<path d="M73.5,164.3 l0,-2.6 l-2.6,2.6z" fill="#cfcfcf"/>
<path d="M73.5,184.2 l0,-2.6 l-2.6,2.6z" fill="#cfcfcf"/>
<path d="M73.5,204.1 l0,-2.6 l-2.6,2.6z" fill="#cfcfcf"/>
<path d="M73.5,224.0 l0,-2.6 l-2.6,2.6z" fill="#cfcfcf"/>
<path d="M73.5,243.9 l0,-2.6 l-2.6,2.6z" fill="#cfcfcf"/>
<path d="M73.5,263.8 l0,-2.6 l-2.6,2.6z" fill="#cfcfcf"/>
<path d="M73.5,283.7 l0,-2.6 l-2.6,2.6z" fill="#cfcfcf"/>
<path d="M73.5,303.6 l0,-2.6 l-2.6,2.6z" fill="#cfcfcf"/>
<path d="M73.5,323.5 l0,-2.6 l-2.6,2.6z" fill="#cfcfcf"/>
<path d="M73.5,343.4 l0,-2.6 l-2.6,2.6z" fill="#cfcfcf"/>
<path d="M73.5,363.3 l0,-2.6 l-2.6,2.6z" fill="#cfcfcf"/>
<path d="M73.5,383.2 l0,-2.6 l-2.6,2.6z" fill="#cfcfcf"/>
<path d="M73.5,403.1 l0,-2.6 l-2.6,2.6z" fill="#cfcfcf"/>
<path d="M73.5,423.0 l0,-2.6 l-2.6,2.6z" fill="#cfcfcf"/>
<path d="M73.5,442.9 l0,-2.6 l-2.6,2.6z" fill="#cfcfcf"/>
<path d="M73.5,462.8 l0,-2.6 l-2.6,2.6z" fill="#cfcfcf"/>
<path d="M73.5,483.9 l0,-2.6 l-2.6,2.6z" fill="#cfcfcf"/>
<path d="M73.5,567.3 l0,-2.6 l-2.6,2.6z" fill="#cfcfcf"/>
<rect x="55.3" y="494.6" width="5" height="5" fill="#fff"/><rect x="52.6" y="491.8" width="5" height="5" fill="#0a0a0a" stroke="#e6e6e6" stroke-width=".8"/>
<path d="M67.2,493 H71 V497.6" fill="none" stroke="#e0e0e0" stroke-width="1.1"/><path d="M67.6,490.8 v4.4 l-2.6,-2.2z M68.8,497 h4.4 l-2.2,2.6z" fill="#e0e0e0"/>
<rect x="60.7" y="511" width="14" height="13" fill="#fff" stroke="#3a3a3a" stroke-width=".6"/>
<rect x="53.3" y="504" width="13.4" height="13.3" fill="#050505" stroke="#d9d9d9" stroke-width="1"/>
<path d="M66.7,513.5 v3.8 h-5.8" fill="none" stroke="#222" stroke-width="1.4"/>
<ellipse cx="67.3" cy="518.9" rx="12.7" ry="7.5" fill="none" stroke="#ee0a14" stroke-width="5.2"/>
<path d="M70,511.2 C80,510.6 85,514.5 84.8,519 C84.6,523.6 79,526.6 70,526.3" fill="none" stroke="#ee0a14" stroke-width="5"/>
<rect x="56.8" y="534.6" width="13.2" height="9.6" fill="none" stroke="#dcdcdc" stroke-width="1.1"/><circle cx="63.4" cy="539.4" r="2.7" fill="none" stroke="#dcdcdc" stroke-width=".9" stroke-dasharray="1.3 .9"/>
<rect x="60.2" y="554.6" width="10" height="7.2" fill="#6a6a6a" stroke="#dcdcdc" stroke-width="1.1"/><rect x="56.8" y="558" width="9.4" height="7.4" fill="#535353" stroke="#dcdcdc" stroke-width="1.1"/>
<path d="M53,48.8 l2.6,2 l-2.6,2z M56.4,48.8 l2.6,2 l-2.6,2z" fill="#ececec"/>
<path d="M989.4,48.6 l2.6,2 l-2.6,2z M992.8,48.6 l2.6,2 l-2.6,2z" fill="#e6e6e6"/>
<text x="55" y="13.8" font-family="Liberation Sans, sans-serif" font-weight="700" font-size="16" fill="#6fa9e2" textLength="16.2" lengthAdjust="spacingAndGlyphs">Ps</text>
<path d="M952.5,0 V19 M972.5,0 V19 M992.5,0 V19" stroke="#474747" stroke-width="1"/>
<path d="M958,8 H965" stroke="#d0d0d0" stroke-width="1.4"/>
<rect x="980.8" y="3" width="5" height="4" fill="none" stroke="#d0d0d0" stroke-width="1"/><rect x="978.8" y="5" width="5" height="4" fill="#535353" stroke="#d0d0d0" stroke-width="1"/>
<g transform="translate(71.0,33.0)" ><g transform="scale(0.92)"><path d="M0,-6 V6 M-6,0 H6" stroke="#dcdcdc" stroke-width="1.4"/><path d="M0,-7.2 l2.4,2.8 h-4.8z M0,7.2 l2.4,-2.8 h-4.8z M-7.2,0 l2.8,2.4 v-4.8z M7.2,0 l-2.8,2.4 v-4.8z" fill="#dcdcdc"/></g></g>
<path d="M84.0,31.7 l3.0,3.0 l3.0,-3.0" fill="none" stroke="#b8b8b8" stroke-width="1.1"/>
<path d="M204.5,31.7 l3.0,3.0 l3.0,-3.0" fill="none" stroke="#b8b8b8" stroke-width="1.1"/>
<path d="M321.5,25 V41 M462,25 V41 M599.5,25 V41 M632,25 V41" stroke="#4a4a4a" stroke-width="1"/>
<path d="M332.0,28.0 h11" stroke="#a6a6a6" stroke-width="1.2"/>
<rect x="333.3" y="29.4" width="3.4" height="8" fill="#a6a6a6"/><rect x="338.3" y="29.4" width="3.4" height="5" fill="#a6a6a6"/>
<path d="M351.5,33.0 h12" stroke="#a6a6a6" stroke-width="1"/>
<rect x="353.3" y="28.0" width="3.4" height="10" fill="#a6a6a6"/><rect x="358.3" y="30.0" width="3.4" height="6" fill="#a6a6a6"/>
<path d="M372.0,38.0 h11" stroke="#a6a6a6" stroke-width="1.2"/>
<rect x="373.3" y="28.6" width="3.4" height="8" fill="#a6a6a6"/><rect x="378.3" y="31.6" width="3.4" height="5" fill="#a6a6a6"/>
<path d="M398.5,27.5 v11" stroke="#a6a6a6" stroke-width="1.2"/>
<rect x="399.9" y="28.8" width="8" height="3.4" fill="#a6a6a6"/><rect x="399.9" y="33.8" width="5" height="3.4" fill="#a6a6a6"/>
<path d="M424.0,27.0 v12" stroke="#a6a6a6" stroke-width="1"/>
<rect x="419.0" y="28.8" width="10" height="3.4" fill="#a6a6a6"/><rect x="421.0" y="33.8" width="6" height="3.4" fill="#a6a6a6"/>
<path d="M449.0,27.5 v11" stroke="#a6a6a6" stroke-width="1.2"/>
<rect x="439.6" y="28.8" width="8" height="3.4" fill="#a6a6a6"/><rect x="442.6" y="33.8" width="5" height="3.4" fill="#a6a6a6"/>
<path d="M470.5,28.5 h11 M470.5,34.0 h11" stroke="#a6a6a6" stroke-width="1"/>
<rect x="473.0" y="29.4" width="6" height="2.8" fill="#a6a6a6"/><rect x="473.0" y="34.9" width="6" height="2.8" fill="#a6a6a6"/>
<path d="M490.5,30.4 h11 M490.5,36.0 h11" stroke="#a6a6a6" stroke-width="1"/>
<rect x="493.0" y="28.9" width="6" height="3" fill="#a6a6a6"/><rect x="493.0" y="34.5" width="6" height="3" fill="#a6a6a6"/>
<path d="M510.5,32.0 h11 M510.5,37.5 h11" stroke="#a6a6a6" stroke-width="1"/>
<rect x="513.0" y="28.3" width="6" height="2.8" fill="#a6a6a6"/><rect x="513.0" y="33.8" width="6" height="2.8" fill="#a6a6a6"/>
<path d="M538.5,27.5 v11 M544.0,27.5 v11" stroke="#a6a6a6" stroke-width="1"/>
<rect x="539.4" y="30.0" width="2.8" height="6" fill="#a6a6a6"/><rect x="544.9" y="30.0" width="2.8" height="6" fill="#a6a6a6"/>
<path d="M560.4,27.5 v11 M566.0,27.5 v11" stroke="#a6a6a6" stroke-width="1"/>
<rect x="558.9" y="30.0" width="3" height="6" fill="#a6a6a6"/><rect x="564.5" y="30.0" width="3" height="6" fill="#a6a6a6"/>
<path d="M582.0,27.5 v11 M587.5,27.5 v11" stroke="#a6a6a6" stroke-width="1"/>
<rect x="578.3" y="30.0" width="2.8" height="6" fill="#a6a6a6"/><rect x="583.8" y="30.0" width="2.8" height="6" fill="#a6a6a6"/>
<rect x="610.5" y="28.5" width="4" height="9.5" fill="#a6a6a6"/><rect x="616.5" y="28.5" width="4" height="9.5" fill="#a6a6a6"/><path d="M609.5,27.4 h12" stroke="#a6a6a6" stroke-width="1"/>
<g fill="none" stroke="#8a8a8a" stroke-width="1.1"><circle cx="694.5" cy="31.5" r="3.4"/><path d="M690.5,36.5 a5,3 0 0 0 9,1.5 M701,30 a3,3 0 0 1 3,5 h-5"/></g>
<g fill="none" stroke="#8a8a8a" stroke-width="1.1"><circle cx="717" cy="33" r="5.2"/><circle cx="717" cy="33" r="2.2"/></g>
<g fill="none" stroke="#8a8a8a" stroke-width="1"><path d="M737,26.6 l2.4,2.4 l-2.4,2.4 l-2.4,-2.4z M737,34.6 l2.4,2.4 l-2.4,2.4 l-2.4,-2.4z M731,30.6 l2.4,2.4 l-2.4,2.4 l-2.4,-2.4z M743,30.6 l2.4,2.4 l-2.4,2.4 l-2.4,-2.4z"/></g>
<g fill="#8a8a8a"><path d="M757.5,27 l2.2,2.6 h-4.4z M757.5,39 l2.2,-2.6 h-4.4z M751.5,33 l2.6,2.2 v-4.4z M763.5,33 l-2.6,2.2 v-4.4z"/><circle cx="757.5" cy="33" r="1.4"/></g>
<g fill="#8a8a8a"><rect x="770.5" y="30" width="7" height="6" rx="1"/><path d="M778.5,33 l3.2,-2.6 v5.2z"/></g><path d="M783.5,29 q2,4 0,8" fill="none" stroke="#8a8a8a" stroke-width="1"/>
<path d="M230.5,56.0 l4,4 m0,-4 l-4,4" stroke="#bdbdbd" stroke-width="1.2"/>
<path d="M420.0,56.0 l4,4 m0,-4 l-4,4" stroke="#c8c8c8" stroke-width="1.2"/>
<path d="M103.4,69 V81 M139.4,69 V81 M175.4,69 V81 M211.4,69 V81 M247.4,69 V81 M283.4,69 V81 M319.4,69 V81 M355.4,69 V81 M391.4,69 V81 M427.4,69 V81 M463.4,69 V81 M499.4,69 V81 M535.4,69 V81 M571.4,69 V81 M607.4,69 V81 M643.4,69 V81 M679.4,69 V81 M715.4,69 V81" stroke="#5e5e5e" stroke-width="1"/>
<path d="M110.6,78.5 V81 M117.8,78.5 V81 M125.0,78.5 V81 M132.2,78.5 V81 M146.6,78.5 V81 M153.8,78.5 V81 M161.0,78.5 V81 M168.2,78.5 V81 M182.6,78.5 V81 M189.8,78.5 V81 M197.0,78.5 V81 M204.2,78.5 V81 M218.6,78.5 V81 M225.8,78.5 V81 M233.0,78.5 V81 M240.2,78.5 V81 M254.6,78.5 V81 M261.8,78.5 V81 M269.0,78.5 V81 M276.2,78.5 V81 M290.6,78.5 V81 M297.8,78.5 V81 M305.0,78.5 V81 M312.2,78.5 V81 M326.6,78.5 V81 M333.8,78.5 V81 M341.0,78.5 V81 M348.2,78.5 V81 M362.6,78.5 V81 M369.8,78.5 V81 M377.0,78.5 V81 M384.2,78.5 V81 M398.6,78.5 V81 M405.8,78.5 V81 M413.0,78.5 V81 M420.2,78.5 V81 M434.6,78.5 V81 M441.8,78.5 V81 M449.0,78.5 V81 M456.2,78.5 V81 M470.6,78.5 V81 M477.8,78.5 V81 M485.0,78.5 V81 M492.2,78.5 V81 M506.6,78.5 V81 M513.8,78.5 V81 M521.0,78.5 V81 M528.2,78.5 V81 M542.6,78.5 V81 M549.8,78.5 V81 M557.0,78.5 V81 M564.2,78.5 V81 M578.6,78.5 V81 M585.8,78.5 V81 M593.0,78.5 V81 M600.2,78.5 V81 M614.6,78.5 V81 M621.8,78.5 V81 M629.0,78.5 V81 M636.2,78.5 V81 M650.6,78.5 V81 M657.8,78.5 V81 M665.0,78.5 V81 M672.2,78.5 V81 M686.6,78.5 V81 M693.8,78.5 V81 M701.0,78.5 V81 M708.2,78.5 V81 M722.6,78.5 V81" stroke="#5c5c5c" stroke-width="0.8"/>
<path d="M81,94.6 H94 M81,130.6 H94 M81,166.6 H94 M81,202.6 H94 M81,238.6 H94 M81,274.6 H94 M81,310.6 H94 M81,346.6 H94 M81,382.6 H94 M81,418.6 H94 M81,454.6 H94 M81,490.6 H94 M81,526.6 H94 M81,562.6 H94 M81,598.6 H94 M81,634.6 H94 M81,670.6 H94 M81,706.6 H94" stroke="#5e5e5e" stroke-width="1"/>
<path d="M91.5,87.4 H94 M91.5,101.8 H94 M91.5,109.0 H94 M91.5,116.2 H94 M91.5,123.4 H94 M91.5,137.8 H94 M91.5,145.0 H94 M91.5,152.2 H94 M91.5,159.4 H94 M91.5,173.8 H94 M91.5,181.0 H94 M91.5,188.2 H94 M91.5,195.4 H94 M91.5,209.8 H94 M91.5,217.0 H94 M91.5,224.2 H94 M91.5,231.4 H94 M91.5,245.8 H94 M91.5,253.0 H94 M91.5,260.2 H94 M91.5,267.4 H94 M91.5,281.8 H94 M91.5,289.0 H94 M91.5,296.2 H94 M91.5,303.4 H94 M91.5,317.8 H94 M91.5,325.0 H94 M91.5,332.2 H94 M91.5,339.4 H94 M91.5,353.8 H94 M91.5,361.0 H94 M91.5,368.2 H94 M91.5,375.4 H94 M91.5,389.8 H94 M91.5,397.0 H94 M91.5,404.2 H94 M91.5,411.4 H94 M91.5,425.8 H94 M91.5,433.0 H94 M91.5,440.2 H94 M91.5,447.4 H94 M91.5,461.8 H94 M91.5,469.0 H94 M91.5,476.2 H94 M91.5,483.4 H94 M91.5,497.8 H94 M91.5,505.0 H94 M91.5,512.2 H94 M91.5,519.4 H94 M91.5,533.8 H94 M91.5,541.0 H94 M91.5,548.2 H94 M91.5,555.4 H94 M91.5,569.8 H94 M91.5,577.0 H94 M91.5,584.2 H94 M91.5,591.4 H94 M91.5,605.8 H94 M91.5,613.0 H94 M91.5,620.2 H94 M91.5,627.4 H94 M91.5,641.8 H94 M91.5,649.0 H94 M91.5,656.2 H94 M91.5,663.4 H94 M91.5,677.8 H94 M91.5,685.0 H94 M91.5,692.2 H94 M91.5,699.4 H94 M91.5,713.8 H94 M91.5,721.0 H94 M91.5,728.2 H94 M91.5,735.4 H94" stroke="#5c5c5c" stroke-width="0.8"/>
<rect x="81" y="69" width="13" height="12" fill="#555"/>
<path d="M84.5,69 V81 M88,69 V81 M91.5,69 V81 M81,72 H94 M81,75.5 H94 M81,78.5 H94" stroke="#464646" stroke-width="0.7"/>
<path d="M93.6,81.4 H725 M94.2,81 V739" stroke="#161616" stroke-width="1.4" fill="none"/>
<path d="M251.6,743 l2.6,3 l-2.6,3" fill="none" stroke="#cfcfcf" stroke-width="1.1"/>
<path d="M987.5,64 h7 M987.5,66.2 h7 M987.5,68.4 h7" stroke="#a0a0a0" stroke-width="1.1"/>
<path d="M775.5,57 V77 M807.5,57 V77 M840,57 V77 M871.5,57 V77 M937,57 V77" stroke="#3e3e3e" stroke-width="1" opacity="0.6"/>
<circle cx="752.6" cy="89.6" r="2.7" fill="none" stroke="#e2e2e2" stroke-width="1.2"/><path d="M750.6,91.8 l-2.6,2.8" stroke="#e2e2e2" stroke-width="1.4" stroke-linecap="round"/>
<path d="M829.2,89.2 l2.8,2.8 l2.8,-2.8" fill="none" stroke="#b0b0b0" stroke-width="1.1"/>
<path d="M880.2,109.8 l2.8,2.8 l2.8,-2.8" fill="none" stroke="#b0b0b0" stroke-width="1.1"/>
<path d="M990.5,110.0 l2.5,2.5 l2.5,-2.5" fill="none" stroke="#a8a8a8" stroke-width="1.1"/>
<path d="M990.5,130.9 l2.5,2.5 l2.5,-2.5" fill="none" stroke="#a8a8a8" stroke-width="1.1"/>
<rect x="871.6" y="86.6" width="9" height="7.6" fill="none" stroke="#e0e0e0" stroke-width="1.1"/><path d="M873,92.8 l2,-2.6 l1.6,1.6 l1.2,-1 l1.6,2z" fill="#e0e0e0"/>
<circle cx="895" cy="90.6" r="4" fill="none" stroke="#e0e0e0" stroke-width="1.1"/><path d="M897.8,87.8 A4,4 0 0 1 892.2,93.4Z" fill="#e0e0e0"/>
<path d="M908.8,86.4 H917.2 V88.8 H916.4 C916.2,87.8 915.8,87.5 914.8,87.5 H913.9 V93.3 C913.9,93.8 914.2,94 915.1,94 V94.8 H910.9 V94 C911.8,94 912.1,93.8 912.1,93.3 V87.5 H911.2 C910.2,87.5 909.8,87.8 909.6,88.8 H908.8Z" fill="#e0e0e0"/>
<rect x="927.6" y="87" width="7.6" height="7.2" fill="none" stroke="#e0e0e0" stroke-width="1"/><g fill="#e0e0e0"><rect x="926.4" y="85.8" width="2.4" height="2.4"/><rect x="934" y="85.8" width="2.4" height="2.4"/><rect x="926.4" y="93" width="2.4" height="2.4"/><rect x="934" y="93" width="2.4" height="2.4"/></g>
<path d="M946.8,86 h4 l2.6,2.6 v6.6 h-6.6z" fill="none" stroke="#e0e0e0" stroke-width="1"/><rect x="945.6" y="91" width="4.2" height="4.2" fill="#e0e0e0"/><path d="M950.8,86 v2.6 h2.6" fill="none" stroke="#e0e0e0" stroke-width="0.9"/>
<rect x="990.6" y="84.6" width="5" height="11.6" rx="2.5" fill="#464646"/><circle cx="993.1" cy="87.3" r="2.8" fill="#e4e4e4"/>
<path d="M958,117 H982 M958,138 H982" stroke="#6a6a6a" stroke-width="0.8"/>
<rect x="791" y="128" width="8" height="8" fill="#e6e6e6"/><g fill="#444"><rect x="791.9" y="128.9" width="2" height="2"/><rect x="796" y="128.9" width="2" height="2"/><rect x="794" y="131" width="2" height="2"/><rect x="791.9" y="133" width="2" height="2"/><rect x="796" y="133" width="2" height="2"/></g>
<path d="M816.4,126.6 L817,127.2 L812.6,133 L811.2,131.6 Z" fill="#e0e0e0"/><path d="M810.6,132.4 L812,133.8 C811.4,135.8 809.6,136.6 807.8,136.2 C808.8,135.2 809,133.2 810.6,132.4Z" fill="#e0e0e0"/>
<g transform="translate(829.2,132) scale(0.72)"><path d="M0,-6 V6 M-6,0 H6" stroke="#dcdcdc" stroke-width="1.4"/><path d="M0,-7.2 l2.4,2.8 h-4.8z M0,7.2 l2.4,-2.8 h-4.8z M-7.2,0 l2.8,2.4 v-4.8z M7.2,0 l-2.8,2.4 v-4.8z" fill="#dcdcdc"/></g>
<path d="M843.2,127.6 V136.4 M841,129.8 H850.8 M849,127.6 V134.4 H851.2 M841,134.4 H845" fill="none" stroke="#e0e0e0" stroke-width="1" stroke-dasharray="none"/><path d="M847.5,135.5 l3,0 M849,134 l0,3" stroke="#e0e0e0" stroke-width=".8"/>
<rect x="859.8" y="131.2" width="7.2" height="5.6" rx=".6" fill="#e0e0e0"/><path d="M861.3,131.4 v-1.8 a2.1,2.1 0 0 1 4.2,0 v1.8" fill="none" stroke="#e0e0e0" stroke-width="1.2"/><rect x="862.8" y="133.0" width="1.2" height="2" fill="#525252"/>
<rect x="967.4" y="218.0" width="7.2" height="5.6" rx=".6" fill="none" stroke="#e0e0e0" stroke-width="1"/><path d="M968.9,218.2 v-1.8 a2.1,2.1 0 0 1 4.2,0 v1.8" fill="none" stroke="#e0e0e0" stroke-width="1.1"/><rect x="970.4" y="219.8" width="1.2" height="2" fill="#e0e0e0"/>
<path d="M746.6,158.6 C748.6,154.6 754.6,154.6 756.6,158.6 C754.6,162.6 748.6,162.6 746.6,158.6 Z" fill="#e4e4e4"/><circle cx="751.6" cy="158.6" r="1.9" fill="#525252"/><circle cx="751.6" cy="158.6" r="0.9" fill="#e4e4e4"/>
<path d="M746.6,188.6 C748.6,184.6 754.6,184.6 756.6,188.6 C754.6,192.6 748.6,192.6 746.6,188.6 Z" fill="#e4e4e4"/><circle cx="751.6" cy="188.6" r="1.9" fill="#525252"/><circle cx="751.6" cy="188.6" r="0.9" fill="#e4e4e4"/>
<path d="M746.6,218.6 C748.6,214.6 754.6,214.6 756.6,218.6 C754.6,222.6 748.6,222.6 746.6,218.6 Z" fill="#e4e4e4"/><circle cx="751.6" cy="218.6" r="1.9" fill="#525252"/><circle cx="751.6" cy="218.6" r="0.9" fill="#e4e4e4"/>
<path d="M762.5,144 V232" stroke="#494949" stroke-width="1" opacity=".7"/>
<g><rect x="767.0" y="147.0" width="13.6" height="23.0" fill="#fff"/><rect x="767.00" y="147.00" width="2.00" height="2.00" fill="#cfcfcf"/><rect x="771.00" y="147.00" width="2.00" height="2.00" fill="#cfcfcf"/><rect x="775.00" y="147.00" width="2.00" height="2.00" fill="#cfcfcf"/><rect x="779.00" y="147.00" width="1.60" height="2.00" fill="#cfcfcf"/><rect x="769.00" y="149.00" width="2.00" height="2.00" fill="#cfcfcf"/><rect x="773.00" y="149.00" width="2.00" height="2.00" fill="#cfcfcf"/><rect x="777.00" y="149.00" width="2.00" height="2.00" fill="#cfcfcf"/><rect x="767.00" y="151.00" width="2.00" height="2.00" fill="#cfcfcf"/><rect x="771.00" y="151.00" width="2.00" height="2.00" fill="#cfcfcf"/><rect x="775.00" y="151.00" width="2.00" height="2.00" fill="#cfcfcf"/><rect x="779.00" y="151.00" width="1.60" height="2.00" fill="#cfcfcf"/><rect x="769.00" y="153.00" width="2.00" height="2.00" fill="#cfcfcf"/><rect x="773.00" y="153.00" width="2.00" height="2.00" fill="#cfcfcf"/><rect x="777.00" y="153.00" width="2.00" height="2.00" fill="#cfcfcf"/><rect x="767.00" y="155.00" width="2.00" height="2.00" fill="#cfcfcf"/><rect x="771.00" y="155.00" width="2.00" height="2.00" fill="#cfcfcf"/><rect x="775.00" y="155.00" width="2.00" height="2.00" fill="#cfcfcf"/><rect x="779.00" y="155.00" width="1.60" height="2.00" fill="#cfcfcf"/><rect x="769.00" y="157.00" width="2.00" height="2.00" fill="#cfcfcf"/><rect x="773.00" y="157.00" width="2.00" height="2.00" fill="#cfcfcf"/><rect x="777.00" y="157.00" width="2.00" height="2.00" fill="#cfcfcf"/><rect x="767.00" y="159.00" width="2.00" height="2.00" fill="#cfcfcf"/><rect x="771.00" y="159.00" width="2.00" height="2.00" fill="#cfcfcf"/><rect x="775.00" y="159.00" width="2.00" height="2.00" fill="#cfcfcf"/><rect x="779.00" y="159.00" width="1.60" height="2.00" fill="#cfcfcf"/><rect x="769.00" y="161.00" width="2.00" height="2.00" fill="#cfcfcf"/><rect x="773.00" y="161.00" width="2.00" height="2.00" fill="#cfcfcf"/><rect x="777.00" y="161.00" width="2.00" height="2.00" fill="#cfcfcf"/><rect x="767.00" y="163.00" width="2.00" height="2.00" fill="#cfcfcf"/><rect x="771.00" y="163.00" width="2.00" height="2.00" fill="#cfcfcf"/><rect x="775.00" y="163.00" width="2.00" height="2.00" fill="#cfcfcf"/><rect x="779.00" y="163.00" width="1.60" height="2.00" fill="#cfcfcf"/><rect x="769.00" y="165.00" width="2.00" height="2.00" fill="#cfcfcf"/><rect x="773.00" y="165.00" width="2.00" height="2.00" fill="#cfcfcf"/><rect x="777.00" y="165.00" width="2.00" height="2.00" fill="#cfcfcf"/><rect x="767.00" y="167.00" width="2.00" height="2.00" fill="#cfcfcf"/><rect x="771.00" y="167.00" width="2.00" height="2.00" fill="#cfcfcf"/><rect x="775.00" y="167.00" width="2.00" height="2.00" fill="#cfcfcf"/><rect x="779.00" y="167.00" width="1.60" height="2.00" fill="#cfcfcf"/><rect x="769.00" y="169.00" width="2.00" height="1.00" fill="#cfcfcf"/><rect x="773.00" y="169.00" width="2.00" height="1.00" fill="#cfcfcf"/><rect x="777.00" y="169.00" width="2.00" height="1.00" fill="#cfcfcf"/></g>
<path d="M767,166.4 C770,164.4 772,165.2 773.6,163.8 C776,162.2 778,161.8 780.6,161.4 V170 H767Z" fill="#fff"/><path d="M768.6,169.4 C771,166.6 773,167.4 774.4,165.6 C776.4,163.6 778,163.4 780.6,163 V170 H769Z" fill="#7cc6f0"/><path d="M772.5,170 C774,167 776.4,164.6 780.6,163.4 V170Z" fill="#1f9bee"/>
<rect x="766.5" y="146.5" width="14.6" height="24" fill="none" stroke="#262626" stroke-width="1"/>
<path d="M765.2,149.6 V145.2 H769.6 M778,145.2 H782.4 V149.6 M782.4,167.4 V171.8 H778 M769.6,171.8 H765.2 V167.4" fill="none" stroke="#ededed" stroke-width="1.1"/>
<g><rect x="767.0" y="177.0" width="13.6" height="23.0" fill="#fff"/><rect x="767.00" y="177.00" width="2.00" height="2.00" fill="#cfcfcf"/><rect x="771.00" y="177.00" width="2.00" height="2.00" fill="#cfcfcf"/><rect x="775.00" y="177.00" width="2.00" height="2.00" fill="#cfcfcf"/><rect x="779.00" y="177.00" width="1.60" height="2.00" fill="#cfcfcf"/><rect x="769.00" y="179.00" width="2.00" height="2.00" fill="#cfcfcf"/><rect x="773.00" y="179.00" width="2.00" height="2.00" fill="#cfcfcf"/><rect x="777.00" y="179.00" width="2.00" height="2.00" fill="#cfcfcf"/><rect x="767.00" y="181.00" width="2.00" height="2.00" fill="#cfcfcf"/><rect x="771.00" y="181.00" width="2.00" height="2.00" fill="#cfcfcf"/><rect x="775.00" y="181.00" width="2.00" height="2.00" fill="#cfcfcf"/><rect x="779.00" y="181.00" width="1.60" height="2.00" fill="#cfcfcf"/><rect x="769.00" y="183.00" width="2.00" height="2.00" fill="#cfcfcf"/><rect x="773.00" y="183.00" width="2.00" height="2.00" fill="#cfcfcf"/><rect x="777.00" y="183.00" width="2.00" height="2.00" fill="#cfcfcf"/><rect x="767.00" y="185.00" width="2.00" height="2.00" fill="#cfcfcf"/><rect x="771.00" y="185.00" width="2.00" height="2.00" fill="#cfcfcf"/><rect x="775.00" y="185.00" width="2.00" height="2.00" fill="#cfcfcf"/><rect x="779.00" y="185.00" width="1.60" height="2.00" fill="#cfcfcf"/><rect x="769.00" y="187.00" width="2.00" height="2.00" fill="#cfcfcf"/><rect x="773.00" y="187.00" width="2.00" height="2.00" fill="#cfcfcf"/><rect x="777.00" y="187.00" width="2.00" height="2.00" fill="#cfcfcf"/><rect x="767.00" y="189.00" width="2.00" height="2.00" fill="#cfcfcf"/><rect x="771.00" y="189.00" width="2.00" height="2.00" fill="#cfcfcf"/><rect x="775.00" y="189.00" width="2.00" height="2.00" fill="#cfcfcf"/><rect x="779.00" y="189.00" width="1.60" height="2.00" fill="#cfcfcf"/><rect x="769.00" y="191.00" width="2.00" height="2.00" fill="#cfcfcf"/><rect x="773.00" y="191.00" width="2.00" height="2.00" fill="#cfcfcf"/><rect x="777.00" y="191.00" width="2.00" height="2.00" fill="#cfcfcf"/><rect x="767.00" y="193.00" width="2.00" height="2.00" fill="#cfcfcf"/><rect x="771.00" y="193.00" width="2.00" height="2.00" fill="#cfcfcf"/><rect x="775.00" y="193.00" width="2.00" height="2.00" fill="#cfcfcf"/><rect x="779.00" y="193.00" width="1.60" height="2.00" fill="#cfcfcf"/><rect x="769.00" y="195.00" width="2.00" height="2.00" fill="#cfcfcf"/><rect x="773.00" y="195.00" width="2.00" height="2.00" fill="#cfcfcf"/><rect x="777.00" y="195.00" width="2.00" height="2.00" fill="#cfcfcf"/><rect x="767.00" y="197.00" width="2.00" height="2.00" fill="#cfcfcf"/><rect x="771.00" y="197.00" width="2.00" height="2.00" fill="#cfcfcf"/><rect x="775.00" y="197.00" width="2.00" height="2.00" fill="#cfcfcf"/><rect x="779.00" y="197.00" width="1.60" height="2.00" fill="#cfcfcf"/><rect x="769.00" y="199.00" width="2.00" height="1.00" fill="#cfcfcf"/><rect x="773.00" y="199.00" width="2.00" height="1.00" fill="#cfcfcf"/><rect x="777.00" y="199.00" width="2.00" height="1.00" fill="#cfcfcf"/></g>
<rect x="767" y="177" width="13.6" height="6" fill="#8fd3ec"/><rect x="767" y="182.8" width="13.6" height="2" fill="#2aa3dc"/><rect x="767" y="184.6" width="13.6" height="3" fill="#f7c46c"/><path d="M775,183.4 q1,-3 3,-4.2 M775,183.4 q.4,-2.4 -1.4,-3.6" stroke="#4aa53a" stroke-width="1.1" fill="none"/><path d="M772.6,180 q1.6,-1.4 3.4,0 q1.6,-2 3.6,-1.2" stroke="#6cbb3c" stroke-width="1.2" fill="none"/>
<rect x="766.5" y="176.5" width="14.6" height="24" fill="none" stroke="#2a2a2a" stroke-width="1"/>
<rect x="766.5" y="206.5" width="14.6" height="24" fill="#fff" stroke="#2a2a2a" stroke-width="1"/>
<g fill="none" stroke="#8e8e8e" stroke-width="1.1"><rect x="844.6" y="741.4" width="5.2" height="4" rx="2"/><rect x="849" y="741.4" width="5.2" height="4" rx="2"/></g>
<text x="866" y="747" font-family="Liberation Serif, serif" font-style="italic" font-weight="700" font-size="10.5" fill="#dadada">fx</text>
<rect x="885.4" y="739.6" width="9.6" height="7.4" fill="#dadada"/><circle cx="890.2" cy="743.3" r="2.1" fill="#555"/>
<circle cx="911.8" cy="743.4" r="4" fill="none" stroke="#dadada" stroke-width="1.1"/><path d="M914.6,740.6 A4,4 0 0 1 909,746.2Z" fill="#dadada"/>
<path d="M927.4,739.8 h3.6 l1,1.2 h4.8 v6 h-9.4z" fill="#dadada"/>
<path d="M948.4,739.8 h8 v7.4 h-5 l-3,-3z" fill="none" stroke="#dadada" stroke-width="1.1"/><path d="M948.4,744.2 h3 v3z" fill="#dadada"/>
<path d="M969.6,741 h7.6 M972,741 v-1.2 h2.8 v1.2 M970.4,741.6 l.5,6 h5 l.5,-6z" fill="none" stroke="#dadada" stroke-width="1"/><path d="M972.4,743 v3.4 M974.4,743 v3.4" stroke="#dadada" stroke-width=".8"/>
</svg>
<span class="t" style="left:85.0px;top:3.20px;font-size:10.5px;line-height:12.6px;color:#d2d2d2;transform:scaleX(0.8324);">Файл</span>
<span class="t" style="left:120.0px;top:3.20px;font-size:10.5px;line-height:12.6px;color:#d2d2d2;transform:scaleX(0.8625);">Редактирование</span>
<span class="t" style="left:203.5px;top:3.20px;font-size:10.5px;line-height:12.6px;color:#d2d2d2;transform:scaleX(0.8843);">Изображение</span>
<span class="t" style="left:276.5px;top:3.20px;font-size:10.5px;line-height:12.6px;color:#d2d2d2;transform:scaleX(0.8807);">Слои</span>
<span class="t" style="left:311.0px;top:3.20px;font-size:10.5px;line-height:12.6px;color:#d2d2d2;transform:scaleX(0.8700);">Текст</span>
<span class="t" style="left:346.5px;top:3.20px;font-size:10.5px;line-height:12.6px;color:#d2d2d2;transform:scaleX(0.8537);">Выделение</span>
<span class="t" style="left:407.5px;top:3.20px;font-size:10.5px;line-height:12.6px;color:#d2d2d2;transform:scaleX(0.8645);">Фильтр</span>
<span class="t" style="left:451.5px;top:3.20px;font-size:10.5px;line-height:12.6px;color:#d2d2d2;transform:scaleX(0.9302);">3D</span>
<span class="t" style="left:476.0px;top:3.20px;font-size:10.5px;line-height:12.6px;color:#d2d2d2;transform:scaleX(0.9071);">Просмотр</span>
<span class="t" style="left:533.0px;top:3.20px;font-size:10.5px;line-height:12.6px;color:#d2d2d2;transform:scaleX(0.9219);">Окно</span>
<span class="t" style="left:569.0px;top:3.20px;font-size:10.5px;line-height:12.6px;color:#d2d2d2;transform:scaleX(0.8252);">Справка</span>
<span class="t" style="-webkit-text-stroke:0.3px #e0e0e0;left:114.0px;top:27.90px;font-size:8.5px;line-height:10.2px;color:#e0e0e0;transform:scaleX(0.8943);">Автовыбор:</span>
<span class="t" style="-webkit-text-stroke:0.3px #e0e0e0;left:172.0px;top:27.90px;font-size:8.5px;line-height:10.2px;color:#e0e0e0;transform:scaleX(0.9461);">Группа</span>
<span class="t" style="-webkit-text-stroke:0.3px #e0e0e0;left:239.0px;top:27.90px;font-size:8.5px;line-height:10.2px;color:#e0e0e0;transform:scaleX(0.9005);">Показать упр. элем.</span>
<span class="t" style="left:640.5px;top:27.90px;font-size:8.5px;line-height:10.2px;color:#7e7e7e;transform:scaleX(0.8992);">3D-режим:</span>
<span class="t" style="-webkit-text-stroke:0.3px #e6e6e6;left:884.0px;top:27.90px;font-size:8.5px;line-height:10.2px;color:#e6e6e6;transform:scaleX(0.8855);">Основная рабочая среда</span>
<span class="t" style="left:89.0px;top:52.60px;font-size:9px;line-height:10.8px;color:#a9a9a9;transform:scaleX(0.9498);">1.psd @ 33,3% (Слой 8, RGB/8*) *</span>
<span class="t" style="left:252.0px;top:52.60px;font-size:9px;line-height:10.8px;color:#efefef;transform:scaleX(0.9384);font-weight:700;">Без имени-2 @ 6,25% (Слой 2, RGB/8) *</span>
<span class="t" style="left:88.0px;top:740.90px;font-size:8.5px;line-height:10.2px;color:#e8e8e8;transform:scaleX(0.8918);">6,25%</span>
<span class="t" style="left:149.0px;top:741.40px;font-size:8.5px;line-height:10.2px;color:#c8c8c8;transform:scaleX(0.8772);">Док: 225,9M/182,1M</span>
<span class="t" style="left:747.0px;top:60.60px;font-size:9px;line-height:10.8px;color:#b9b9b9;transform:scaleX(0.7737);font-weight:700;">Каналь</span>
<span class="t" style="left:779.0px;top:60.60px;font-size:9px;line-height:10.8px;color:#b9b9b9;transform:scaleX(0.7948);font-weight:700;">Контур</span>
<span class="t" style="left:811.5px;top:60.60px;font-size:9px;line-height:10.8px;color:#b9b9b9;transform:scaleX(0.7571);font-weight:700;">Свойст</span>
<span class="t" style="left:844.0px;top:60.60px;font-size:9px;line-height:10.8px;color:#b9b9b9;transform:scaleX(0.7693);font-weight:700;">Наб.ин</span>
<span class="t" style="left:876.0px;top:60.60px;font-size:9px;line-height:10.8px;color:#b9b9b9;transform:scaleX(0.7347);font-weight:700;">Операц</span>
<span class="t" style="left:941.0px;top:60.60px;font-size:9px;line-height:10.8px;color:#b9b9b9;transform:scaleX(0.8577);font-weight:700;">Истори</span>
<span class="t" style="left:908.0px;top:60.60px;font-size:9px;line-height:10.8px;color:#f4f4f4;transform:scaleX(0.8081);font-weight:700;">Слои</span>
<span class="t" style="-webkit-text-stroke:0.3px #e4e4e4;left:759.8px;top:85.50px;font-size:8.5px;line-height:10.2px;color:#e4e4e4;transform:scaleX(0.8772);">Вид</span>
<span class="t" style="-webkit-text-stroke:0.3px #e4e4e4;left:749.0px;top:105.90px;font-size:8.5px;line-height:10.2px;color:#e4e4e4;transform:scaleX(0.8785);">Обычные</span>
<span class="t" style="left:893.6px;top:105.90px;font-size:8.5px;line-height:10.2px;color:#c4c4c4;transform:scaleX(0.8985);">Непрозрачность:</span>
<span class="t" style="left:961.4px;top:105.90px;font-size:8.5px;line-height:10.2px;color:#e8e8e8;transform:scaleX(0.8092);">100%</span>
<span class="t" style="left:744.6px;top:126.90px;font-size:8.5px;line-height:10.2px;color:#c4c4c4;transform:scaleX(0.9053);">Закрепить:</span>
<span class="t" style="left:923.6px;top:126.90px;font-size:8.5px;line-height:10.2px;color:#c4c4c4;transform:scaleX(0.8549);">Заливка:</span>
<span class="t" style="left:961.4px;top:126.90px;font-size:8.5px;line-height:10.2px;color:#e8e8e8;transform:scaleX(0.8092);">100%</span>
<span class="t" style="left:789.0px;top:154.40px;font-size:8.5px;line-height:10.2px;color:#ececec;transform:scaleX(0.8428);">Слой 2</span>
<span class="t" style="left:789.0px;top:183.90px;font-size:8.5px;line-height:10.2px;color:#ececec;transform:scaleX(0.8428);">Слой 1</span>
<span class="t" style="left:790.0px;top:214.40px;font-size:8px;line-height:9.6px;color:#e6e6e6;transform:scaleX(0.9199);font-style:italic;">Фон</span>
<span class="t" style="left:105.8px;top:71.08px;font-size:8.2px;line-height:9.84px;color:#a6a6a6;transform:scaleX(0.9002);">20</span>
<span class="t" style="left:141.8px;top:71.08px;font-size:8.2px;line-height:9.84px;color:#a6a6a6;transform:scaleX(0.9002);">15</span>
<span class="t" style="left:177.8px;top:71.08px;font-size:8.2px;line-height:9.84px;color:#a6a6a6;transform:scaleX(0.9002);">10</span>
<span class="t" style="left:213.8px;top:71.08px;font-size:8.2px;line-height:9.84px;color:#a6a6a6;transform:scaleX(0.8986);">5</span>
<span class="t" style="left:249.8px;top:71.08px;font-size:8.2px;line-height:9.84px;color:#a6a6a6;transform:scaleX(0.8986);">0</span>
<span class="t" style="left:285.8px;top:71.08px;font-size:8.2px;line-height:9.84px;color:#a6a6a6;transform:scaleX(0.8986);">5</span>
<span class="t" style="left:321.8px;top:71.08px;font-size:8.2px;line-height:9.84px;color:#a6a6a6;transform:scaleX(0.9002);">10</span>
<span class="t" style="left:357.8px;top:71.08px;font-size:8.2px;line-height:9.84px;color:#a6a6a6;transform:scaleX(0.9002);">15</span>
<span class="t" style="left:393.8px;top:71.08px;font-size:8.2px;line-height:9.84px;color:#a6a6a6;transform:scaleX(0.9002);">20</span>
<span class="t" style="left:429.8px;top:71.08px;font-size:8.2px;line-height:9.84px;color:#a6a6a6;transform:scaleX(0.9002);">25</span>
<span class="t" style="left:465.8px;top:71.08px;font-size:8.2px;line-height:9.84px;color:#a6a6a6;transform:scaleX(0.9002);">30</span>
<span class="t" style="left:501.8px;top:71.08px;font-size:8.2px;line-height:9.84px;color:#a6a6a6;transform:scaleX(0.9002);">35</span>
<span class="t" style="left:537.8px;top:71.08px;font-size:8.2px;line-height:9.84px;color:#a6a6a6;transform:scaleX(0.9002);">40</span>
<span class="t" style="left:573.8px;top:71.08px;font-size:8.2px;line-height:9.84px;color:#a6a6a6;transform:scaleX(0.9002);">45</span>
<span class="t" style="left:609.8px;top:71.08px;font-size:8.2px;line-height:9.84px;color:#a6a6a6;transform:scaleX(0.9002);">50</span>
<span class="t" style="left:645.8px;top:71.08px;font-size:8.2px;line-height:9.84px;color:#a6a6a6;transform:scaleX(0.9002);">55</span>
<span class="t" style="left:681.8px;top:71.08px;font-size:8.2px;line-height:9.84px;color:#a6a6a6;transform:scaleX(0.9002);">60</span>
<span class="t" style="left:717.8px;top:71.08px;font-size:8.2px;line-height:9.84px;color:#a6a6a6;transform:scaleX(0.9002);">65</span>
<span class="t" style="left:82.8px;top:94.98px;font-size:8.7px;line-height:10.44px;color:#a6a6a6;transform:scaleX(0.9290);">5</span>
<span class="t" style="left:82.8px;top:130.98px;font-size:8.7px;line-height:10.44px;color:#a6a6a6;transform:scaleX(0.9290);">0</span>
<span class="t" style="left:82.8px;top:166.98px;font-size:8.7px;line-height:10.44px;color:#a6a6a6;transform:scaleX(0.9290);">5</span>
<span class="t" style="left:89.3px;top:205.20px;font-size:7.4px;line-height:8.0px;color:#a6a6a6;transform-origin:0 0;transform:rotate(90deg) scaleX(1.6516);">10</span>
<span class="t" style="left:89.3px;top:241.20px;font-size:7.4px;line-height:8.0px;color:#a6a6a6;transform-origin:0 0;transform:rotate(90deg) scaleX(1.6516);">15</span>
<span class="t" style="left:89.3px;top:277.20px;font-size:7.4px;line-height:8.0px;color:#a6a6a6;transform-origin:0 0;transform:rotate(90deg) scaleX(1.6516);">20</span>
<span class="t" style="left:89.3px;top:313.20px;font-size:7.4px;line-height:8.0px;color:#a6a6a6;transform-origin:0 0;transform:rotate(90deg) scaleX(1.6516);">25</span>
<span class="t" style="left:89.3px;top:349.20px;font-size:7.4px;line-height:8.0px;color:#a6a6a6;transform-origin:0 0;transform:rotate(90deg) scaleX(1.6516);">30</span>
<span class="t" style="left:89.3px;top:385.20px;font-size:7.4px;line-height:8.0px;color:#a6a6a6;transform-origin:0 0;transform:rotate(90deg) scaleX(1.6516);">35</span>
<span class="t" style="left:89.3px;top:421.20px;font-size:7.4px;line-height:8.0px;color:#a6a6a6;transform-origin:0 0;transform:rotate(90deg) scaleX(1.6516);">40</span>
<span class="t" style="left:89.3px;top:457.20px;font-size:7.4px;line-height:8.0px;color:#a6a6a6;transform-origin:0 0;transform:rotate(90deg) scaleX(1.6516);">45</span>
<span class="t" style="left:89.3px;top:493.20px;font-size:7.4px;line-height:8.0px;color:#a6a6a6;transform-origin:0 0;transform:rotate(90deg) scaleX(1.6516);">50</span>
<span class="t" style="left:89.3px;top:529.20px;font-size:7.4px;line-height:8.0px;color:#a6a6a6;transform-origin:0 0;transform:rotate(90deg) scaleX(1.6516);">55</span>
<span class="t" style="left:89.3px;top:565.20px;font-size:7.4px;line-height:8.0px;color:#a6a6a6;transform-origin:0 0;transform:rotate(90deg) scaleX(1.6516);">60</span>
<span class="t" style="left:89.3px;top:601.20px;font-size:7.4px;line-height:8.0px;color:#a6a6a6;transform-origin:0 0;transform:rotate(90deg) scaleX(1.6516);">65</span>
<span class="t" style="left:89.3px;top:637.20px;font-size:7.4px;line-height:8.0px;color:#a6a6a6;transform-origin:0 0;transform:rotate(90deg) scaleX(1.6516);">70</span>
<span class="t" style="left:89.3px;top:673.20px;font-size:7.4px;line-height:8.0px;color:#a6a6a6;transform-origin:0 0;transform:rotate(90deg) scaleX(1.6516);">75</span>
<span class="t" style="left:89.3px;top:709.20px;font-size:7.4px;line-height:8.0px;color:#a6a6a6;transform-origin:0 0;transform:rotate(90deg) scaleX(1.6516);">80</span>
<span class="t" style="-webkit-text-stroke:0.3px #f20d12;left:88.0px;top:505.50px;font-size:21.5px;line-height:25.8px;color:#f20d12;transform:scaleX(0.9877);font-style:italic;font-family:'Liberation Serif',serif;">Выбор</span>
<span class="t" style="-webkit-text-stroke:0.3px #f20d12;left:154.5px;top:505.50px;font-size:21.5px;line-height:25.8px;color:#f20d12;transform:scaleX(0.9873);font-style:italic;font-family:'Liberation Serif',serif;">фонового</span>
<span class="t" style="-webkit-text-stroke:0.3px #f20d12;left:250.5px;top:505.50px;font-size:21.5px;line-height:25.8px;color:#f20d12;transform:scaleX(1.0556);font-style:italic;font-family:'Liberation Serif',serif;">цвета</span>
</div>
</body></html>
